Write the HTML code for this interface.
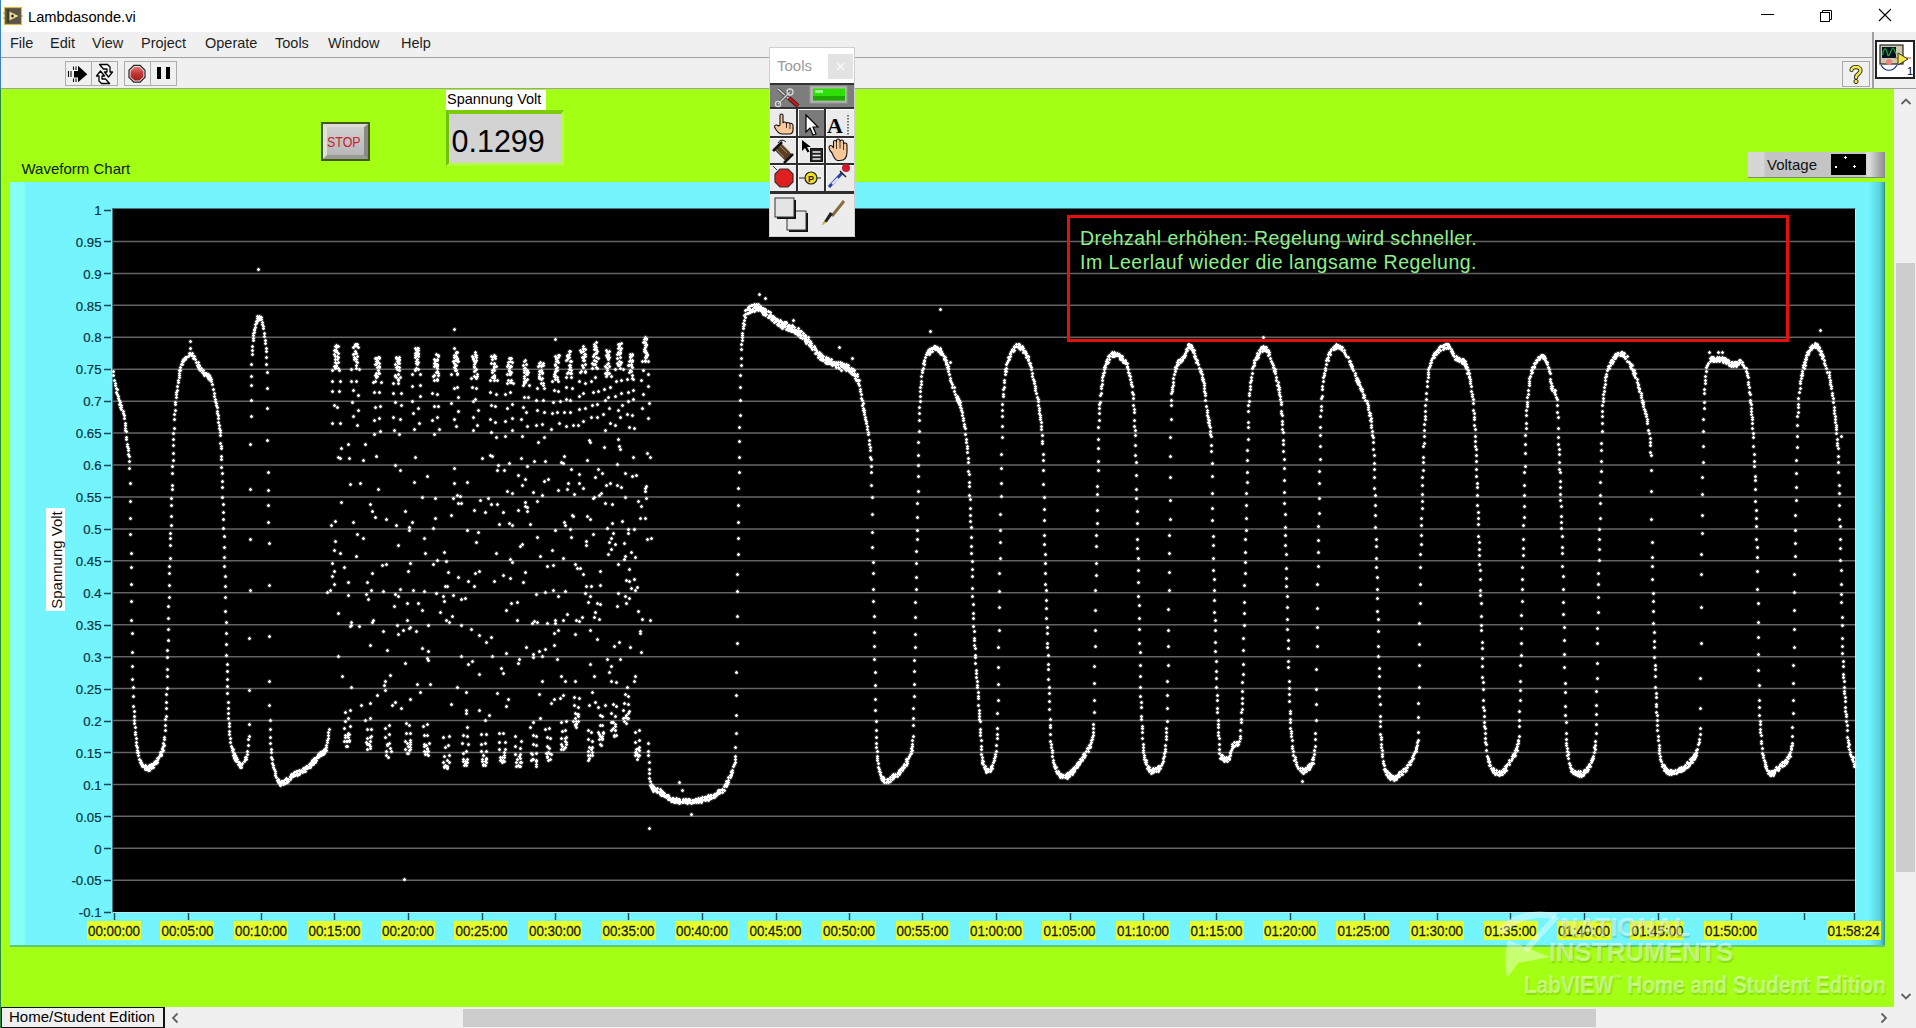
<!DOCTYPE html>
<html><head><meta charset="utf-8"><title>Lambdasonde.vi</title>
<style>
html,body{margin:0;padding:0;width:1916px;height:1028px;overflow:hidden;background:#fff;font-family:"Liberation Sans", sans-serif}
.b{position:absolute;display:block}
.t{position:absolute;line-height:1;white-space:nowrap;font-family:"Liberation Sans", sans-serif}
</style></head><body>
<div class="b" style="left:0px;top:0px;width:1916px;height:32px;background:#fff"></div><div class="b" style="left:0px;top:32px;width:1916px;height:57px;background:#f0f0f0"></div><div class="b" style="left:0px;top:57px;width:1873px;height:1px;background:#a0a0a0"></div><div class="b" style="left:0px;top:88px;width:1916px;height:1px;background:#a0a0a0"></div><div class="b" style="left:1872px;top:32px;width:2px;height:56px;background:#a0a0a0"></div><svg class="b" style="left:0px;top:0px" width="28" height="30" viewBox="0 0 28 30"><rect x="4.5" y="7.5" width="17" height="17" fill="#5a5444" stroke="#d8b850" stroke-width="1.2"/><path d="M8 9V23" stroke="#2a2618" stroke-width="1"/><path d="M9.5 11.5 L18.5 16 L9.5 20.5 Z" fill="#f0dc90"/><path d="M12.5 14.3 L14 16 L12.5 17.7 L11 16Z" fill="#1a1408"/><path d="M3 13h2M3 18h2M21 16h2" stroke="#8a9a90" stroke-width="1"/></svg><div class="t" style="left:28px;top:9.56px;font-size:14.7px;color:#000;">Lambdasonde.vi</div><div class="b" style="left:1761px;top:14px;width:13px;height:1px;background:#000"></div><svg class="b" style="left:1818px;top:8px" width="16" height="16" viewBox="0 0 16 16"><rect x="2.5" y="4.5" width="9" height="9" fill="none" stroke="#000" stroke-width="1"/><path d="M4.5 4.5 V2.5 H13.5 V11.5 H11.5" fill="none" stroke="#000" stroke-width="1"/></svg><svg class="b" style="left:1877px;top:7px" width="16" height="16" viewBox="0 0 16 16"><path d="M2 2 L14 14 M14 2 L2 14" stroke="#000" stroke-width="1.1"/></svg><div class="t" style="left:10px;top:36.23px;font-size:14.5px;color:#1e1e1e;">File</div><div class="t" style="left:50px;top:36.23px;font-size:14.5px;color:#1e1e1e;">Edit</div><div class="t" style="left:92px;top:36.23px;font-size:14.5px;color:#1e1e1e;">View</div><div class="t" style="left:141px;top:36.23px;font-size:14.5px;color:#1e1e1e;">Project</div><div class="t" style="left:205px;top:36.23px;font-size:14.5px;color:#1e1e1e;">Operate</div><div class="t" style="left:275px;top:36.23px;font-size:14.5px;color:#1e1e1e;">Tools</div><div class="t" style="left:328px;top:36.23px;font-size:14.5px;color:#1e1e1e;">Window</div><div class="t" style="left:401px;top:36.23px;font-size:14.5px;color:#1e1e1e;">Help</div><div class="b" style="left:65px;top:61px;width:27px;height:25px;background:#f0f0f0;border:1px solid #adadad;box-sizing:border-box"></div><div class="b" style="left:91px;top:61px;width:27px;height:25px;background:#f0f0f0;border:1px solid #adadad;box-sizing:border-box"></div><div class="b" style="left:124px;top:61px;width:27px;height:25px;background:#f0f0f0;border:1px solid #adadad;box-sizing:border-box"></div><div class="b" style="left:150px;top:61px;width:27px;height:25px;background:#f0f0f0;border:1px solid #adadad;box-sizing:border-box"></div><svg class="b" style="left:66px;top:62px" width="25" height="24" viewBox="0 0 25 24"><path d="M12 3.8 L21.3 12.2 L12 20.3 Z" fill="#000"/><rect x="8" y="9" width="4.5" height="6.5" fill="#000"/><path d="M7.5 4.5v3.5M10 4.5v3.5M7.5 16.5v3.5M10 16.5v3.5M2.5 9v6M5 9v6" stroke="#111" stroke-width="1.1"/></svg><svg class="b" style="left:92px;top:62px" width="25" height="24" viewBox="0 0 25 24"><path d="M7.5 2.5 H15.5 L18 5 V10 L20.5 10 L16.5 15 L12.5 10 H15 V7 H11.5 Z" fill="#fff" stroke="#000" stroke-width="1.3" stroke-linejoin="round"/><path d="M17.5 21.5 H9.5 L7 19 V14 L4.5 14 L8.5 9 L12.5 14 H10 V17 H13.5 Z" fill="#fff" stroke="#000" stroke-width="1.3" stroke-linejoin="round"/></svg><svg class="b" style="left:125px;top:62px" width="25" height="24" viewBox="0 0 25 24"><defs><linearGradient id="ab" x1="0" y1="0" x2="0" y2="1"><stop offset="0" stop-color="#e27070"/><stop offset="0.5" stop-color="#c23434"/><stop offset="1" stop-color="#9a2020"/></linearGradient></defs><path d="M8.6 2.8 H15.4 L20.6 8 V15.6 L15.4 20.8 H8.6 L3.4 15.6 V8 Z" fill="#222"/><path d="M9.1 4 H14.9 L19.4 8.5 V15.1 L14.9 19.6 H9.1 L4.6 15.1 V8.5 Z" fill="#f4e0e0"/><path d="M9.5 5 H14.5 L18.4 8.9 V14.7 L14.5 18.6 H9.5 L5.6 14.7 V8.9 Z" fill="url(#ab)"/></svg><div class="b" style="left:157px;top:67px;width:4px;height:12px;background:#000"></div><div class="b" style="left:166px;top:67px;width:4px;height:12px;background:#000"></div><div class="b" style="left:1842px;top:61px;width:28px;height:26px;background:#f0f0f0;border:1px solid #a8a8a8;box-sizing:border-box"></div><svg class="b" style="left:1846px;top:63px" width="20" height="22" viewBox="0 0 20 22"><path d="M5.5 7 C5.5 3 14.5 3 14.5 7.5 C14.5 11 10 11 10 14.5" fill="none" stroke="#222" stroke-width="4.2" stroke-linecap="round"/><path d="M5.5 7 C5.5 3 14.5 3 14.5 7.5 C14.5 11 10 11 10 14.5" fill="none" stroke="#f4ee40" stroke-width="2.4" stroke-linecap="round"/><circle cx="10" cy="18.5" r="2.1" fill="#f4ee40" stroke="#222" stroke-width="1"/></svg><div class="b" style="left:1875px;top:40px;width:40px;height:39px;background:#fff;border:2px solid #222;box-sizing:border-box"></div><svg class="b" style="left:1877px;top:42px" width="36" height="35" viewBox="0 0 36 35"><rect x="3" y="3" width="23" height="19" fill="#cfc8a8" stroke="#222" stroke-width="1.2"/><rect x="5" y="5" width="14" height="11" fill="#012"/><path d="M5.5 13 C7 5 9 5 10.5 12 C12 18 14 6 16 6 C17 6 18 10 19 12" fill="none" stroke="#1fa83a" stroke-width="1.2"/><path d="M4 23 C8 30 16 30 20 23" fill="none" stroke="#1a2a9a" stroke-width="1.2"/><circle cx="12" cy="20" r="3" fill="#f08080"/><path d="M18 16 H34" stroke="#e04020" stroke-width="1"/><path d="M21 11 L31 17 L21 23 Z" fill="#f2e640" stroke="#333" stroke-width="1"/><text x="30" y="33" font-size="11" font-family="Liberation Sans" fill="#000">1</text></svg><div class="b" style="left:1px;top:89px;width:1893px;height:918px;background:#a3ff14"></div><div class="b" style="left:0px;top:0px;width:1px;height:89px;background:#3a7fbf"></div><div class="b" style="left:0px;top:89px;width:1px;height:939px;background:#2b8a3e"></div><div class="b" style="left:1894px;top:89px;width:22px;height:918px;background:#f0f0f0"></div><div class="b" style="left:1896px;top:263px;width:19px;height:609px;background:#cdcdcd"></div><svg class="b" style="left:1899px;top:95px" width="14" height="12" viewBox="0 0 14 12"><path d="M2.5 9 L7 4.5 L11.5 9" fill="none" stroke="#606060" stroke-width="1.8"/></svg><svg class="b" style="left:1899px;top:991px" width="14" height="12" viewBox="0 0 14 12"><path d="M2.5 3 L7 7.5 L11.5 3" fill="none" stroke="#606060" stroke-width="1.8"/></svg><div class="b" style="left:1px;top:1007px;width:1915px;height:21px;background:#f0f0f0"></div><div class="b" style="left:463px;top:1009px;width:1133px;height:18px;background:#cdcdcd"></div><div class="b" style="left:1px;top:1007px;width:164px;height:21px;background:#f0f0f0;border-style:solid;border-color:#111;border-width:1px 2px 1px 1px;box-sizing:border-box"></div><div class="t" style="left:9px;top:1009.00px;font-size:15px;color:#000;">Home/Student Edition</div><svg class="b" style="left:169px;top:1011px" width="12" height="14" viewBox="0 0 12 14"><path d="M8.5 2.5 L4 7 L8.5 11.5" fill="none" stroke="#606060" stroke-width="1.8"/></svg><svg class="b" style="left:1878px;top:1011px" width="12" height="14" viewBox="0 0 12 14"><path d="M3.5 2.5 L8 7 L3.5 11.5" fill="none" stroke="#606060" stroke-width="1.8"/></svg><div class="t" style="left:21.5px;top:161.30px;font-size:15px;color:#082008;">Waveform Chart</div><div class="b" style="left:321px;top:122px;width:49px;height:39px;background:#44581e"></div><div class="b" style="left:323px;top:124px;width:45px;height:35px;background:linear-gradient(#cfcfcf,#b8b8b8);border-style:solid;border-width:3px 4px 4px 4px;border-color:#dcdcd4 #8a8a84 #9a9a94 #e2e2dc;box-sizing:border-box"></div><div class="t" style="left:326.5px;top:134.30px;font-size:15px;color:#c8202c;transform:scaleX(0.83);transform-origin:0 0">STOP</div><div class="b" style="left:446px;top:90px;width:100px;height:20px;background:#fff"></div><div class="t" style="left:447px;top:92.23px;font-size:14.5px;color:#000;">Spannung Volt</div><div class="b" style="left:446px;top:110px;width:118px;height:56px;background:#9cf012;border-top:4px solid #7ccc0c;border-left:3px solid #70c00a;border-right:3px solid #b4ff40;border-bottom:3px solid #b0ff38;box-sizing:border-box"></div><div class="b" style="left:449px;top:114px;width:112px;height:49px;background:#d3d3d3"></div><div class="t" style="left:451.5px;top:125.68px;font-size:30.5px;color:#000;">0.1299</div><div class="b" style="left:1748px;top:152px;width:137px;height:26px;background:linear-gradient(90deg,#d6d6d6 0,#d6d6d6 11%,#c4c4c4 13%,#c4c4c4 84%,#e0e0e0 88%,#8a8a8a 100%);border-bottom:1px solid #7a8a6a;box-sizing:border-box"></div><div class="t" style="left:1767px;top:156.60px;font-size:15px;color:#111;">Voltage</div><div class="b" style="left:1831px;top:154px;width:35px;height:21px;background:#000"></div><svg class="b" style="left:1831px;top:154px" width="35" height="21"><path d="M13 3h3v1h-3zM14 2h1v3h-1zM4 12h2v2h-2zM22 12h3v1h-3zM23 11h1v3h-1z" fill="#fff"/></svg><div class="b" style="left:10px;top:182px;width:1875px;height:765px;background:linear-gradient(90deg,#86fff4 0,#86fff4 14px,#74f5fe 16px,#74f5fe 1858px,#5ad2dc 1870px,#3aa8b0 1874px,#2d8a48 1875px);border-bottom:2px solid #5cc878;box-sizing:border-box"></div><div class="b" style="left:112px;top:208px;width:1744px;height:705px;background:#000;border-left:1px solid #3a7a80;border-top:1px solid #3a7a80;border-right:1px solid #bff2f6;border-bottom:1px solid #b4eef2;box-sizing:border-box"></div><svg class="b" style="left:0;top:0" width="1916" height="1028" viewBox="0 0 1916 1028"><path d="M113 241.44H1855M113 273.38H1855M113 305.32H1855M113 337.26H1855M113 369.20H1855M113 401.14H1855M113 433.08H1855M113 465.02H1855M113 496.96H1855M113 528.90H1855M113 560.84H1855M113 592.78H1855M113 624.72H1855M113 656.66H1855M113 688.60H1855M113 720.54H1855M113 752.48H1855M113 784.42H1855M113 816.36H1855M113 848.30H1855M113 880.24H1855" stroke="#636363" stroke-width="1.5"/><path d="M104 210.5H111M104 241.5H111M104 273.5H111M104 305.5H111M104 337.5H111M104 369.5H111M104 401.5H111M104 433.5H111M104 465.5H111M104 497.5H111M104 529.5H111M104 561.5H111M104 593.5H111M104 625.5H111M104 657.5H111M104 689.5H111M104 721.5H111M104 752.5H111M104 784.5H111M104 816.5H111M104 848.5H111M104 880.5H111M104 912.5H111" stroke="#0c4a58" stroke-width="1.6"/><path d="M114.5 913V920M188.5 913V920M261.5 913V920M334.5 913V920M408.5 913V920M482.5 913V920M555.5 913V920M628.5 913V920M702.5 913V920M776.5 913V920M849.5 913V920M922.5 913V920M996.5 913V920M1070.5 913V920M1143.5 913V920M1216.5 913V920M1290.5 913V920M1364.5 913V920M1437.5 913V920M1510.5 913V920M1584.5 913V920M1658.5 913V920M1731.5 913V920M1804.5 913V920M1854.5 913V920" stroke="#0c4a58" stroke-width="1.4"/><path d="M113.5 371.5h0M113.5 375.5h0M114.5 380.5h0M115.5 383.5h0M115.5 385.5h0M116.5 388.5h0M116.5 392.5h0M117.5 389.5h0M117.5 394.5h0M118.5 398.5h0M118.5 396.5h0M118.5 398.5h0M119.5 400.5h0M119.5 404.5h0M120.5 402.5h0M120.5 407.5h0M121.5 405.5h0M121.5 407.5h0M121.5 409.5h0M123.5 411.5h0M123.5 413.5h0M123.5 411.5h0M124.5 415.5h0M124.5 418.5h0M125.5 423.5h0M125.5 425.5h0M125.5 430.5h0M125.5 428.5h0M126.5 431.5h0M126.5 437.5h0M126.5 439.5h0M127.5 444.5h0M127.5 446.5h0M128.5 450.5h0M128.5 448.5h0M128.5 454.5h0M129.5 456.5h0M129.5 461.5h0M129.5 468.5h0M130.5 483.5h0M130.5 501.5h0M130.5 518.5h0M130.5 534.5h0M131.5 553.5h0M131.5 567.5h0M131.5 584.5h0M131.5 601.5h0M131.5 620.5h0M132.5 633.5h0M132.5 652.5h0M132.5 666.5h0M132.5 679.5h0M133.5 687.5h0M133.5 696.5h0M133.5 706.5h0M134.5 711.5h0M134.5 716.5h0M134.5 720.5h0M134.5 723.5h0M135.5 727.5h0M135.5 732.5h0M135.5 734.5h0M136.5 738.5h0M136.5 742.5h0M136.5 745.5h0M137.5 747.5h0M137.5 750.5h0M137.5 752.5h0M138.5 755.5h0M138.5 752.5h0M138.5 755.5h0M139.5 759.5h0M140.5 762.5h0M140.5 760.5h0M141.5 762.5h0M141.5 764.5h0M141.5 762.5h0M142.5 766.5h0M142.5 764.5h0M143.5 766.5h0M145.5 768.5h0M145.5 765.5h0M145.5 767.5h0M145.5 769.5h0M146.5 766.5h0M146.5 769.5h0M146.5 767.5h0M147.5 769.5h0M148.5 767.5h0M148.5 770.5h0M149.5 768.5h0M149.5 770.5h0M149.5 765.5h0M149.5 768.5h0M150.5 766.5h0M151.5 768.5h0M151.5 764.5h0M152.5 767.5h0M152.5 764.5h0M153.5 767.5h0M153.5 764.5h0M154.5 762.5h0M154.5 764.5h0M155.5 761.5h0M156.5 763.5h0M157.5 760.5h0M157.5 762.5h0M157.5 758.5h0M157.5 760.5h0M158.5 758.5h0M159.5 756.5h0M160.5 754.5h0M160.5 752.5h0M161.5 755.5h0M161.5 752.5h0M161.5 754.5h0M162.5 749.5h0M162.5 751.5h0M162.5 748.5h0M163.5 750.5h0M163.5 746.5h0M163.5 743.5h0M164.5 745.5h0M164.5 739.5h0M164.5 737.5h0M165.5 730.5h0M165.5 725.5h0M165.5 719.5h0M166.5 716.5h0M166.5 708.5h0M166.5 702.5h0M166.5 694.5h0M167.5 688.5h0M167.5 676.5h0M167.5 669.5h0M167.5 657.5h0M167.5 650.5h0M168.5 640.5h0M168.5 629.5h0M168.5 618.5h0M168.5 606.5h0M169.5 597.5h0M169.5 585.5h0M169.5 573.5h0M169.5 566.5h0M170.5 558.5h0M170.5 545.5h0M170.5 538.5h0M170.5 533.5h0M171.5 525.5h0M171.5 516.5h0M171.5 505.5h0M171.5 498.5h0M172.5 489.5h0M172.5 485.5h0M172.5 473.5h0M172.5 466.5h0M173.5 460.5h0M173.5 453.5h0M173.5 445.5h0M173.5 439.5h0M173.5 433.5h0M174.5 428.5h0M174.5 419.5h0M174.5 414.5h0M175.5 410.5h0M175.5 404.5h0M175.5 402.5h0M176.5 397.5h0M176.5 394.5h0M176.5 392.5h0M177.5 390.5h0M177.5 386.5h0M178.5 382.5h0M178.5 380.5h0M179.5 377.5h0M179.5 375.5h0M179.5 370.5h0M179.5 373.5h0M180.5 370.5h0M180.5 367.5h0M181.5 364.5h0M182.5 361.5h0M182.5 364.5h0M182.5 361.5h0M183.5 359.5h0M183.5 361.5h0M184.5 359.5h0M185.5 357.5h0M185.5 359.5h0M186.5 357.5h0M188.5 356.5h0M189.5 353.5h0M189.5 355.5h0M190.5 353.5h0M191.5 355.5h0M192.5 353.5h0M192.5 355.5h0M192.5 353.5h0M193.5 356.5h0M193.5 358.5h0M194.5 356.5h0M195.5 359.5h0M196.5 362.5h0M197.5 365.5h0M198.5 362.5h0M198.5 364.5h0M198.5 367.5h0M199.5 365.5h0M199.5 369.5h0M199.5 366.5h0M199.5 368.5h0M200.5 370.5h0M201.5 368.5h0M202.5 372.5h0M203.5 370.5h0M203.5 373.5h0M203.5 370.5h0M203.5 372.5h0M204.5 375.5h0M205.5 373.5h0M206.5 375.5h0M206.5 373.5h0M207.5 376.5h0M208.5 374.5h0M208.5 378.5h0M209.5 375.5h0M209.5 379.5h0M210.5 377.5h0M210.5 380.5h0M210.5 377.5h0M211.5 379.5h0M211.5 381.5h0M211.5 379.5h0M212.5 384.5h0M213.5 389.5h0M214.5 393.5h0M214.5 396.5h0M215.5 399.5h0M215.5 401.5h0M216.5 403.5h0M216.5 405.5h0M217.5 407.5h0M217.5 413.5h0M217.5 411.5h0M218.5 415.5h0M218.5 418.5h0M218.5 422.5h0M219.5 425.5h0M219.5 428.5h0M220.5 430.5h0M220.5 432.5h0M220.5 435.5h0M220.5 443.5h0M221.5 446.5h0M221.5 448.5h0M221.5 456.5h0M221.5 459.5h0M221.5 467.5h0M222.5 473.5h0M222.5 481.5h0M222.5 487.5h0M222.5 497.5h0M223.5 504.5h0M223.5 512.5h0M223.5 519.5h0M223.5 528.5h0M224.5 536.5h0M224.5 547.5h0M224.5 557.5h0M224.5 566.5h0M225.5 576.5h0M225.5 586.5h0M225.5 597.5h0M225.5 611.5h0M226.5 622.5h0M226.5 633.5h0M226.5 644.5h0M226.5 655.5h0M227.5 664.5h0M227.5 671.5h0M227.5 679.5h0M227.5 686.5h0M227.5 693.5h0M228.5 702.5h0M228.5 708.5h0M228.5 713.5h0M228.5 718.5h0M229.5 723.5h0M229.5 726.5h0M229.5 731.5h0M229.5 734.5h0M230.5 738.5h0M230.5 742.5h0M231.5 746.5h0M232.5 748.5h0M232.5 750.5h0M233.5 752.5h0M233.5 749.5h0M233.5 755.5h0M234.5 753.5h0M234.5 757.5h0M234.5 755.5h0M234.5 758.5h0M235.5 755.5h0M235.5 758.5h0M235.5 760.5h0M236.5 757.5h0M236.5 761.5h0M236.5 759.5h0M236.5 761.5h0M237.5 759.5h0M237.5 761.5h0M238.5 764.5h0M239.5 762.5h0M239.5 765.5h0M240.5 767.5h0M240.5 764.5h0M241.5 767.5h0M241.5 765.5h0M242.5 763.5h0M244.5 761.5h0M245.5 759.5h0M245.5 757.5h0M246.5 759.5h0M246.5 757.5h0M247.5 754.5h0M247.5 751.5h0M248.5 745.5h0M248.5 739.5h0M249.5 736.5h0M249.5 724.5h0M249.5 690.5h0M249.5 638.5h0M250.5 590.5h0M250.5 539.5h0M250.5 489.5h0M250.5 444.5h0M251.5 416.5h0M251.5 400.5h0M251.5 385.5h0M251.5 376.5h0M251.5 364.5h0M252.5 354.5h0M252.5 350.5h0M252.5 346.5h0M253.5 340.5h0M253.5 338.5h0M253.5 335.5h0M253.5 333.5h0M254.5 330.5h0M254.5 332.5h0M254.5 329.5h0M255.5 327.5h0M255.5 324.5h0M256.5 321.5h0M256.5 323.5h0M257.5 321.5h0M257.5 318.5h0M257.5 316.5h0M258.5 320.5h0M258.5 317.5h0M258.5 320.5h0M258.5 318.5h0M259.5 316.5h0M260.5 319.5h0M261.5 317.5h0M261.5 319.5h0M262.5 322.5h0M262.5 324.5h0M263.5 326.5h0M263.5 328.5h0M264.5 333.5h0M264.5 336.5h0M265.5 340.5h0M265.5 343.5h0M266.5 348.5h0M266.5 351.5h0M266.5 357.5h0M266.5 364.5h0M267.5 372.5h0M267.5 388.5h0M267.5 408.5h0M267.5 440.5h0M268.5 472.5h0M268.5 490.5h0M268.5 505.5h0M268.5 522.5h0M269.5 543.5h0M269.5 585.5h0M269.5 636.5h0M269.5 681.5h0M269.5 705.5h0M270.5 720.5h0M270.5 729.5h0M270.5 737.5h0M270.5 743.5h0M271.5 749.5h0M271.5 752.5h0M271.5 757.5h0M272.5 759.5h0M272.5 763.5h0M273.5 765.5h0M273.5 767.5h0M274.5 769.5h0M275.5 773.5h0M275.5 771.5h0M275.5 775.5h0M276.5 777.5h0M277.5 780.5h0M278.5 782.5h0M278.5 779.5h0M279.5 781.5h0M279.5 783.5h0M279.5 781.5h0M280.5 783.5h0M280.5 785.5h0M281.5 783.5h0M281.5 781.5h0M281.5 784.5h0M282.5 781.5h0M282.5 783.5h0M283.5 781.5h0M283.5 784.5h0M283.5 782.5h0M284.5 780.5h0M284.5 782.5h0M284.5 780.5h0M285.5 783.5h0M286.5 779.5h0M286.5 782.5h0M286.5 780.5h0M286.5 778.5h0M287.5 782.5h0M287.5 779.5h0M288.5 781.5h0M288.5 779.5h0M290.5 777.5h0M290.5 779.5h0M290.5 776.5h0M290.5 779.5h0M291.5 777.5h0M291.5 774.5h0M293.5 773.5h0M293.5 776.5h0M293.5 773.5h0M293.5 775.5h0M294.5 772.5h0M294.5 775.5h0M294.5 772.5h0M295.5 775.5h0M296.5 771.5h0M296.5 774.5h0M296.5 771.5h0M297.5 775.5h0M297.5 771.5h0M297.5 773.5h0M299.5 774.5h0M299.5 770.5h0M300.5 772.5h0M301.5 770.5h0M302.5 772.5h0M303.5 768.5h0M303.5 770.5h0M304.5 768.5h0M304.5 771.5h0M305.5 768.5h0M305.5 771.5h0M305.5 767.5h0M305.5 769.5h0M306.5 766.5h0M307.5 768.5h0M307.5 766.5h0M309.5 766.5h0M309.5 764.5h0M309.5 767.5h0M310.5 763.5h0M310.5 765.5h0M310.5 763.5h0M310.5 767.5h0M311.5 763.5h0M311.5 765.5h0M311.5 762.5h0M311.5 764.5h0M312.5 760.5h0M313.5 764.5h0M313.5 760.5h0M313.5 763.5h0M314.5 761.5h0M314.5 758.5h0M315.5 762.5h0M315.5 758.5h0M316.5 760.5h0M316.5 758.5h0M317.5 756.5h0M318.5 754.5h0M318.5 757.5h0M318.5 754.5h0M319.5 756.5h0M319.5 753.5h0M319.5 756.5h0M319.5 753.5h0M320.5 755.5h0M320.5 752.5h0M321.5 755.5h0M321.5 753.5h0M322.5 751.5h0M323.5 754.5h0M323.5 752.5h0M324.5 750.5h0M324.5 753.5h0M324.5 749.5h0M325.5 751.5h0M325.5 749.5h0M325.5 751.5h0M326.5 747.5h0M326.5 750.5h0M326.5 745.5h0M327.5 742.5h0M327.5 740.5h0M328.5 738.5h0M328.5 735.5h0M328.5 732.5h0M329.5 729.5h0M337.5 356.5h0M335.5 351.5h0M336.5 347.5h0M337.5 352.5h0M335.5 368.5h0M337.5 359.5h0M335.5 356.5h0M334.5 366.5h0M336.5 350.5h0M335.5 362.5h0M335.5 346.5h0M336.5 363.5h0M338.5 368.5h0M338.5 346.5h0M338.5 362.5h0M336.5 366.5h0M336.5 345.5h0M334.5 350.5h0M334.5 354.5h0M338.5 346.5h0M338.5 357.5h0M338.5 353.5h0M335.5 359.5h0M338.5 353.5h0M336.5 345.5h0M337.5 359.5h0M336.5 365.5h0M335.5 350.5h0M332.5 370.5h0M332.5 381.5h0M332.5 391.5h0M334.5 405.5h0M332.5 423.5h0M339.5 370.5h0M340.5 381.5h0M339.5 391.5h0M337.5 407.5h0M340.5 423.5h0M347.5 735.5h0M346.5 746.5h0M348.5 737.5h0M349.5 740.5h0M345.5 737.5h0M346.5 741.5h0M348.5 733.5h0M347.5 746.5h0M347.5 741.5h0M344.5 741.5h0M345.5 735.5h0M344.5 728.5h0M345.5 721.5h0M345.5 712.5h0M349.5 741.5h0M349.5 734.5h0M350.5 726.5h0M348.5 718.5h0M350.5 710.5h0M356.5 353.5h0M356.5 361.5h0M354.5 357.5h0M355.5 353.5h0M353.5 354.5h0M353.5 347.5h0M356.5 359.5h0M354.5 359.5h0M356.5 344.5h0M357.5 362.5h0M356.5 368.5h0M357.5 344.5h0M355.5 358.5h0M358.5 347.5h0M356.5 365.5h0M355.5 344.5h0M356.5 365.5h0M357.5 356.5h0M354.5 346.5h0M355.5 358.5h0M355.5 351.5h0M359.5 369.5h0M354.5 346.5h0M357.5 346.5h0M357.5 356.5h0M355.5 351.5h0M351.5 369.5h0M351.5 381.5h0M353.5 390.5h0M352.5 402.5h0M353.5 416.5h0M359.5 369.5h0M356.5 381.5h0M358.5 395.5h0M358.5 410.5h0M357.5 425.5h0M370.5 737.5h0M367.5 749.5h0M366.5 742.5h0M370.5 748.5h0M368.5 744.5h0M370.5 741.5h0M370.5 746.5h0M367.5 744.5h0M367.5 738.5h0M367.5 729.5h0M365.5 720.5h0M369.5 744.5h0M371.5 736.5h0M371.5 729.5h0M370.5 718.5h0M375.5 375.5h0M376.5 364.5h0M379.5 363.5h0M376.5 375.5h0M379.5 358.5h0M376.5 377.5h0M379.5 357.5h0M375.5 364.5h0M375.5 358.5h0M379.5 367.5h0M376.5 361.5h0M379.5 373.5h0M378.5 357.5h0M377.5 376.5h0M376.5 358.5h0M378.5 366.5h0M377.5 362.5h0M375.5 364.5h0M379.5 366.5h0M377.5 360.5h0M375.5 381.5h0M378.5 362.5h0M378.5 370.5h0M377.5 367.5h0M376.5 373.5h0M378.5 373.5h0M373.5 382.5h0M374.5 392.5h0M375.5 407.5h0M374.5 420.5h0M374.5 434.5h0M381.5 382.5h0M379.5 392.5h0M380.5 406.5h0M379.5 418.5h0M380.5 431.5h0M386.5 755.5h0M390.5 748.5h0M387.5 745.5h0M388.5 757.5h0M387.5 744.5h0M386.5 751.5h0M387.5 744.5h0M385.5 737.5h0M385.5 728.5h0M391.5 751.5h0M389.5 743.5h0M389.5 734.5h0M389.5 725.5h0M395.5 375.5h0M398.5 380.5h0M398.5 363.5h0M397.5 366.5h0M397.5 369.5h0M395.5 376.5h0M399.5 359.5h0M396.5 367.5h0M399.5 359.5h0M398.5 374.5h0M400.5 377.5h0M397.5 361.5h0M399.5 370.5h0M396.5 377.5h0M396.5 358.5h0M398.5 379.5h0M397.5 358.5h0M399.5 363.5h0M399.5 357.5h0M398.5 374.5h0M395.5 364.5h0M397.5 359.5h0M397.5 369.5h0M396.5 357.5h0M399.5 360.5h0M397.5 367.5h0M399.5 367.5h0M393.5 383.5h0M393.5 393.5h0M395.5 402.5h0M393.5 417.5h0M394.5 430.5h0M398.5 383.5h0M401.5 393.5h0M401.5 405.5h0M400.5 419.5h0M399.5 434.5h0M407.5 753.5h0M407.5 743.5h0M410.5 742.5h0M408.5 753.5h0M410.5 744.5h0M409.5 750.5h0M408.5 746.5h0M410.5 747.5h0M405.5 749.5h0M405.5 741.5h0M406.5 733.5h0M406.5 723.5h0M410.5 749.5h0M410.5 740.5h0M410.5 733.5h0M409.5 725.5h0M416.5 352.5h0M417.5 348.5h0M416.5 363.5h0M415.5 348.5h0M418.5 356.5h0M418.5 354.5h0M415.5 357.5h0M418.5 369.5h0M418.5 353.5h0M417.5 359.5h0M417.5 350.5h0M416.5 368.5h0M415.5 370.5h0M418.5 362.5h0M416.5 361.5h0M418.5 350.5h0M417.5 364.5h0M416.5 349.5h0M415.5 369.5h0M415.5 355.5h0M417.5 348.5h0M416.5 355.5h0M415.5 353.5h0M418.5 348.5h0M418.5 356.5h0M416.5 350.5h0M412.5 374.5h0M412.5 386.5h0M412.5 401.5h0M413.5 413.5h0M414.5 429.5h0M420.5 374.5h0M420.5 385.5h0M420.5 396.5h0M418.5 408.5h0M419.5 423.5h0M427.5 748.5h0M426.5 745.5h0M425.5 754.5h0M428.5 755.5h0M424.5 746.5h0M427.5 754.5h0M427.5 749.5h0M425.5 752.5h0M428.5 751.5h0M424.5 751.5h0M424.5 744.5h0M424.5 735.5h0M423.5 726.5h0M427.5 751.5h0M429.5 743.5h0M427.5 735.5h0M427.5 724.5h0M434.5 363.5h0M437.5 365.5h0M434.5 375.5h0M436.5 366.5h0M435.5 361.5h0M433.5 376.5h0M436.5 354.5h0M437.5 359.5h0M437.5 364.5h0M437.5 368.5h0M437.5 366.5h0M436.5 372.5h0M436.5 366.5h0M435.5 364.5h0M434.5 359.5h0M438.5 355.5h0M436.5 364.5h0M437.5 360.5h0M438.5 375.5h0M438.5 373.5h0M437.5 371.5h0M434.5 366.5h0M437.5 359.5h0M438.5 356.5h0M437.5 379.5h0M434.5 380.5h0M432.5 393.5h0M434.5 406.5h0M432.5 420.5h0M434.5 434.5h0M437.5 380.5h0M437.5 394.5h0M438.5 406.5h0M437.5 417.5h0M439.5 429.5h0M444.5 766.5h0M447.5 768.5h0M444.5 767.5h0M447.5 766.5h0M447.5 760.5h0M447.5 767.5h0M445.5 765.5h0M443.5 762.5h0M444.5 756.5h0M445.5 747.5h0M443.5 737.5h0M449.5 762.5h0M449.5 755.5h0M448.5 745.5h0M449.5 736.5h0M455.5 365.5h0M457.5 358.5h0M455.5 368.5h0M456.5 365.5h0M457.5 361.5h0M454.5 363.5h0M456.5 353.5h0M453.5 361.5h0M455.5 356.5h0M455.5 360.5h0M454.5 357.5h0M456.5 352.5h0M454.5 355.5h0M456.5 359.5h0M455.5 365.5h0M457.5 359.5h0M457.5 373.5h0M454.5 367.5h0M456.5 370.5h0M454.5 348.5h0M457.5 352.5h0M456.5 359.5h0M458.5 361.5h0M457.5 358.5h0M455.5 364.5h0M456.5 356.5h0M455.5 370.5h0M451.5 374.5h0M454.5 388.5h0M451.5 403.5h0M454.5 419.5h0M457.5 374.5h0M457.5 387.5h0M458.5 397.5h0M458.5 411.5h0M456.5 426.5h0M463.5 759.5h0M463.5 761.5h0M465.5 763.5h0M467.5 762.5h0M464.5 765.5h0M466.5 765.5h0M465.5 761.5h0M463.5 759.5h0M463.5 753.5h0M462.5 743.5h0M463.5 735.5h0M467.5 759.5h0M466.5 751.5h0M468.5 744.5h0M467.5 736.5h0M467.5 727.5h0M472.5 356.5h0M475.5 352.5h0M474.5 366.5h0M475.5 356.5h0M475.5 354.5h0M474.5 367.5h0M476.5 377.5h0M474.5 360.5h0M475.5 370.5h0M473.5 359.5h0M474.5 376.5h0M474.5 361.5h0M474.5 364.5h0M474.5 367.5h0M476.5 355.5h0M477.5 374.5h0M476.5 357.5h0M475.5 352.5h0M475.5 362.5h0M476.5 369.5h0M474.5 371.5h0M473.5 358.5h0M476.5 360.5h0M477.5 376.5h0M474.5 361.5h0M471.5 378.5h0M472.5 387.5h0M473.5 401.5h0M473.5 417.5h0M473.5 430.5h0M476.5 378.5h0M476.5 388.5h0M475.5 399.5h0M478.5 410.5h0M477.5 425.5h0M485.5 765.5h0M485.5 761.5h0M485.5 765.5h0M483.5 765.5h0M486.5 758.5h0M483.5 764.5h0M486.5 762.5h0M482.5 761.5h0M483.5 755.5h0M482.5 759.5h0M481.5 751.5h0M481.5 744.5h0M481.5 734.5h0M486.5 759.5h0M486.5 751.5h0M485.5 743.5h0M486.5 734.5h0M494.5 366.5h0M492.5 372.5h0M492.5 370.5h0M494.5 355.5h0M494.5 370.5h0M494.5 364.5h0M494.5 356.5h0M492.5 359.5h0M494.5 378.5h0M494.5 363.5h0M494.5 377.5h0M492.5 377.5h0M491.5 363.5h0M494.5 376.5h0M492.5 377.5h0M492.5 357.5h0M494.5 375.5h0M493.5 369.5h0M494.5 367.5h0M494.5 380.5h0M495.5 356.5h0M495.5 358.5h0M491.5 356.5h0M493.5 377.5h0M496.5 366.5h0M490.5 380.5h0M490.5 392.5h0M491.5 405.5h0M490.5 419.5h0M491.5 432.5h0M497.5 380.5h0M496.5 394.5h0M495.5 406.5h0M495.5 422.5h0M496.5 437.5h0M504.5 761.5h0M504.5 755.5h0M502.5 757.5h0M504.5 752.5h0M500.5 760.5h0M503.5 760.5h0M502.5 762.5h0M501.5 760.5h0M500.5 757.5h0M499.5 749.5h0M499.5 742.5h0M499.5 733.5h0M504.5 757.5h0M505.5 749.5h0M505.5 742.5h0M503.5 733.5h0M511.5 358.5h0M507.5 374.5h0M511.5 372.5h0M510.5 366.5h0M510.5 373.5h0M511.5 380.5h0M510.5 358.5h0M509.5 371.5h0M508.5 364.5h0M509.5 374.5h0M508.5 380.5h0M509.5 358.5h0M510.5 374.5h0M509.5 370.5h0M511.5 366.5h0M510.5 372.5h0M509.5 368.5h0M507.5 366.5h0M509.5 358.5h0M509.5 370.5h0M510.5 382.5h0M509.5 358.5h0M511.5 382.5h0M508.5 362.5h0M510.5 361.5h0M508.5 362.5h0M512.5 362.5h0M511.5 358.5h0M507.5 383.5h0M505.5 394.5h0M507.5 408.5h0M505.5 421.5h0M505.5 436.5h0M513.5 383.5h0M510.5 392.5h0M512.5 404.5h0M512.5 418.5h0M512.5 430.5h0M516.5 766.5h0M517.5 759.5h0M520.5 754.5h0M518.5 765.5h0M520.5 758.5h0M520.5 766.5h0M520.5 762.5h0M519.5 766.5h0M516.5 762.5h0M515.5 754.5h0M515.5 746.5h0M515.5 736.5h0M521.5 762.5h0M519.5 756.5h0M520.5 748.5h0M521.5 741.5h0M524.5 361.5h0M523.5 365.5h0M526.5 372.5h0M526.5 374.5h0M524.5 370.5h0M524.5 361.5h0M524.5 381.5h0M527.5 370.5h0M524.5 361.5h0M524.5 370.5h0M524.5 382.5h0M526.5 364.5h0M526.5 380.5h0M524.5 378.5h0M524.5 376.5h0M525.5 382.5h0M528.5 372.5h0M525.5 368.5h0M527.5 379.5h0M527.5 371.5h0M524.5 383.5h0M527.5 374.5h0M524.5 372.5h0M525.5 360.5h0M524.5 368.5h0M523.5 385.5h0M524.5 397.5h0M523.5 407.5h0M521.5 419.5h0M522.5 436.5h0M529.5 385.5h0M528.5 397.5h0M526.5 412.5h0M527.5 426.5h0M532.5 754.5h0M536.5 766.5h0M536.5 761.5h0M536.5 764.5h0M532.5 759.5h0M536.5 764.5h0M533.5 759.5h0M531.5 760.5h0M531.5 753.5h0M533.5 744.5h0M533.5 735.5h0M536.5 760.5h0M536.5 753.5h0M536.5 745.5h0M536.5 736.5h0M540.5 362.5h0M538.5 366.5h0M539.5 371.5h0M539.5 365.5h0M539.5 378.5h0M539.5 363.5h0M541.5 366.5h0M542.5 364.5h0M542.5 372.5h0M539.5 374.5h0M541.5 372.5h0M540.5 378.5h0M539.5 376.5h0M540.5 362.5h0M541.5 379.5h0M543.5 385.5h0M539.5 365.5h0M542.5 373.5h0M543.5 383.5h0M539.5 377.5h0M543.5 365.5h0M541.5 370.5h0M543.5 363.5h0M542.5 378.5h0M541.5 383.5h0M537.5 388.5h0M536.5 400.5h0M537.5 410.5h0M536.5 425.5h0M538.5 442.5h0M544.5 388.5h0M543.5 400.5h0M544.5 412.5h0M542.5 424.5h0M544.5 437.5h0M547.5 756.5h0M549.5 753.5h0M548.5 747.5h0M548.5 760.5h0M547.5 757.5h0M546.5 753.5h0M548.5 752.5h0M550.5 759.5h0M547.5 753.5h0M547.5 746.5h0M547.5 737.5h0M545.5 729.5h0M551.5 754.5h0M549.5 748.5h0M550.5 738.5h0M549.5 728.5h0M555.5 364.5h0M557.5 379.5h0M558.5 357.5h0M554.5 376.5h0M558.5 355.5h0M558.5 357.5h0M557.5 360.5h0M556.5 369.5h0M555.5 379.5h0M556.5 368.5h0M557.5 377.5h0M556.5 359.5h0M555.5 375.5h0M556.5 359.5h0M554.5 374.5h0M555.5 356.5h0M557.5 370.5h0M558.5 362.5h0M556.5 369.5h0M556.5 361.5h0M556.5 358.5h0M555.5 371.5h0M555.5 365.5h0M555.5 372.5h0M557.5 367.5h0M559.5 355.5h0M555.5 377.5h0M558.5 355.5h0M552.5 381.5h0M554.5 390.5h0M553.5 402.5h0M552.5 413.5h0M551.5 429.5h0M558.5 381.5h0M558.5 391.5h0M560.5 401.5h0M557.5 412.5h0M559.5 423.5h0M563.5 749.5h0M562.5 746.5h0M564.5 748.5h0M565.5 741.5h0M566.5 737.5h0M565.5 747.5h0M561.5 749.5h0M566.5 742.5h0M561.5 744.5h0M561.5 738.5h0M562.5 731.5h0M561.5 722.5h0M566.5 744.5h0M565.5 738.5h0M565.5 730.5h0M566.5 721.5h0M567.5 359.5h0M568.5 372.5h0M570.5 367.5h0M569.5 365.5h0M570.5 361.5h0M567.5 373.5h0M568.5 355.5h0M570.5 373.5h0M567.5 356.5h0M569.5 369.5h0M569.5 351.5h0M571.5 361.5h0M568.5 372.5h0M569.5 357.5h0M570.5 365.5h0M567.5 355.5h0M568.5 357.5h0M566.5 360.5h0M569.5 357.5h0M571.5 373.5h0M571.5 361.5h0M570.5 373.5h0M570.5 351.5h0M569.5 354.5h0M569.5 369.5h0M571.5 370.5h0M566.5 377.5h0M566.5 387.5h0M566.5 399.5h0M564.5 412.5h0M566.5 426.5h0M571.5 377.5h0M572.5 388.5h0M570.5 400.5h0M570.5 412.5h0M573.5 425.5h0M578.5 714.5h0M575.5 725.5h0M576.5 723.5h0M576.5 727.5h0M578.5 716.5h0M576.5 724.5h0M576.5 721.5h0M575.5 718.5h0M575.5 724.5h0M573.5 721.5h0M575.5 713.5h0M574.5 705.5h0M574.5 697.5h0M578.5 721.5h0M577.5 714.5h0M578.5 707.5h0M579.5 698.5h0M583.5 351.5h0M582.5 365.5h0M583.5 367.5h0M581.5 371.5h0M583.5 367.5h0M584.5 356.5h0M583.5 346.5h0M585.5 356.5h0M585.5 354.5h0M581.5 371.5h0M583.5 348.5h0M585.5 372.5h0M581.5 352.5h0M584.5 354.5h0M582.5 357.5h0M584.5 360.5h0M585.5 364.5h0M583.5 360.5h0M585.5 371.5h0M583.5 349.5h0M580.5 350.5h0M583.5 358.5h0M585.5 349.5h0M580.5 372.5h0M579.5 381.5h0M579.5 396.5h0M579.5 409.5h0M578.5 425.5h0M585.5 372.5h0M585.5 383.5h0M583.5 393.5h0M585.5 408.5h0M583.5 421.5h0M590.5 755.5h0M592.5 752.5h0M590.5 755.5h0M588.5 760.5h0M590.5 755.5h0M591.5 749.5h0M589.5 758.5h0M588.5 751.5h0M588.5 755.5h0M589.5 747.5h0M588.5 739.5h0M588.5 730.5h0M592.5 755.5h0M592.5 747.5h0M592.5 741.5h0M591.5 732.5h0M594.5 354.5h0M596.5 353.5h0M595.5 345.5h0M594.5 364.5h0M595.5 349.5h0M594.5 360.5h0M593.5 364.5h0M595.5 364.5h0M594.5 349.5h0M595.5 347.5h0M592.5 363.5h0M594.5 344.5h0M596.5 347.5h0M593.5 356.5h0M596.5 352.5h0M596.5 361.5h0M596.5 357.5h0M596.5 367.5h0M596.5 342.5h0M598.5 358.5h0M596.5 349.5h0M594.5 346.5h0M597.5 351.5h0M592.5 368.5h0M591.5 381.5h0M593.5 392.5h0M592.5 405.5h0M591.5 417.5h0M597.5 368.5h0M595.5 377.5h0M598.5 391.5h0M597.5 404.5h0M597.5 417.5h0M601.5 737.5h0M599.5 734.5h0M601.5 745.5h0M600.5 736.5h0M602.5 738.5h0M603.5 733.5h0M600.5 744.5h0M602.5 736.5h0M599.5 739.5h0M598.5 732.5h0M600.5 725.5h0M600.5 715.5h0M602.5 739.5h0M603.5 732.5h0M602.5 725.5h0M602.5 716.5h0M607.5 370.5h0M606.5 350.5h0M609.5 366.5h0M605.5 366.5h0M608.5 358.5h0M607.5 368.5h0M607.5 372.5h0M608.5 357.5h0M608.5 359.5h0M608.5 354.5h0M606.5 367.5h0M608.5 357.5h0M607.5 352.5h0M608.5 355.5h0M609.5 351.5h0M608.5 373.5h0M606.5 355.5h0M607.5 357.5h0M606.5 374.5h0M608.5 363.5h0M606.5 367.5h0M605.5 373.5h0M607.5 364.5h0M607.5 374.5h0M607.5 357.5h0M609.5 357.5h0M609.5 373.5h0M606.5 376.5h0M604.5 389.5h0M605.5 400.5h0M603.5 414.5h0M605.5 430.5h0M611.5 376.5h0M610.5 387.5h0M608.5 397.5h0M609.5 408.5h0M610.5 423.5h0M614.5 735.5h0M612.5 729.5h0M616.5 735.5h0M614.5 735.5h0M611.5 722.5h0M615.5 726.5h0M614.5 736.5h0M613.5 722.5h0M613.5 728.5h0M611.5 730.5h0M612.5 722.5h0M611.5 713.5h0M613.5 704.5h0M615.5 730.5h0M615.5 724.5h0M615.5 716.5h0M616.5 706.5h0M619.5 344.5h0M618.5 365.5h0M620.5 362.5h0M619.5 346.5h0M617.5 358.5h0M618.5 344.5h0M619.5 365.5h0M617.5 354.5h0M620.5 357.5h0M618.5 348.5h0M621.5 343.5h0M619.5 345.5h0M621.5 362.5h0M620.5 352.5h0M621.5 362.5h0M620.5 364.5h0M618.5 364.5h0M619.5 361.5h0M617.5 363.5h0M620.5 352.5h0M618.5 352.5h0M619.5 354.5h0M620.5 350.5h0M620.5 353.5h0M621.5 348.5h0M619.5 365.5h0M620.5 368.5h0M615.5 369.5h0M616.5 381.5h0M615.5 396.5h0M618.5 410.5h0M615.5 425.5h0M623.5 369.5h0M621.5 380.5h0M621.5 393.5h0M622.5 405.5h0M620.5 417.5h0M626.5 723.5h0M628.5 713.5h0M624.5 721.5h0M625.5 717.5h0M628.5 718.5h0M626.5 715.5h0M623.5 718.5h0M623.5 710.5h0M624.5 703.5h0M625.5 694.5h0M627.5 718.5h0M629.5 711.5h0M628.5 704.5h0M628.5 696.5h0M627.5 687.5h0M630.5 370.5h0M631.5 364.5h0M628.5 365.5h0M631.5 371.5h0M629.5 372.5h0M632.5 361.5h0M629.5 365.5h0M631.5 356.5h0M630.5 371.5h0M630.5 356.5h0M632.5 378.5h0M630.5 354.5h0M630.5 360.5h0M632.5 354.5h0M632.5 367.5h0M631.5 356.5h0M631.5 361.5h0M630.5 357.5h0M629.5 361.5h0M632.5 375.5h0M631.5 365.5h0M632.5 355.5h0M632.5 360.5h0M631.5 355.5h0M627.5 379.5h0M628.5 392.5h0M628.5 401.5h0M627.5 414.5h0M629.5 427.5h0M633.5 379.5h0M633.5 390.5h0M633.5 399.5h0M632.5 415.5h0M634.5 428.5h0M638.5 756.5h0M637.5 754.5h0M636.5 752.5h0M637.5 759.5h0M635.5 752.5h0M639.5 750.5h0M638.5 748.5h0M639.5 755.5h0M635.5 755.5h0M636.5 749.5h0M635.5 742.5h0M635.5 732.5h0M638.5 755.5h0M639.5 747.5h0M639.5 740.5h0M639.5 730.5h0M644.5 349.5h0M645.5 357.5h0M645.5 350.5h0M646.5 355.5h0M644.5 351.5h0M646.5 357.5h0M645.5 361.5h0M643.5 342.5h0M645.5 357.5h0M645.5 343.5h0M646.5 338.5h0M647.5 355.5h0M646.5 353.5h0M645.5 347.5h0M647.5 354.5h0M645.5 337.5h0M646.5 345.5h0M646.5 339.5h0M645.5 345.5h0M646.5 352.5h0M646.5 344.5h0M644.5 339.5h0M645.5 342.5h0M646.5 339.5h0M645.5 352.5h0M644.5 342.5h0M645.5 360.5h0M642.5 361.5h0M643.5 370.5h0M641.5 380.5h0M643.5 394.5h0M642.5 408.5h0M648.5 361.5h0M648.5 374.5h0M648.5 386.5h0M649.5 403.5h0M648.5 418.5h0M332.5 563.5h0M334.5 584.5h0M335.5 541.5h0M332.5 576.5h0M334.5 550.5h0M331.5 525.5h0M327.5 592.5h0M334.5 571.5h0M330.5 590.5h0M335.5 521.5h0M338.5 656.5h0M340.5 553.5h0M338.5 457.5h0M341.5 502.5h0M338.5 613.5h0M348.5 595.5h0M342.5 676.5h0M341.5 448.5h0M340.5 458.5h0M344.5 567.5h0M348.5 582.5h0M356.5 556.5h0M350.5 484.5h0M350.5 626.5h0M351.5 622.5h0M351.5 687.5h0M351.5 625.5h0M353.5 522.5h0M349.5 458.5h0M348.5 444.5h0M359.5 626.5h0M363.5 538.5h0M361.5 705.5h0M363.5 460.5h0M357.5 534.5h0M360.5 483.5h0M368.5 599.5h0M365.5 444.5h0M366.5 594.5h0M367.5 582.5h0M375.5 517.5h0M373.5 620.5h0M372.5 511.5h0M370.5 504.5h0M372.5 573.5h0M376.5 456.5h0M370.5 645.5h0M372.5 622.5h0M371.5 590.5h0M370.5 703.5h0M378.5 489.5h0M383.5 631.5h0M383.5 591.5h0M382.5 565.5h0M385.5 681.5h0M385.5 690.5h0M377.5 695.5h0M387.5 650.5h0M384.5 685.5h0M386.5 564.5h0M386.5 519.5h0M390.5 675.5h0M392.5 705.5h0M398.5 545.5h0M395.5 594.5h0M396.5 525.5h0M395.5 702.5h0M395.5 465.5h0M398.5 634.5h0M394.5 606.5h0M397.5 625.5h0M405.5 663.5h0M400.5 470.5h0M400.5 589.5h0M398.5 596.5h0M407.5 620.5h0M405.5 511.5h0M403.5 630.5h0M409.5 527.5h0M401.5 708.5h0M410.5 627.5h0M412.5 522.5h0M410.5 699.5h0M418.5 603.5h0M410.5 563.5h0M407.5 603.5h0M408.5 571.5h0M413.5 590.5h0M409.5 628.5h0M409.5 530.5h0M424.5 591.5h0M422.5 610.5h0M415.5 457.5h0M417.5 684.5h0M414.5 482.5h0M416.5 631.5h0M422.5 648.5h0M420.5 692.5h0M422.5 497.5h0M424.5 538.5h0M425.5 553.5h0M433.5 564.5h0M427.5 476.5h0M430.5 684.5h0M428.5 651.5h0M427.5 658.5h0M436.5 593.5h0M428.5 625.5h0M433.5 528.5h0M428.5 660.5h0M447.5 586.5h0M440.5 612.5h0M437.5 560.5h0M435.5 518.5h0M446.5 561.5h0M444.5 601.5h0M443.5 596.5h0M435.5 498.5h0M445.5 586.5h0M444.5 552.5h0M454.5 468.5h0M449.5 622.5h0M451.5 704.5h0M446.5 620.5h0M452.5 616.5h0M451.5 515.5h0M448.5 572.5h0M453.5 498.5h0M453.5 595.5h0M454.5 483.5h0M458.5 577.5h0M461.5 625.5h0M461.5 503.5h0M458.5 503.5h0M461.5 656.5h0M461.5 599.5h0M465.5 598.5h0M457.5 687.5h0M460.5 496.5h0M457.5 495.5h0M471.5 629.5h0M466.5 713.5h0M467.5 482.5h0M472.5 661.5h0M468.5 664.5h0M475.5 573.5h0M468.5 581.5h0M467.5 530.5h0M466.5 710.5h0M466.5 692.5h0M474.5 510.5h0M480.5 500.5h0M479.5 710.5h0M476.5 542.5h0M479.5 674.5h0M474.5 586.5h0M479.5 571.5h0M478.5 532.5h0M482.5 458.5h0M479.5 635.5h0M491.5 637.5h0M485.5 720.5h0M485.5 512.5h0M491.5 504.5h0M486.5 642.5h0M489.5 715.5h0M492.5 456.5h0M494.5 581.5h0M488.5 498.5h0M490.5 455.5h0M499.5 524.5h0M501.5 668.5h0M492.5 656.5h0M497.5 693.5h0M496.5 553.5h0M497.5 470.5h0M498.5 465.5h0M504.5 470.5h0M503.5 512.5h0M497.5 504.5h0M503.5 673.5h0M506.5 706.5h0M510.5 559.5h0M508.5 699.5h0M510.5 578.5h0M507.5 491.5h0M509.5 523.5h0M506.5 653.5h0M506.5 610.5h0M503.5 575.5h0M511.5 603.5h0M509.5 463.5h0M517.5 620.5h0M512.5 562.5h0M512.5 525.5h0M518.5 663.5h0M519.5 659.5h0M512.5 493.5h0M517.5 602.5h0M525.5 572.5h0M518.5 475.5h0M525.5 502.5h0M518.5 510.5h0M525.5 506.5h0M523.5 582.5h0M522.5 485.5h0M522.5 544.5h0M521.5 458.5h0M520.5 546.5h0M525.5 479.5h0M530.5 727.5h0M533.5 654.5h0M527.5 511.5h0M530.5 524.5h0M527.5 466.5h0M533.5 657.5h0M527.5 507.5h0M526.5 647.5h0M533.5 722.5h0M537.5 622.5h0M536.5 594.5h0M533.5 492.5h0M540.5 718.5h0M539.5 651.5h0M532.5 623.5h0M534.5 461.5h0M537.5 501.5h0M537.5 537.5h0M534.5 621.5h0M539.5 694.5h0M547.5 566.5h0M544.5 481.5h0M545.5 649.5h0M542.5 656.5h0M542.5 495.5h0M545.5 461.5h0M542.5 681.5h0M540.5 556.5h0M545.5 592.5h0M547.5 623.5h0M553.5 590.5h0M555.5 620.5h0M552.5 550.5h0M554.5 633.5h0M555.5 623.5h0M548.5 479.5h0M554.5 699.5h0M553.5 565.5h0M551.5 703.5h0M560.5 698.5h0M558.5 596.5h0M563.5 620.5h0M561.5 676.5h0M554.5 645.5h0M558.5 630.5h0M558.5 490.5h0M563.5 558.5h0M555.5 530.5h0M557.5 659.5h0M563.5 463.5h0M564.5 522.5h0M561.5 462.5h0M565.5 525.5h0M565.5 591.5h0M567.5 614.5h0M567.5 489.5h0M565.5 681.5h0M564.5 456.5h0M563.5 695.5h0M575.5 564.5h0M572.5 515.5h0M571.5 537.5h0M574.5 494.5h0M571.5 469.5h0M573.5 516.5h0M568.5 483.5h0M576.5 620.5h0M570.5 529.5h0M575.5 681.5h0M583.5 488.5h0M579.5 474.5h0M583.5 574.5h0M575.5 634.5h0M582.5 617.5h0M579.5 621.5h0M585.5 593.5h0M580.5 568.5h0M577.5 568.5h0M579.5 483.5h0M586.5 586.5h0M587.5 516.5h0M586.5 541.5h0M586.5 545.5h0M589.5 705.5h0M588.5 602.5h0M590.5 664.5h0M587.5 460.5h0M591.5 586.5h0M590.5 630.5h0M590.5 442.5h0M590.5 596.5h0M594.5 676.5h0M594.5 617.5h0M595.5 612.5h0M589.5 440.5h0M592.5 692.5h0M590.5 519.5h0M593.5 498.5h0M595.5 477.5h0M594.5 497.5h0M598.5 469.5h0M601.5 493.5h0M598.5 707.5h0M599.5 619.5h0M597.5 603.5h0M597.5 639.5h0M593.5 534.5h0M600.5 585.5h0M595.5 702.5h0M600.5 604.5h0M605.5 705.5h0M599.5 495.5h0M605.5 503.5h0M609.5 672.5h0M607.5 528.5h0M606.5 485.5h0M602.5 473.5h0M600.5 571.5h0M604.5 447.5h0M612.5 523.5h0M611.5 549.5h0M612.5 504.5h0M610.5 483.5h0M611.5 666.5h0M609.5 542.5h0M607.5 659.5h0M611.5 681.5h0M608.5 554.5h0M614.5 646.5h0M617.5 485.5h0M617.5 464.5h0M618.5 439.5h0M613.5 533.5h0M611.5 538.5h0M617.5 606.5h0M616.5 682.5h0M618.5 564.5h0M615.5 544.5h0M618.5 593.5h0M619.5 446.5h0M628.5 529.5h0M622.5 521.5h0M620.5 449.5h0M626.5 580.5h0M621.5 487.5h0M625.5 497.5h0M619.5 642.5h0M620.5 659.5h0M624.5 543.5h0M626.5 603.5h0M628.5 533.5h0M631.5 552.5h0M632.5 476.5h0M625.5 556.5h0M625.5 473.5h0M629.5 581.5h0M624.5 559.5h0M631.5 588.5h0M625.5 596.5h0M635.5 557.5h0M635.5 676.5h0M634.5 579.5h0M630.5 647.5h0M629.5 569.5h0M635.5 590.5h0M634.5 529.5h0M629.5 598.5h0M636.5 475.5h0M633.5 457.5h0M642.5 619.5h0M638.5 501.5h0M634.5 681.5h0M637.5 587.5h0M641.5 652.5h0M641.5 506.5h0M638.5 611.5h0M640.5 518.5h0M640.5 633.5h0M640.5 631.5h0M647.5 453.5h0M651.5 538.5h0M645.5 491.5h0M645.5 518.5h0M645.5 488.5h0M646.5 498.5h0M650.5 620.5h0M646.5 486.5h0M647.5 539.5h0M650.5 457.5h0M648.5 743.5h0M648.5 751.5h0M648.5 755.5h0M649.5 762.5h0M649.5 769.5h0M649.5 773.5h0M649.5 778.5h0M650.5 781.5h0M650.5 785.5h0M651.5 787.5h0M651.5 784.5h0M651.5 787.5h0M652.5 785.5h0M652.5 789.5h0M653.5 786.5h0M653.5 791.5h0M654.5 788.5h0M654.5 790.5h0M655.5 788.5h0M656.5 791.5h0M656.5 789.5h0M657.5 791.5h0M657.5 788.5h0M657.5 792.5h0M659.5 792.5h0M660.5 789.5h0M660.5 792.5h0M660.5 794.5h0M660.5 791.5h0M661.5 793.5h0M661.5 791.5h0M661.5 795.5h0M662.5 791.5h0M662.5 795.5h0M662.5 792.5h0M663.5 795.5h0M664.5 793.5h0M664.5 796.5h0M666.5 797.5h0M666.5 795.5h0M666.5 797.5h0M667.5 795.5h0M668.5 799.5h0M668.5 795.5h0M668.5 799.5h0M668.5 797.5h0M669.5 799.5h0M669.5 797.5h0M670.5 799.5h0M671.5 801.5h0M672.5 799.5h0M672.5 801.5h0M672.5 798.5h0M673.5 800.5h0M673.5 798.5h0M674.5 802.5h0M675.5 799.5h0M675.5 802.5h0M675.5 800.5h0M676.5 798.5h0M677.5 802.5h0M677.5 799.5h0M677.5 801.5h0M678.5 799.5h0M679.5 803.5h0M679.5 801.5h0M679.5 799.5h0M680.5 801.5h0M682.5 802.5h0M683.5 800.5h0M683.5 802.5h0M683.5 799.5h0M684.5 801.5h0M685.5 799.5h0M685.5 802.5h0M685.5 800.5h0M686.5 802.5h0M686.5 799.5h0M686.5 802.5h0M687.5 800.5h0M687.5 803.5h0M687.5 800.5h0M688.5 802.5h0M688.5 799.5h0M688.5 801.5h0M689.5 799.5h0M689.5 802.5h0M690.5 800.5h0M691.5 803.5h0M692.5 800.5h0M692.5 802.5h0M693.5 800.5h0M693.5 802.5h0M694.5 800.5h0M694.5 802.5h0M695.5 799.5h0M695.5 801.5h0M696.5 799.5h0M696.5 802.5h0M696.5 799.5h0M697.5 801.5h0M697.5 799.5h0M698.5 802.5h0M698.5 798.5h0M699.5 800.5h0M700.5 798.5h0M700.5 800.5h0M701.5 802.5h0M701.5 798.5h0M702.5 800.5h0M702.5 797.5h0M702.5 799.5h0M704.5 799.5h0M704.5 797.5h0M704.5 799.5h0M705.5 797.5h0M705.5 800.5h0M705.5 797.5h0M706.5 799.5h0M706.5 797.5h0M706.5 799.5h0M707.5 796.5h0M707.5 799.5h0M707.5 796.5h0M708.5 800.5h0M708.5 795.5h0M709.5 799.5h0M709.5 797.5h0M710.5 795.5h0M711.5 798.5h0M711.5 795.5h0M713.5 797.5h0M713.5 795.5h0M713.5 797.5h0M714.5 795.5h0M714.5 797.5h0M714.5 794.5h0M715.5 796.5h0M716.5 793.5h0M716.5 795.5h0M717.5 792.5h0M717.5 794.5h0M718.5 790.5h0M719.5 793.5h0M719.5 790.5h0M720.5 792.5h0M720.5 790.5h0M720.5 792.5h0M722.5 789.5h0M722.5 792.5h0M722.5 789.5h0M724.5 790.5h0M724.5 786.5h0M725.5 784.5h0M726.5 786.5h0M726.5 783.5h0M726.5 785.5h0M726.5 781.5h0M727.5 784.5h0M728.5 782.5h0M728.5 780.5h0M728.5 777.5h0M730.5 775.5h0M730.5 777.5h0M730.5 775.5h0M731.5 772.5h0M731.5 775.5h0M731.5 771.5h0M731.5 774.5h0M732.5 772.5h0M732.5 770.5h0M732.5 772.5h0M733.5 766.5h0M734.5 764.5h0M735.5 762.5h0M735.5 759.5h0M735.5 756.5h0M735.5 747.5h0M736.5 733.5h0M736.5 715.5h0M736.5 695.5h0M736.5 672.5h0M737.5 643.5h0M737.5 616.5h0M737.5 591.5h0M737.5 574.5h0M738.5 554.5h0M738.5 538.5h0M738.5 522.5h0M738.5 505.5h0M738.5 488.5h0M739.5 472.5h0M739.5 457.5h0M739.5 441.5h0M739.5 427.5h0M740.5 415.5h0M740.5 400.5h0M740.5 387.5h0M740.5 375.5h0M741.5 365.5h0M741.5 358.5h0M741.5 349.5h0M741.5 344.5h0M742.5 340.5h0M742.5 337.5h0M742.5 335.5h0M742.5 333.5h0M743.5 328.5h0M743.5 323.5h0M743.5 326.5h0M744.5 324.5h0M744.5 320.5h0M744.5 315.5h0M745.5 317.5h0M745.5 314.5h0M745.5 310.5h0M747.5 313.5h0M747.5 309.5h0M748.5 307.5h0M748.5 313.5h0M748.5 307.5h0M748.5 309.5h0M749.5 312.5h0M749.5 308.5h0M749.5 306.5h0M750.5 312.5h0M750.5 310.5h0M750.5 312.5h0M750.5 310.5h0M751.5 305.5h0M752.5 309.5h0M752.5 311.5h0M752.5 305.5h0M753.5 308.5h0M753.5 310.5h0M754.5 305.5h0M754.5 311.5h0M754.5 307.5h0M754.5 304.5h0M755.5 307.5h0M755.5 310.5h0M756.5 304.5h0M756.5 306.5h0M756.5 308.5h0M756.5 306.5h0M757.5 309.5h0M757.5 307.5h0M757.5 305.5h0M757.5 308.5h0M758.5 304.5h0M758.5 307.5h0M758.5 310.5h0M758.5 306.5h0M759.5 309.5h0M760.5 306.5h0M760.5 310.5h0M760.5 306.5h0M761.5 310.5h0M761.5 308.5h0M762.5 312.5h0M762.5 310.5h0M762.5 308.5h0M763.5 311.5h0M763.5 308.5h0M763.5 311.5h0M763.5 314.5h0M764.5 310.5h0M764.5 312.5h0M764.5 309.5h0M765.5 312.5h0M765.5 309.5h0M765.5 315.5h0M766.5 311.5h0M766.5 314.5h0M768.5 311.5h0M768.5 317.5h0M769.5 315.5h0M769.5 317.5h0M770.5 312.5h0M770.5 314.5h0M771.5 316.5h0M771.5 319.5h0M772.5 316.5h0M772.5 319.5h0M772.5 316.5h0M772.5 320.5h0M773.5 316.5h0M773.5 319.5h0M774.5 317.5h0M774.5 322.5h0M774.5 317.5h0M774.5 322.5h0M774.5 318.5h0M775.5 321.5h0M775.5 318.5h0M776.5 321.5h0M777.5 319.5h0M777.5 324.5h0M778.5 320.5h0M778.5 325.5h0M778.5 321.5h0M778.5 324.5h0M779.5 322.5h0M780.5 326.5h0M780.5 320.5h0M780.5 326.5h0M781.5 322.5h0M781.5 327.5h0M781.5 324.5h0M782.5 322.5h0M782.5 325.5h0M782.5 328.5h0M783.5 325.5h0M783.5 327.5h0M783.5 324.5h0M784.5 322.5h0M784.5 325.5h0M784.5 323.5h0M785.5 326.5h0M785.5 322.5h0M785.5 324.5h0M786.5 322.5h0M786.5 329.5h0M786.5 323.5h0M787.5 328.5h0M787.5 326.5h0M787.5 328.5h0M788.5 326.5h0M788.5 330.5h0M788.5 325.5h0M788.5 327.5h0M789.5 325.5h0M789.5 330.5h0M790.5 328.5h0M791.5 326.5h0M791.5 331.5h0M792.5 326.5h0M792.5 331.5h0M792.5 329.5h0M792.5 325.5h0M792.5 327.5h0M793.5 331.5h0M794.5 329.5h0M794.5 332.5h0M794.5 329.5h0M794.5 327.5h0M795.5 331.5h0M795.5 333.5h0M796.5 330.5h0M796.5 332.5h0M797.5 334.5h0M797.5 332.5h0M797.5 334.5h0M797.5 332.5h0M798.5 328.5h0M798.5 330.5h0M798.5 333.5h0M798.5 335.5h0M799.5 333.5h0M799.5 331.5h0M799.5 334.5h0M800.5 331.5h0M800.5 334.5h0M800.5 337.5h0M801.5 331.5h0M801.5 337.5h0M801.5 335.5h0M802.5 338.5h0M803.5 333.5h0M803.5 335.5h0M804.5 338.5h0M804.5 336.5h0M805.5 340.5h0M805.5 335.5h0M805.5 341.5h0M805.5 339.5h0M806.5 337.5h0M806.5 343.5h0M807.5 341.5h0M808.5 337.5h0M808.5 339.5h0M809.5 344.5h0M809.5 342.5h0M809.5 345.5h0M810.5 343.5h0M810.5 341.5h0M810.5 346.5h0M811.5 343.5h0M811.5 347.5h0M811.5 345.5h0M812.5 349.5h0M814.5 347.5h0M814.5 349.5h0M814.5 346.5h0M815.5 353.5h0M815.5 348.5h0M816.5 350.5h0M816.5 353.5h0M816.5 350.5h0M817.5 352.5h0M818.5 357.5h0M818.5 355.5h0M819.5 352.5h0M819.5 356.5h0M819.5 353.5h0M819.5 356.5h0M820.5 353.5h0M820.5 357.5h0M820.5 354.5h0M820.5 359.5h0M821.5 357.5h0M821.5 354.5h0M822.5 356.5h0M822.5 359.5h0M822.5 357.5h0M822.5 360.5h0M822.5 358.5h0M823.5 356.5h0M823.5 360.5h0M825.5 359.5h0M825.5 362.5h0M826.5 357.5h0M826.5 363.5h0M826.5 361.5h0M826.5 357.5h0M827.5 363.5h0M827.5 359.5h0M828.5 363.5h0M828.5 358.5h0M829.5 360.5h0M829.5 363.5h0M829.5 361.5h0M830.5 363.5h0M831.5 359.5h0M831.5 361.5h0M831.5 364.5h0M832.5 362.5h0M832.5 365.5h0M833.5 362.5h0M834.5 364.5h0M834.5 362.5h0M835.5 365.5h0M835.5 363.5h0M836.5 367.5h0M836.5 362.5h0M837.5 364.5h0M838.5 362.5h0M838.5 367.5h0M838.5 362.5h0M838.5 364.5h0M839.5 368.5h0M840.5 362.5h0M840.5 364.5h0M841.5 366.5h0M841.5 363.5h0M841.5 370.5h0M842.5 363.5h0M842.5 365.5h0M843.5 367.5h0M843.5 365.5h0M844.5 367.5h0M844.5 364.5h0M845.5 366.5h0M845.5 369.5h0M845.5 367.5h0M846.5 364.5h0M846.5 370.5h0M846.5 364.5h0M846.5 366.5h0M846.5 368.5h0M847.5 366.5h0M847.5 369.5h0M847.5 366.5h0M848.5 370.5h0M848.5 365.5h0M848.5 367.5h0M849.5 371.5h0M849.5 369.5h0M850.5 372.5h0M850.5 369.5h0M851.5 371.5h0M851.5 368.5h0M851.5 373.5h0M851.5 369.5h0M852.5 374.5h0M852.5 371.5h0M853.5 369.5h0M854.5 375.5h0M854.5 370.5h0M854.5 373.5h0M855.5 375.5h0M855.5 378.5h0M856.5 375.5h0M856.5 380.5h0M856.5 375.5h0M856.5 379.5h0M857.5 374.5h0M857.5 376.5h0M857.5 380.5h0M857.5 376.5h0M858.5 380.5h0M858.5 383.5h0M859.5 380.5h0M859.5 385.5h0M860.5 389.5h0M860.5 391.5h0M861.5 394.5h0M861.5 398.5h0M862.5 400.5h0M862.5 405.5h0M863.5 403.5h0M863.5 408.5h0M863.5 410.5h0M863.5 408.5h0M864.5 412.5h0M864.5 410.5h0M864.5 414.5h0M864.5 412.5h0M864.5 414.5h0M865.5 417.5h0M865.5 419.5h0M866.5 423.5h0M866.5 421.5h0M866.5 423.5h0M867.5 426.5h0M867.5 429.5h0M868.5 432.5h0M868.5 434.5h0M869.5 440.5h0M869.5 444.5h0M870.5 447.5h0M870.5 450.5h0M870.5 457.5h0M871.5 459.5h0M871.5 466.5h0M871.5 472.5h0M871.5 485.5h0M872.5 497.5h0M872.5 514.5h0M872.5 532.5h0M872.5 547.5h0M873.5 562.5h0M873.5 573.5h0M873.5 589.5h0M873.5 601.5h0M874.5 616.5h0M874.5 632.5h0M874.5 646.5h0M874.5 659.5h0M875.5 672.5h0M875.5 685.5h0M875.5 699.5h0M875.5 710.5h0M876.5 721.5h0M876.5 730.5h0M876.5 737.5h0M876.5 743.5h0M876.5 747.5h0M877.5 751.5h0M877.5 756.5h0M877.5 758.5h0M877.5 760.5h0M878.5 763.5h0M878.5 767.5h0M879.5 771.5h0M879.5 769.5h0M880.5 772.5h0M880.5 774.5h0M881.5 778.5h0M881.5 776.5h0M881.5 778.5h0M882.5 780.5h0M882.5 777.5h0M883.5 780.5h0M883.5 777.5h0M883.5 780.5h0M884.5 782.5h0M884.5 779.5h0M886.5 782.5h0M887.5 779.5h0M887.5 781.5h0M888.5 779.5h0M888.5 782.5h0M888.5 779.5h0M890.5 781.5h0M890.5 779.5h0M890.5 777.5h0M892.5 775.5h0M892.5 779.5h0M892.5 777.5h0M893.5 774.5h0M893.5 778.5h0M894.5 776.5h0M895.5 774.5h0M895.5 776.5h0M897.5 776.5h0M897.5 774.5h0M898.5 772.5h0M899.5 770.5h0M899.5 774.5h0M900.5 769.5h0M900.5 772.5h0M900.5 769.5h0M902.5 767.5h0M902.5 770.5h0M902.5 768.5h0M903.5 766.5h0M903.5 768.5h0M903.5 766.5h0M904.5 764.5h0M904.5 767.5h0M904.5 764.5h0M906.5 765.5h0M906.5 761.5h0M906.5 759.5h0M907.5 763.5h0M907.5 759.5h0M907.5 761.5h0M908.5 758.5h0M909.5 756.5h0M910.5 754.5h0M911.5 751.5h0M911.5 753.5h0M911.5 748.5h0M912.5 750.5h0M912.5 746.5h0M912.5 744.5h0M912.5 740.5h0M913.5 736.5h0M913.5 725.5h0M913.5 718.5h0M913.5 708.5h0M914.5 696.5h0M914.5 684.5h0M914.5 671.5h0M914.5 660.5h0M915.5 647.5h0M915.5 634.5h0M915.5 617.5h0M915.5 602.5h0M916.5 589.5h0M916.5 577.5h0M916.5 563.5h0M916.5 551.5h0M917.5 539.5h0M917.5 530.5h0M917.5 517.5h0M917.5 503.5h0M918.5 491.5h0M918.5 476.5h0M918.5 465.5h0M918.5 455.5h0M918.5 442.5h0M919.5 431.5h0M919.5 420.5h0M919.5 413.5h0M919.5 407.5h0M920.5 401.5h0M920.5 396.5h0M920.5 391.5h0M920.5 387.5h0M921.5 384.5h0M921.5 381.5h0M921.5 376.5h0M922.5 372.5h0M922.5 370.5h0M923.5 368.5h0M923.5 363.5h0M924.5 361.5h0M924.5 364.5h0M924.5 360.5h0M925.5 357.5h0M926.5 354.5h0M927.5 352.5h0M927.5 354.5h0M927.5 352.5h0M928.5 350.5h0M928.5 353.5h0M928.5 350.5h0M929.5 354.5h0M929.5 349.5h0M929.5 353.5h0M929.5 351.5h0M930.5 349.5h0M930.5 352.5h0M930.5 349.5h0M930.5 351.5h0M931.5 348.5h0M932.5 351.5h0M932.5 348.5h0M932.5 351.5h0M933.5 348.5h0M934.5 346.5h0M934.5 348.5h0M935.5 346.5h0M935.5 349.5h0M936.5 347.5h0M936.5 349.5h0M937.5 347.5h0M937.5 349.5h0M938.5 351.5h0M938.5 349.5h0M939.5 351.5h0M940.5 348.5h0M940.5 352.5h0M940.5 349.5h0M940.5 353.5h0M941.5 351.5h0M941.5 354.5h0M941.5 351.5h0M942.5 353.5h0M943.5 355.5h0M944.5 358.5h0M944.5 356.5h0M944.5 359.5h0M945.5 357.5h0M945.5 360.5h0M946.5 363.5h0M946.5 360.5h0M946.5 364.5h0M946.5 362.5h0M947.5 367.5h0M947.5 364.5h0M948.5 368.5h0M948.5 366.5h0M948.5 369.5h0M948.5 371.5h0M949.5 374.5h0M950.5 378.5h0M950.5 380.5h0M951.5 382.5h0M952.5 384.5h0M952.5 387.5h0M954.5 387.5h0M954.5 391.5h0M955.5 394.5h0M956.5 397.5h0M957.5 399.5h0M957.5 396.5h0M957.5 400.5h0M958.5 398.5h0M958.5 402.5h0M959.5 400.5h0M959.5 404.5h0M960.5 402.5h0M960.5 407.5h0M960.5 405.5h0M961.5 408.5h0M961.5 410.5h0M962.5 412.5h0M962.5 415.5h0M963.5 418.5h0M963.5 420.5h0M964.5 424.5h0M964.5 426.5h0M964.5 424.5h0M965.5 428.5h0M965.5 434.5h0M966.5 439.5h0M966.5 442.5h0M967.5 446.5h0M967.5 448.5h0M967.5 452.5h0M968.5 458.5h0M968.5 462.5h0M968.5 471.5h0M969.5 474.5h0M969.5 482.5h0M969.5 486.5h0M969.5 495.5h0M970.5 499.5h0M970.5 508.5h0M970.5 515.5h0M970.5 521.5h0M971.5 527.5h0M971.5 537.5h0M971.5 546.5h0M971.5 553.5h0M972.5 561.5h0M972.5 569.5h0M972.5 576.5h0M972.5 588.5h0M972.5 596.5h0M973.5 604.5h0M973.5 613.5h0M973.5 618.5h0M973.5 626.5h0M974.5 631.5h0M974.5 638.5h0M974.5 640.5h0M974.5 645.5h0M975.5 648.5h0M975.5 655.5h0M975.5 657.5h0M975.5 663.5h0M976.5 670.5h0M976.5 673.5h0M976.5 677.5h0M977.5 681.5h0M977.5 685.5h0M977.5 687.5h0M978.5 692.5h0M978.5 696.5h0M978.5 698.5h0M978.5 705.5h0M979.5 710.5h0M979.5 713.5h0M979.5 716.5h0M979.5 719.5h0M980.5 721.5h0M980.5 729.5h0M980.5 732.5h0M980.5 735.5h0M981.5 740.5h0M981.5 746.5h0M981.5 749.5h0M981.5 754.5h0M982.5 757.5h0M982.5 762.5h0M982.5 760.5h0M982.5 763.5h0M983.5 761.5h0M983.5 764.5h0M984.5 767.5h0M985.5 769.5h0M985.5 766.5h0M985.5 768.5h0M986.5 771.5h0M986.5 769.5h0M986.5 772.5h0M987.5 769.5h0M988.5 771.5h0M988.5 769.5h0M990.5 771.5h0M990.5 769.5h0M991.5 767.5h0M991.5 769.5h0M991.5 766.5h0M992.5 768.5h0M992.5 765.5h0M993.5 762.5h0M994.5 760.5h0M994.5 758.5h0M995.5 756.5h0M995.5 754.5h0M996.5 751.5h0M996.5 745.5h0M997.5 738.5h0M997.5 734.5h0M997.5 728.5h0M997.5 713.5h0M998.5 700.5h0M998.5 684.5h0M998.5 667.5h0M998.5 647.5h0M999.5 630.5h0M999.5 607.5h0M999.5 591.5h0M999.5 573.5h0M1000.5 558.5h0M1000.5 542.5h0M1000.5 530.5h0M1000.5 514.5h0M1001.5 496.5h0M1001.5 483.5h0M1001.5 468.5h0M1001.5 454.5h0M1002.5 437.5h0M1002.5 426.5h0M1002.5 416.5h0M1002.5 410.5h0M1002.5 404.5h0M1003.5 396.5h0M1003.5 394.5h0M1003.5 389.5h0M1004.5 387.5h0M1004.5 382.5h0M1004.5 380.5h0M1005.5 374.5h0M1005.5 371.5h0M1005.5 369.5h0M1006.5 371.5h0M1006.5 368.5h0M1006.5 364.5h0M1007.5 362.5h0M1008.5 360.5h0M1008.5 357.5h0M1009.5 359.5h0M1009.5 357.5h0M1010.5 353.5h0M1010.5 356.5h0M1010.5 354.5h0M1011.5 351.5h0M1012.5 349.5h0M1013.5 351.5h0M1014.5 346.5h0M1014.5 350.5h0M1014.5 347.5h0M1016.5 344.5h0M1016.5 346.5h0M1018.5 347.5h0M1018.5 344.5h0M1019.5 347.5h0M1019.5 344.5h0M1019.5 348.5h0M1020.5 346.5h0M1020.5 349.5h0M1020.5 347.5h0M1022.5 346.5h0M1022.5 348.5h0M1023.5 350.5h0M1023.5 348.5h0M1023.5 352.5h0M1025.5 353.5h0M1025.5 351.5h0M1026.5 355.5h0M1026.5 353.5h0M1026.5 357.5h0M1028.5 356.5h0M1028.5 360.5h0M1028.5 357.5h0M1028.5 359.5h0M1029.5 363.5h0M1030.5 365.5h0M1030.5 363.5h0M1030.5 365.5h0M1031.5 367.5h0M1031.5 369.5h0M1032.5 373.5h0M1032.5 376.5h0M1033.5 379.5h0M1034.5 383.5h0M1034.5 381.5h0M1034.5 383.5h0M1035.5 388.5h0M1035.5 386.5h0M1035.5 388.5h0M1035.5 390.5h0M1036.5 393.5h0M1037.5 397.5h0M1038.5 399.5h0M1038.5 401.5h0M1038.5 405.5h0M1039.5 410.5h0M1039.5 408.5h0M1039.5 413.5h0M1040.5 415.5h0M1040.5 417.5h0M1040.5 419.5h0M1041.5 422.5h0M1041.5 426.5h0M1041.5 429.5h0M1042.5 435.5h0M1042.5 441.5h0M1042.5 443.5h0M1043.5 454.5h0M1043.5 460.5h0M1043.5 470.5h0M1043.5 484.5h0M1044.5 497.5h0M1044.5 509.5h0M1044.5 520.5h0M1044.5 535.5h0M1044.5 544.5h0M1045.5 554.5h0M1045.5 563.5h0M1045.5 573.5h0M1045.5 584.5h0M1046.5 590.5h0M1046.5 600.5h0M1046.5 608.5h0M1046.5 618.5h0M1047.5 627.5h0M1047.5 633.5h0M1047.5 643.5h0M1047.5 647.5h0M1048.5 655.5h0M1048.5 664.5h0M1048.5 669.5h0M1048.5 679.5h0M1049.5 687.5h0M1049.5 693.5h0M1049.5 701.5h0M1049.5 709.5h0M1050.5 719.5h0M1050.5 725.5h0M1050.5 727.5h0M1050.5 734.5h0M1050.5 741.5h0M1051.5 744.5h0M1051.5 747.5h0M1052.5 750.5h0M1052.5 752.5h0M1052.5 756.5h0M1053.5 760.5h0M1053.5 762.5h0M1054.5 764.5h0M1054.5 766.5h0M1054.5 764.5h0M1055.5 766.5h0M1055.5 768.5h0M1056.5 771.5h0M1056.5 767.5h0M1056.5 771.5h0M1057.5 773.5h0M1058.5 771.5h0M1058.5 773.5h0M1058.5 771.5h0M1059.5 775.5h0M1059.5 773.5h0M1060.5 777.5h0M1060.5 774.5h0M1061.5 776.5h0M1061.5 774.5h0M1062.5 777.5h0M1062.5 775.5h0M1062.5 777.5h0M1063.5 775.5h0M1065.5 777.5h0M1065.5 775.5h0M1066.5 777.5h0M1066.5 774.5h0M1066.5 776.5h0M1067.5 778.5h0M1067.5 773.5h0M1067.5 776.5h0M1068.5 774.5h0M1068.5 776.5h0M1068.5 773.5h0M1069.5 776.5h0M1069.5 772.5h0M1069.5 774.5h0M1070.5 772.5h0M1070.5 774.5h0M1070.5 771.5h0M1071.5 773.5h0M1071.5 770.5h0M1072.5 774.5h0M1072.5 772.5h0M1073.5 768.5h0M1073.5 772.5h0M1073.5 769.5h0M1074.5 771.5h0M1074.5 767.5h0M1074.5 770.5h0M1075.5 768.5h0M1076.5 765.5h0M1076.5 767.5h0M1077.5 765.5h0M1077.5 767.5h0M1077.5 763.5h0M1078.5 765.5h0M1078.5 762.5h0M1079.5 764.5h0M1079.5 762.5h0M1079.5 764.5h0M1080.5 762.5h0M1080.5 759.5h0M1080.5 761.5h0M1082.5 760.5h0M1082.5 757.5h0M1082.5 759.5h0M1083.5 756.5h0M1083.5 754.5h0M1083.5 756.5h0M1084.5 754.5h0M1084.5 757.5h0M1084.5 753.5h0M1085.5 755.5h0M1086.5 751.5h0M1087.5 748.5h0M1088.5 751.5h0M1088.5 748.5h0M1089.5 745.5h0M1090.5 747.5h0M1090.5 744.5h0M1090.5 746.5h0M1090.5 744.5h0M1091.5 742.5h0M1091.5 740.5h0M1092.5 737.5h0M1092.5 739.5h0M1093.5 735.5h0M1093.5 732.5h0M1093.5 728.5h0M1093.5 724.5h0M1094.5 712.5h0M1094.5 700.5h0M1094.5 683.5h0M1094.5 666.5h0M1095.5 646.5h0M1095.5 630.5h0M1095.5 610.5h0M1095.5 590.5h0M1096.5 575.5h0M1096.5 563.5h0M1096.5 546.5h0M1096.5 535.5h0M1097.5 523.5h0M1097.5 510.5h0M1097.5 494.5h0M1097.5 486.5h0M1098.5 470.5h0M1098.5 461.5h0M1098.5 448.5h0M1098.5 439.5h0M1098.5 427.5h0M1099.5 420.5h0M1099.5 413.5h0M1099.5 408.5h0M1099.5 404.5h0M1100.5 402.5h0M1100.5 395.5h0M1101.5 393.5h0M1101.5 388.5h0M1101.5 386.5h0M1102.5 384.5h0M1102.5 380.5h0M1102.5 377.5h0M1103.5 375.5h0M1103.5 373.5h0M1104.5 369.5h0M1104.5 372.5h0M1104.5 367.5h0M1105.5 365.5h0M1105.5 367.5h0M1105.5 365.5h0M1106.5 363.5h0M1106.5 361.5h0M1107.5 363.5h0M1107.5 359.5h0M1108.5 362.5h0M1108.5 356.5h0M1109.5 359.5h0M1109.5 356.5h0M1109.5 359.5h0M1109.5 355.5h0M1111.5 353.5h0M1112.5 356.5h0M1112.5 352.5h0M1112.5 354.5h0M1113.5 356.5h0M1113.5 353.5h0M1114.5 356.5h0M1114.5 352.5h0M1114.5 355.5h0M1115.5 353.5h0M1116.5 355.5h0M1117.5 353.5h0M1117.5 355.5h0M1119.5 356.5h0M1119.5 354.5h0M1120.5 358.5h0M1120.5 355.5h0M1120.5 359.5h0M1121.5 356.5h0M1122.5 359.5h0M1122.5 356.5h0M1122.5 360.5h0M1122.5 358.5h0M1123.5 360.5h0M1123.5 362.5h0M1123.5 360.5h0M1125.5 360.5h0M1125.5 363.5h0M1125.5 361.5h0M1126.5 363.5h0M1127.5 367.5h0M1127.5 363.5h0M1127.5 366.5h0M1128.5 369.5h0M1128.5 372.5h0M1129.5 375.5h0M1129.5 373.5h0M1130.5 376.5h0M1130.5 379.5h0M1131.5 382.5h0M1131.5 384.5h0M1132.5 386.5h0M1132.5 392.5h0M1133.5 394.5h0M1133.5 398.5h0M1133.5 405.5h0M1134.5 409.5h0M1134.5 412.5h0M1134.5 420.5h0M1134.5 426.5h0M1135.5 430.5h0M1135.5 435.5h0M1135.5 445.5h0M1135.5 455.5h0M1136.5 462.5h0M1136.5 475.5h0M1136.5 489.5h0M1136.5 498.5h0M1137.5 511.5h0M1137.5 523.5h0M1137.5 539.5h0M1137.5 548.5h0M1138.5 558.5h0M1138.5 570.5h0M1138.5 582.5h0M1138.5 596.5h0M1139.5 605.5h0M1139.5 618.5h0M1139.5 629.5h0M1139.5 643.5h0M1140.5 652.5h0M1140.5 665.5h0M1140.5 676.5h0M1140.5 687.5h0M1140.5 696.5h0M1141.5 702.5h0M1141.5 707.5h0M1141.5 716.5h0M1141.5 719.5h0M1142.5 726.5h0M1142.5 728.5h0M1142.5 732.5h0M1142.5 738.5h0M1143.5 744.5h0M1143.5 747.5h0M1143.5 750.5h0M1143.5 752.5h0M1144.5 755.5h0M1144.5 759.5h0M1144.5 757.5h0M1145.5 760.5h0M1145.5 762.5h0M1146.5 760.5h0M1146.5 764.5h0M1146.5 762.5h0M1146.5 764.5h0M1147.5 768.5h0M1148.5 766.5h0M1148.5 769.5h0M1148.5 767.5h0M1149.5 771.5h0M1149.5 767.5h0M1150.5 770.5h0M1151.5 773.5h0M1151.5 771.5h0M1152.5 769.5h0M1152.5 772.5h0M1152.5 770.5h0M1153.5 772.5h0M1153.5 768.5h0M1153.5 772.5h0M1154.5 769.5h0M1154.5 771.5h0M1155.5 768.5h0M1156.5 771.5h0M1156.5 769.5h0M1156.5 771.5h0M1156.5 768.5h0M1158.5 769.5h0M1158.5 767.5h0M1158.5 771.5h0M1158.5 766.5h0M1159.5 769.5h0M1159.5 766.5h0M1160.5 768.5h0M1161.5 765.5h0M1162.5 763.5h0M1163.5 758.5h0M1163.5 761.5h0M1163.5 758.5h0M1164.5 756.5h0M1164.5 753.5h0M1165.5 751.5h0M1165.5 749.5h0M1165.5 745.5h0M1166.5 739.5h0M1166.5 736.5h0M1166.5 732.5h0M1166.5 728.5h0M1167.5 721.5h0M1167.5 708.5h0M1167.5 695.5h0M1167.5 681.5h0M1168.5 665.5h0M1168.5 646.5h0M1168.5 630.5h0M1168.5 609.5h0M1169.5 590.5h0M1169.5 572.5h0M1169.5 553.5h0M1169.5 535.5h0M1170.5 519.5h0M1170.5 500.5h0M1170.5 477.5h0M1170.5 456.5h0M1170.5 437.5h0M1171.5 419.5h0M1171.5 405.5h0M1171.5 400.5h0M1171.5 393.5h0M1172.5 391.5h0M1172.5 389.5h0M1172.5 387.5h0M1173.5 385.5h0M1173.5 382.5h0M1173.5 378.5h0M1174.5 374.5h0M1175.5 371.5h0M1175.5 367.5h0M1175.5 369.5h0M1176.5 366.5h0M1176.5 368.5h0M1176.5 366.5h0M1177.5 364.5h0M1177.5 362.5h0M1177.5 365.5h0M1178.5 360.5h0M1178.5 364.5h0M1178.5 360.5h0M1180.5 362.5h0M1180.5 359.5h0M1181.5 361.5h0M1182.5 359.5h0M1182.5 357.5h0M1182.5 360.5h0M1183.5 357.5h0M1184.5 355.5h0M1184.5 357.5h0M1185.5 355.5h0M1185.5 353.5h0M1185.5 355.5h0M1186.5 351.5h0M1186.5 349.5h0M1186.5 351.5h0M1187.5 348.5h0M1187.5 350.5h0M1187.5 348.5h0M1188.5 345.5h0M1188.5 347.5h0M1188.5 344.5h0M1189.5 346.5h0M1189.5 344.5h0M1190.5 348.5h0M1191.5 345.5h0M1191.5 348.5h0M1192.5 350.5h0M1192.5 347.5h0M1193.5 350.5h0M1193.5 352.5h0M1194.5 350.5h0M1194.5 353.5h0M1194.5 356.5h0M1195.5 358.5h0M1195.5 356.5h0M1196.5 359.5h0M1196.5 362.5h0M1197.5 360.5h0M1197.5 362.5h0M1198.5 364.5h0M1199.5 368.5h0M1200.5 371.5h0M1200.5 369.5h0M1201.5 373.5h0M1201.5 371.5h0M1202.5 374.5h0M1202.5 377.5h0M1202.5 374.5h0M1202.5 379.5h0M1203.5 381.5h0M1203.5 379.5h0M1204.5 383.5h0M1204.5 385.5h0M1204.5 388.5h0M1204.5 391.5h0M1205.5 393.5h0M1205.5 395.5h0M1205.5 400.5h0M1206.5 406.5h0M1207.5 412.5h0M1207.5 410.5h0M1207.5 415.5h0M1208.5 417.5h0M1208.5 419.5h0M1208.5 422.5h0M1209.5 420.5h0M1209.5 423.5h0M1209.5 425.5h0M1210.5 427.5h0M1210.5 431.5h0M1210.5 434.5h0M1211.5 436.5h0M1211.5 445.5h0M1211.5 451.5h0M1212.5 463.5h0M1212.5 476.5h0M1212.5 493.5h0M1212.5 508.5h0M1212.5 520.5h0M1213.5 536.5h0M1213.5 545.5h0M1213.5 558.5h0M1213.5 570.5h0M1214.5 579.5h0M1214.5 590.5h0M1214.5 600.5h0M1214.5 612.5h0M1215.5 620.5h0M1215.5 630.5h0M1215.5 642.5h0M1215.5 651.5h0M1216.5 661.5h0M1216.5 671.5h0M1216.5 678.5h0M1216.5 687.5h0M1217.5 695.5h0M1217.5 700.5h0M1217.5 708.5h0M1217.5 712.5h0M1218.5 720.5h0M1218.5 724.5h0M1218.5 727.5h0M1218.5 732.5h0M1218.5 735.5h0M1219.5 738.5h0M1219.5 744.5h0M1219.5 749.5h0M1219.5 753.5h0M1220.5 758.5h0M1221.5 755.5h0M1221.5 758.5h0M1222.5 755.5h0M1222.5 759.5h0M1222.5 757.5h0M1223.5 759.5h0M1224.5 757.5h0M1224.5 759.5h0M1224.5 761.5h0M1225.5 758.5h0M1225.5 760.5h0M1226.5 757.5h0M1226.5 759.5h0M1227.5 761.5h0M1227.5 759.5h0M1228.5 757.5h0M1229.5 759.5h0M1229.5 756.5h0M1229.5 758.5h0M1230.5 755.5h0M1230.5 752.5h0M1230.5 755.5h0M1230.5 753.5h0M1231.5 750.5h0M1232.5 748.5h0M1232.5 746.5h0M1232.5 744.5h0M1233.5 746.5h0M1234.5 742.5h0M1234.5 746.5h0M1234.5 742.5h0M1235.5 745.5h0M1236.5 742.5h0M1237.5 745.5h0M1237.5 742.5h0M1237.5 744.5h0M1238.5 742.5h0M1238.5 744.5h0M1239.5 741.5h0M1240.5 738.5h0M1240.5 736.5h0M1240.5 730.5h0M1241.5 722.5h0M1241.5 719.5h0M1241.5 712.5h0M1242.5 709.5h0M1242.5 703.5h0M1242.5 698.5h0M1242.5 691.5h0M1242.5 682.5h0M1243.5 674.5h0M1243.5 664.5h0M1243.5 650.5h0M1243.5 638.5h0M1244.5 625.5h0M1244.5 613.5h0M1244.5 602.5h0M1244.5 585.5h0M1245.5 573.5h0M1245.5 562.5h0M1245.5 552.5h0M1245.5 539.5h0M1246.5 530.5h0M1246.5 518.5h0M1246.5 505.5h0M1246.5 493.5h0M1247.5 482.5h0M1247.5 472.5h0M1247.5 460.5h0M1247.5 450.5h0M1248.5 439.5h0M1248.5 427.5h0M1248.5 422.5h0M1248.5 411.5h0M1248.5 405.5h0M1249.5 401.5h0M1249.5 395.5h0M1249.5 393.5h0M1250.5 389.5h0M1250.5 386.5h0M1250.5 382.5h0M1251.5 380.5h0M1251.5 377.5h0M1252.5 373.5h0M1252.5 368.5h0M1253.5 366.5h0M1254.5 363.5h0M1254.5 365.5h0M1254.5 360.5h0M1254.5 362.5h0M1255.5 359.5h0M1256.5 357.5h0M1256.5 359.5h0M1257.5 355.5h0M1257.5 358.5h0M1257.5 353.5h0M1258.5 357.5h0M1258.5 355.5h0M1259.5 350.5h0M1259.5 353.5h0M1260.5 351.5h0M1260.5 349.5h0M1260.5 351.5h0M1261.5 347.5h0M1262.5 351.5h0M1262.5 348.5h0M1263.5 346.5h0M1263.5 348.5h0M1264.5 350.5h0M1265.5 347.5h0M1265.5 350.5h0M1266.5 347.5h0M1266.5 349.5h0M1266.5 351.5h0M1268.5 350.5h0M1268.5 352.5h0M1268.5 355.5h0M1269.5 352.5h0M1269.5 354.5h0M1270.5 358.5h0M1271.5 361.5h0M1272.5 363.5h0M1273.5 367.5h0M1273.5 365.5h0M1274.5 368.5h0M1274.5 370.5h0M1274.5 368.5h0M1274.5 371.5h0M1275.5 369.5h0M1275.5 371.5h0M1275.5 373.5h0M1276.5 377.5h0M1276.5 380.5h0M1277.5 385.5h0M1278.5 382.5h0M1278.5 385.5h0M1278.5 389.5h0M1279.5 387.5h0M1279.5 389.5h0M1279.5 392.5h0M1279.5 394.5h0M1280.5 396.5h0M1280.5 399.5h0M1281.5 402.5h0M1281.5 404.5h0M1281.5 411.5h0M1281.5 413.5h0M1282.5 415.5h0M1282.5 421.5h0M1282.5 424.5h0M1282.5 429.5h0M1283.5 432.5h0M1283.5 440.5h0M1283.5 444.5h0M1283.5 451.5h0M1284.5 459.5h0M1284.5 468.5h0M1284.5 480.5h0M1284.5 492.5h0M1284.5 503.5h0M1285.5 514.5h0M1285.5 527.5h0M1285.5 535.5h0M1285.5 545.5h0M1286.5 554.5h0M1286.5 568.5h0M1286.5 578.5h0M1286.5 586.5h0M1287.5 596.5h0M1287.5 607.5h0M1287.5 619.5h0M1287.5 629.5h0M1288.5 640.5h0M1288.5 648.5h0M1288.5 661.5h0M1288.5 667.5h0M1289.5 681.5h0M1289.5 688.5h0M1289.5 694.5h0M1289.5 701.5h0M1290.5 711.5h0M1290.5 713.5h0M1290.5 719.5h0M1290.5 722.5h0M1290.5 728.5h0M1291.5 731.5h0M1291.5 733.5h0M1291.5 736.5h0M1292.5 740.5h0M1292.5 746.5h0M1292.5 748.5h0M1293.5 751.5h0M1293.5 755.5h0M1294.5 760.5h0M1295.5 757.5h0M1295.5 759.5h0M1296.5 762.5h0M1296.5 764.5h0M1297.5 766.5h0M1298.5 768.5h0M1300.5 770.5h0M1300.5 768.5h0M1301.5 771.5h0M1302.5 768.5h0M1302.5 770.5h0M1302.5 772.5h0M1302.5 770.5h0M1303.5 773.5h0M1303.5 769.5h0M1304.5 772.5h0M1305.5 770.5h0M1305.5 768.5h0M1306.5 771.5h0M1306.5 769.5h0M1307.5 767.5h0M1308.5 769.5h0M1308.5 765.5h0M1309.5 769.5h0M1309.5 766.5h0M1309.5 764.5h0M1310.5 767.5h0M1310.5 765.5h0M1310.5 767.5h0M1310.5 765.5h0M1311.5 763.5h0M1311.5 765.5h0M1312.5 763.5h0M1312.5 759.5h0M1313.5 763.5h0M1313.5 759.5h0M1313.5 757.5h0M1314.5 754.5h0M1314.5 750.5h0M1315.5 746.5h0M1315.5 739.5h0M1315.5 733.5h0M1316.5 720.5h0M1316.5 704.5h0M1316.5 689.5h0M1316.5 669.5h0M1317.5 646.5h0M1317.5 627.5h0M1317.5 608.5h0M1317.5 584.5h0M1318.5 566.5h0M1318.5 552.5h0M1318.5 540.5h0M1318.5 526.5h0M1319.5 513.5h0M1319.5 498.5h0M1319.5 483.5h0M1319.5 471.5h0M1320.5 459.5h0M1320.5 446.5h0M1320.5 435.5h0M1320.5 427.5h0M1320.5 416.5h0M1321.5 410.5h0M1321.5 406.5h0M1321.5 398.5h0M1322.5 396.5h0M1322.5 389.5h0M1322.5 386.5h0M1323.5 381.5h0M1323.5 377.5h0M1324.5 375.5h0M1324.5 373.5h0M1325.5 370.5h0M1325.5 368.5h0M1325.5 370.5h0M1325.5 368.5h0M1326.5 364.5h0M1326.5 360.5h0M1327.5 358.5h0M1328.5 360.5h0M1328.5 357.5h0M1328.5 354.5h0M1329.5 352.5h0M1330.5 354.5h0M1330.5 351.5h0M1331.5 349.5h0M1333.5 347.5h0M1333.5 349.5h0M1334.5 346.5h0M1334.5 349.5h0M1335.5 346.5h0M1336.5 348.5h0M1336.5 344.5h0M1336.5 346.5h0M1338.5 345.5h0M1338.5 347.5h0M1338.5 345.5h0M1339.5 348.5h0M1340.5 346.5h0M1341.5 349.5h0M1342.5 347.5h0M1342.5 350.5h0M1344.5 350.5h0M1344.5 352.5h0M1345.5 354.5h0M1346.5 356.5h0M1348.5 357.5h0M1349.5 361.5h0M1350.5 364.5h0M1350.5 361.5h0M1351.5 364.5h0M1351.5 366.5h0M1351.5 364.5h0M1352.5 366.5h0M1352.5 368.5h0M1353.5 370.5h0M1355.5 373.5h0M1355.5 375.5h0M1356.5 378.5h0M1356.5 380.5h0M1357.5 378.5h0M1357.5 380.5h0M1357.5 382.5h0M1358.5 380.5h0M1358.5 384.5h0M1359.5 382.5h0M1359.5 384.5h0M1360.5 388.5h0M1360.5 386.5h0M1361.5 390.5h0M1361.5 388.5h0M1362.5 391.5h0M1362.5 389.5h0M1362.5 391.5h0M1363.5 394.5h0M1363.5 397.5h0M1364.5 395.5h0M1364.5 397.5h0M1365.5 400.5h0M1367.5 401.5h0M1367.5 403.5h0M1368.5 405.5h0M1368.5 407.5h0M1368.5 405.5h0M1368.5 409.5h0M1369.5 412.5h0M1369.5 415.5h0M1370.5 413.5h0M1370.5 415.5h0M1370.5 420.5h0M1371.5 418.5h0M1371.5 421.5h0M1371.5 425.5h0M1371.5 427.5h0M1372.5 431.5h0M1372.5 435.5h0M1373.5 437.5h0M1373.5 442.5h0M1373.5 449.5h0M1374.5 455.5h0M1374.5 463.5h0M1374.5 469.5h0M1374.5 477.5h0M1374.5 488.5h0M1375.5 495.5h0M1375.5 505.5h0M1375.5 515.5h0M1375.5 527.5h0M1376.5 539.5h0M1376.5 546.5h0M1376.5 558.5h0M1376.5 567.5h0M1377.5 577.5h0M1377.5 589.5h0M1377.5 598.5h0M1377.5 611.5h0M1378.5 619.5h0M1378.5 631.5h0M1378.5 646.5h0M1378.5 656.5h0M1379.5 668.5h0M1379.5 676.5h0M1379.5 688.5h0M1379.5 696.5h0M1380.5 704.5h0M1380.5 716.5h0M1380.5 721.5h0M1380.5 726.5h0M1380.5 734.5h0M1381.5 737.5h0M1381.5 739.5h0M1381.5 744.5h0M1381.5 747.5h0M1382.5 750.5h0M1382.5 754.5h0M1382.5 756.5h0M1383.5 761.5h0M1383.5 763.5h0M1384.5 765.5h0M1384.5 769.5h0M1385.5 771.5h0M1385.5 769.5h0M1386.5 771.5h0M1386.5 774.5h0M1387.5 771.5h0M1387.5 775.5h0M1387.5 772.5h0M1388.5 777.5h0M1389.5 773.5h0M1389.5 777.5h0M1390.5 775.5h0M1390.5 779.5h0M1390.5 775.5h0M1390.5 779.5h0M1391.5 775.5h0M1391.5 778.5h0M1392.5 776.5h0M1393.5 779.5h0M1393.5 776.5h0M1393.5 779.5h0M1393.5 777.5h0M1394.5 779.5h0M1394.5 777.5h0M1394.5 780.5h0M1395.5 778.5h0M1395.5 776.5h0M1396.5 779.5h0M1397.5 775.5h0M1397.5 777.5h0M1398.5 774.5h0M1399.5 776.5h0M1399.5 772.5h0M1399.5 774.5h0M1401.5 774.5h0M1401.5 771.5h0M1402.5 774.5h0M1403.5 771.5h0M1403.5 769.5h0M1405.5 768.5h0M1405.5 771.5h0M1405.5 768.5h0M1406.5 770.5h0M1407.5 767.5h0M1407.5 765.5h0M1409.5 764.5h0M1409.5 762.5h0M1410.5 764.5h0M1410.5 761.5h0M1410.5 764.5h0M1411.5 761.5h0M1412.5 759.5h0M1412.5 757.5h0M1412.5 759.5h0M1413.5 755.5h0M1413.5 758.5h0M1413.5 755.5h0M1414.5 753.5h0M1415.5 751.5h0M1416.5 748.5h0M1416.5 751.5h0M1416.5 747.5h0M1416.5 749.5h0M1417.5 745.5h0M1417.5 742.5h0M1418.5 740.5h0M1418.5 732.5h0M1418.5 717.5h0M1418.5 703.5h0M1419.5 687.5h0M1419.5 665.5h0M1419.5 644.5h0M1419.5 623.5h0M1420.5 603.5h0M1420.5 584.5h0M1420.5 567.5h0M1420.5 554.5h0M1421.5 544.5h0M1421.5 535.5h0M1421.5 525.5h0M1421.5 518.5h0M1422.5 508.5h0M1422.5 501.5h0M1422.5 494.5h0M1422.5 485.5h0M1422.5 477.5h0M1423.5 470.5h0M1423.5 462.5h0M1423.5 457.5h0M1423.5 446.5h0M1424.5 443.5h0M1424.5 436.5h0M1424.5 430.5h0M1424.5 424.5h0M1425.5 419.5h0M1425.5 416.5h0M1425.5 411.5h0M1425.5 405.5h0M1426.5 399.5h0M1426.5 393.5h0M1427.5 386.5h0M1427.5 381.5h0M1428.5 377.5h0M1428.5 374.5h0M1428.5 372.5h0M1428.5 369.5h0M1429.5 367.5h0M1430.5 365.5h0M1430.5 363.5h0M1431.5 360.5h0M1431.5 362.5h0M1432.5 358.5h0M1433.5 355.5h0M1434.5 353.5h0M1434.5 357.5h0M1435.5 352.5h0M1435.5 354.5h0M1436.5 352.5h0M1436.5 354.5h0M1436.5 352.5h0M1437.5 350.5h0M1438.5 352.5h0M1438.5 349.5h0M1439.5 347.5h0M1440.5 350.5h0M1440.5 346.5h0M1440.5 350.5h0M1441.5 346.5h0M1443.5 349.5h0M1443.5 347.5h0M1443.5 345.5h0M1443.5 347.5h0M1444.5 345.5h0M1444.5 347.5h0M1445.5 344.5h0M1446.5 348.5h0M1446.5 344.5h0M1446.5 348.5h0M1446.5 344.5h0M1447.5 347.5h0M1447.5 344.5h0M1447.5 347.5h0M1448.5 344.5h0M1448.5 348.5h0M1449.5 346.5h0M1450.5 348.5h0M1451.5 351.5h0M1451.5 349.5h0M1452.5 351.5h0M1452.5 353.5h0M1453.5 355.5h0M1453.5 353.5h0M1454.5 356.5h0M1455.5 359.5h0M1456.5 356.5h0M1456.5 359.5h0M1457.5 357.5h0M1457.5 360.5h0M1458.5 358.5h0M1458.5 360.5h0M1459.5 358.5h0M1459.5 361.5h0M1460.5 359.5h0M1461.5 361.5h0M1462.5 363.5h0M1462.5 359.5h0M1462.5 363.5h0M1463.5 361.5h0M1463.5 359.5h0M1464.5 363.5h0M1464.5 361.5h0M1464.5 364.5h0M1465.5 361.5h0M1465.5 366.5h0M1466.5 368.5h0M1466.5 364.5h0M1467.5 369.5h0M1467.5 367.5h0M1467.5 373.5h0M1468.5 370.5h0M1468.5 373.5h0M1469.5 377.5h0M1469.5 373.5h0M1469.5 376.5h0M1470.5 379.5h0M1470.5 381.5h0M1470.5 383.5h0M1471.5 386.5h0M1471.5 391.5h0M1472.5 396.5h0M1472.5 394.5h0M1473.5 399.5h0M1473.5 403.5h0M1473.5 410.5h0M1474.5 413.5h0M1474.5 417.5h0M1474.5 419.5h0M1474.5 425.5h0M1475.5 429.5h0M1475.5 436.5h0M1475.5 441.5h0M1475.5 446.5h0M1476.5 449.5h0M1476.5 455.5h0M1476.5 461.5h0M1476.5 469.5h0M1476.5 476.5h0M1477.5 483.5h0M1477.5 487.5h0M1477.5 495.5h0M1477.5 505.5h0M1478.5 512.5h0M1478.5 518.5h0M1478.5 524.5h0M1478.5 536.5h0M1479.5 542.5h0M1479.5 549.5h0M1479.5 555.5h0M1479.5 564.5h0M1480.5 570.5h0M1480.5 579.5h0M1480.5 590.5h0M1480.5 595.5h0M1481.5 603.5h0M1481.5 616.5h0M1481.5 625.5h0M1481.5 630.5h0M1482.5 642.5h0M1482.5 648.5h0M1482.5 658.5h0M1482.5 666.5h0M1482.5 677.5h0M1483.5 682.5h0M1483.5 689.5h0M1483.5 700.5h0M1483.5 707.5h0M1484.5 710.5h0M1484.5 716.5h0M1484.5 722.5h0M1484.5 726.5h0M1485.5 728.5h0M1485.5 733.5h0M1485.5 738.5h0M1485.5 742.5h0M1486.5 744.5h0M1486.5 750.5h0M1487.5 756.5h0M1488.5 758.5h0M1488.5 761.5h0M1488.5 759.5h0M1489.5 761.5h0M1489.5 765.5h0M1489.5 762.5h0M1490.5 765.5h0M1491.5 768.5h0M1492.5 770.5h0M1493.5 768.5h0M1493.5 772.5h0M1494.5 770.5h0M1494.5 772.5h0M1495.5 774.5h0M1496.5 770.5h0M1496.5 772.5h0M1497.5 774.5h0M1499.5 775.5h0M1499.5 771.5h0M1499.5 774.5h0M1499.5 772.5h0M1500.5 774.5h0M1500.5 772.5h0M1501.5 774.5h0M1501.5 771.5h0M1502.5 774.5h0M1502.5 772.5h0M1503.5 769.5h0M1503.5 771.5h0M1504.5 769.5h0M1504.5 772.5h0M1505.5 770.5h0M1505.5 768.5h0M1505.5 766.5h0M1506.5 770.5h0M1506.5 766.5h0M1507.5 764.5h0M1509.5 764.5h0M1509.5 762.5h0M1509.5 760.5h0M1511.5 760.5h0M1512.5 758.5h0M1512.5 756.5h0M1512.5 758.5h0M1513.5 754.5h0M1514.5 756.5h0M1514.5 753.5h0M1515.5 755.5h0M1515.5 750.5h0M1515.5 752.5h0M1516.5 748.5h0M1517.5 750.5h0M1517.5 746.5h0M1517.5 744.5h0M1518.5 741.5h0M1518.5 743.5h0M1518.5 740.5h0M1519.5 736.5h0M1519.5 726.5h0M1519.5 720.5h0M1519.5 711.5h0M1520.5 700.5h0M1520.5 690.5h0M1520.5 681.5h0M1520.5 665.5h0M1521.5 655.5h0M1521.5 643.5h0M1521.5 628.5h0M1521.5 615.5h0M1522.5 601.5h0M1522.5 589.5h0M1522.5 579.5h0M1522.5 567.5h0M1523.5 555.5h0M1523.5 548.5h0M1523.5 539.5h0M1523.5 525.5h0M1524.5 517.5h0M1524.5 506.5h0M1524.5 495.5h0M1524.5 485.5h0M1524.5 472.5h0M1525.5 466.5h0M1525.5 453.5h0M1525.5 444.5h0M1525.5 435.5h0M1526.5 428.5h0M1526.5 423.5h0M1526.5 415.5h0M1526.5 410.5h0M1527.5 406.5h0M1527.5 404.5h0M1527.5 402.5h0M1527.5 397.5h0M1528.5 394.5h0M1528.5 390.5h0M1529.5 383.5h0M1529.5 385.5h0M1529.5 381.5h0M1529.5 378.5h0M1530.5 376.5h0M1531.5 373.5h0M1531.5 370.5h0M1532.5 372.5h0M1532.5 369.5h0M1532.5 367.5h0M1534.5 367.5h0M1534.5 363.5h0M1534.5 366.5h0M1535.5 363.5h0M1536.5 360.5h0M1536.5 362.5h0M1537.5 360.5h0M1538.5 357.5h0M1538.5 359.5h0M1539.5 357.5h0M1539.5 359.5h0M1540.5 357.5h0M1541.5 355.5h0M1542.5 357.5h0M1542.5 355.5h0M1542.5 357.5h0M1543.5 355.5h0M1543.5 358.5h0M1544.5 356.5h0M1544.5 358.5h0M1545.5 360.5h0M1545.5 358.5h0M1545.5 360.5h0M1546.5 362.5h0M1547.5 364.5h0M1547.5 362.5h0M1547.5 364.5h0M1548.5 367.5h0M1549.5 369.5h0M1549.5 371.5h0M1550.5 373.5h0M1550.5 379.5h0M1550.5 381.5h0M1551.5 383.5h0M1551.5 386.5h0M1551.5 388.5h0M1552.5 386.5h0M1552.5 388.5h0M1552.5 390.5h0M1554.5 390.5h0M1554.5 392.5h0M1555.5 390.5h0M1555.5 394.5h0M1556.5 397.5h0M1557.5 399.5h0M1557.5 405.5h0M1557.5 412.5h0M1558.5 417.5h0M1558.5 428.5h0M1558.5 437.5h0M1558.5 444.5h0M1559.5 449.5h0M1559.5 454.5h0M1559.5 462.5h0M1559.5 469.5h0M1560.5 472.5h0M1560.5 481.5h0M1560.5 487.5h0M1560.5 494.5h0M1560.5 500.5h0M1561.5 506.5h0M1561.5 516.5h0M1561.5 522.5h0M1561.5 528.5h0M1562.5 536.5h0M1562.5 547.5h0M1562.5 553.5h0M1562.5 566.5h0M1563.5 576.5h0M1563.5 589.5h0M1563.5 602.5h0M1563.5 614.5h0M1564.5 627.5h0M1564.5 640.5h0M1564.5 654.5h0M1564.5 667.5h0M1565.5 683.5h0M1565.5 692.5h0M1565.5 706.5h0M1565.5 715.5h0M1566.5 722.5h0M1566.5 733.5h0M1566.5 739.5h0M1566.5 745.5h0M1566.5 743.5h0M1567.5 748.5h0M1567.5 751.5h0M1567.5 755.5h0M1568.5 752.5h0M1568.5 754.5h0M1568.5 758.5h0M1569.5 763.5h0M1570.5 765.5h0M1570.5 767.5h0M1571.5 771.5h0M1571.5 769.5h0M1572.5 771.5h0M1572.5 769.5h0M1572.5 771.5h0M1573.5 773.5h0M1574.5 771.5h0M1575.5 774.5h0M1575.5 771.5h0M1575.5 774.5h0M1576.5 772.5h0M1577.5 775.5h0M1577.5 773.5h0M1578.5 771.5h0M1578.5 774.5h0M1579.5 772.5h0M1579.5 776.5h0M1580.5 771.5h0M1580.5 774.5h0M1581.5 776.5h0M1581.5 774.5h0M1583.5 772.5h0M1583.5 775.5h0M1584.5 771.5h0M1584.5 773.5h0M1584.5 770.5h0M1585.5 772.5h0M1586.5 769.5h0M1587.5 771.5h0M1587.5 767.5h0M1587.5 769.5h0M1588.5 766.5h0M1588.5 769.5h0M1589.5 766.5h0M1589.5 764.5h0M1590.5 766.5h0M1591.5 762.5h0M1591.5 760.5h0M1592.5 758.5h0M1592.5 760.5h0M1593.5 756.5h0M1593.5 758.5h0M1593.5 756.5h0M1594.5 752.5h0M1594.5 747.5h0M1595.5 749.5h0M1595.5 745.5h0M1595.5 741.5h0M1596.5 733.5h0M1596.5 724.5h0M1596.5 714.5h0M1596.5 705.5h0M1596.5 691.5h0M1597.5 678.5h0M1597.5 663.5h0M1597.5 643.5h0M1597.5 628.5h0M1598.5 612.5h0M1598.5 597.5h0M1598.5 584.5h0M1598.5 573.5h0M1599.5 560.5h0M1599.5 549.5h0M1599.5 539.5h0M1599.5 529.5h0M1600.5 518.5h0M1600.5 503.5h0M1600.5 495.5h0M1600.5 482.5h0M1601.5 471.5h0M1601.5 461.5h0M1601.5 450.5h0M1601.5 443.5h0M1602.5 431.5h0M1602.5 423.5h0M1602.5 416.5h0M1602.5 411.5h0M1602.5 405.5h0M1603.5 401.5h0M1603.5 398.5h0M1603.5 394.5h0M1604.5 391.5h0M1604.5 387.5h0M1605.5 384.5h0M1605.5 380.5h0M1605.5 377.5h0M1606.5 374.5h0M1606.5 376.5h0M1607.5 370.5h0M1608.5 368.5h0M1608.5 366.5h0M1609.5 368.5h0M1610.5 365.5h0M1610.5 362.5h0M1611.5 360.5h0M1612.5 363.5h0M1612.5 360.5h0M1612.5 362.5h0M1613.5 357.5h0M1613.5 361.5h0M1614.5 358.5h0M1614.5 356.5h0M1615.5 358.5h0M1615.5 354.5h0M1615.5 357.5h0M1616.5 354.5h0M1616.5 356.5h0M1617.5 353.5h0M1617.5 355.5h0M1618.5 353.5h0M1620.5 353.5h0M1620.5 355.5h0M1621.5 352.5h0M1621.5 355.5h0M1622.5 352.5h0M1623.5 354.5h0M1623.5 356.5h0M1624.5 353.5h0M1624.5 356.5h0M1625.5 358.5h0M1627.5 356.5h0M1627.5 361.5h0M1629.5 362.5h0M1630.5 364.5h0M1630.5 366.5h0M1631.5 364.5h0M1631.5 368.5h0M1632.5 365.5h0M1632.5 369.5h0M1633.5 371.5h0M1633.5 373.5h0M1634.5 370.5h0M1634.5 373.5h0M1634.5 375.5h0M1635.5 373.5h0M1635.5 377.5h0M1637.5 379.5h0M1637.5 382.5h0M1638.5 384.5h0M1638.5 387.5h0M1638.5 385.5h0M1639.5 389.5h0M1639.5 391.5h0M1639.5 388.5h0M1639.5 391.5h0M1641.5 393.5h0M1641.5 397.5h0M1641.5 395.5h0M1641.5 397.5h0M1642.5 400.5h0M1642.5 402.5h0M1643.5 404.5h0M1643.5 402.5h0M1643.5 406.5h0M1644.5 409.5h0M1645.5 411.5h0M1645.5 413.5h0M1645.5 411.5h0M1646.5 414.5h0M1646.5 416.5h0M1647.5 419.5h0M1647.5 421.5h0M1647.5 423.5h0M1648.5 430.5h0M1649.5 433.5h0M1650.5 438.5h0M1650.5 442.5h0M1650.5 445.5h0M1650.5 452.5h0M1651.5 455.5h0M1651.5 470.5h0M1651.5 491.5h0M1651.5 519.5h0M1652.5 542.5h0M1652.5 557.5h0M1652.5 566.5h0M1652.5 579.5h0M1653.5 593.5h0M1653.5 601.5h0M1653.5 611.5h0M1653.5 623.5h0M1654.5 632.5h0M1654.5 641.5h0M1654.5 647.5h0M1654.5 657.5h0M1655.5 665.5h0M1655.5 669.5h0M1655.5 676.5h0M1655.5 687.5h0M1656.5 693.5h0M1656.5 697.5h0M1656.5 704.5h0M1656.5 706.5h0M1656.5 712.5h0M1657.5 715.5h0M1657.5 720.5h0M1657.5 725.5h0M1657.5 730.5h0M1658.5 736.5h0M1658.5 740.5h0M1659.5 745.5h0M1659.5 750.5h0M1659.5 748.5h0M1659.5 753.5h0M1660.5 756.5h0M1660.5 759.5h0M1661.5 761.5h0M1662.5 764.5h0M1662.5 766.5h0M1664.5 765.5h0M1664.5 768.5h0M1664.5 770.5h0M1665.5 767.5h0M1665.5 770.5h0M1666.5 768.5h0M1666.5 772.5h0M1666.5 770.5h0M1667.5 773.5h0M1667.5 770.5h0M1668.5 773.5h0M1668.5 770.5h0M1669.5 773.5h0M1669.5 771.5h0M1669.5 774.5h0M1670.5 770.5h0M1670.5 772.5h0M1671.5 774.5h0M1671.5 772.5h0M1671.5 770.5h0M1672.5 773.5h0M1672.5 771.5h0M1673.5 773.5h0M1673.5 771.5h0M1673.5 773.5h0M1674.5 771.5h0M1674.5 773.5h0M1675.5 770.5h0M1676.5 773.5h0M1677.5 770.5h0M1677.5 772.5h0M1678.5 769.5h0M1679.5 771.5h0M1679.5 768.5h0M1679.5 771.5h0M1680.5 768.5h0M1680.5 771.5h0M1681.5 768.5h0M1681.5 771.5h0M1681.5 767.5h0M1682.5 770.5h0M1682.5 768.5h0M1683.5 770.5h0M1683.5 767.5h0M1684.5 769.5h0M1684.5 767.5h0M1685.5 765.5h0M1685.5 768.5h0M1685.5 765.5h0M1687.5 763.5h0M1687.5 767.5h0M1687.5 762.5h0M1688.5 766.5h0M1688.5 763.5h0M1689.5 765.5h0M1689.5 763.5h0M1690.5 759.5h0M1690.5 763.5h0M1691.5 759.5h0M1691.5 761.5h0M1691.5 758.5h0M1692.5 762.5h0M1692.5 760.5h0M1692.5 758.5h0M1693.5 756.5h0M1694.5 759.5h0M1694.5 757.5h0M1694.5 754.5h0M1695.5 757.5h0M1695.5 754.5h0M1695.5 756.5h0M1696.5 753.5h0M1696.5 755.5h0M1696.5 750.5h0M1696.5 752.5h0M1697.5 749.5h0M1698.5 744.5h0M1699.5 742.5h0M1699.5 739.5h0M1700.5 734.5h0M1700.5 728.5h0M1700.5 708.5h0M1700.5 678.5h0M1701.5 643.5h0M1701.5 607.5h0M1701.5 574.5h0M1701.5 554.5h0M1702.5 533.5h0M1702.5 515.5h0M1702.5 494.5h0M1702.5 477.5h0M1703.5 462.5h0M1703.5 446.5h0M1703.5 431.5h0M1703.5 419.5h0M1704.5 408.5h0M1704.5 402.5h0M1704.5 393.5h0M1704.5 389.5h0M1705.5 383.5h0M1705.5 380.5h0M1705.5 376.5h0M1706.5 371.5h0M1706.5 367.5h0M1707.5 365.5h0M1708.5 363.5h0M1710.5 358.5h0M1710.5 361.5h0M1711.5 357.5h0M1711.5 360.5h0M1712.5 357.5h0M1712.5 359.5h0M1713.5 357.5h0M1713.5 361.5h0M1713.5 359.5h0M1714.5 361.5h0M1714.5 359.5h0M1716.5 360.5h0M1716.5 358.5h0M1716.5 361.5h0M1717.5 358.5h0M1717.5 360.5h0M1717.5 357.5h0M1718.5 360.5h0M1718.5 358.5h0M1719.5 361.5h0M1719.5 359.5h0M1719.5 357.5h0M1720.5 360.5h0M1720.5 358.5h0M1720.5 360.5h0M1721.5 358.5h0M1722.5 360.5h0M1722.5 357.5h0M1723.5 359.5h0M1723.5 362.5h0M1723.5 358.5h0M1724.5 361.5h0M1724.5 358.5h0M1725.5 361.5h0M1725.5 358.5h0M1726.5 362.5h0M1726.5 360.5h0M1726.5 363.5h0M1726.5 359.5h0M1727.5 362.5h0M1728.5 360.5h0M1728.5 363.5h0M1729.5 365.5h0M1729.5 362.5h0M1730.5 365.5h0M1731.5 362.5h0M1731.5 366.5h0M1731.5 362.5h0M1731.5 364.5h0M1732.5 362.5h0M1732.5 365.5h0M1732.5 362.5h0M1733.5 366.5h0M1733.5 364.5h0M1734.5 362.5h0M1734.5 365.5h0M1735.5 362.5h0M1735.5 364.5h0M1736.5 362.5h0M1736.5 366.5h0M1736.5 362.5h0M1737.5 364.5h0M1737.5 362.5h0M1738.5 364.5h0M1739.5 360.5h0M1739.5 362.5h0M1740.5 360.5h0M1740.5 362.5h0M1740.5 360.5h0M1740.5 362.5h0M1742.5 362.5h0M1742.5 364.5h0M1742.5 362.5h0M1743.5 365.5h0M1744.5 367.5h0M1746.5 368.5h0M1746.5 371.5h0M1747.5 375.5h0M1747.5 373.5h0M1747.5 375.5h0M1748.5 377.5h0M1748.5 382.5h0M1748.5 384.5h0M1749.5 387.5h0M1749.5 392.5h0M1750.5 394.5h0M1750.5 400.5h0M1750.5 402.5h0M1751.5 404.5h0M1751.5 408.5h0M1751.5 411.5h0M1751.5 414.5h0M1752.5 417.5h0M1752.5 419.5h0M1752.5 423.5h0M1752.5 428.5h0M1753.5 433.5h0M1753.5 437.5h0M1753.5 446.5h0M1754.5 454.5h0M1754.5 461.5h0M1754.5 466.5h0M1755.5 476.5h0M1755.5 480.5h0M1755.5 489.5h0M1755.5 501.5h0M1756.5 510.5h0M1756.5 518.5h0M1756.5 526.5h0M1756.5 539.5h0M1757.5 547.5h0M1757.5 557.5h0M1757.5 571.5h0M1757.5 589.5h0M1758.5 603.5h0M1758.5 622.5h0M1758.5 637.5h0M1758.5 654.5h0M1758.5 670.5h0M1759.5 685.5h0M1759.5 700.5h0M1759.5 707.5h0M1759.5 715.5h0M1760.5 721.5h0M1760.5 724.5h0M1760.5 729.5h0M1760.5 732.5h0M1761.5 735.5h0M1761.5 741.5h0M1761.5 743.5h0M1762.5 748.5h0M1762.5 753.5h0M1763.5 755.5h0M1763.5 757.5h0M1764.5 760.5h0M1765.5 762.5h0M1765.5 766.5h0M1765.5 764.5h0M1766.5 768.5h0M1766.5 766.5h0M1766.5 768.5h0M1767.5 770.5h0M1768.5 773.5h0M1769.5 771.5h0M1769.5 773.5h0M1770.5 775.5h0M1770.5 772.5h0M1771.5 775.5h0M1771.5 771.5h0M1771.5 774.5h0M1772.5 771.5h0M1772.5 773.5h0M1773.5 775.5h0M1773.5 773.5h0M1773.5 771.5h0M1774.5 773.5h0M1774.5 770.5h0M1774.5 772.5h0M1775.5 770.5h0M1776.5 767.5h0M1777.5 769.5h0M1778.5 767.5h0M1778.5 770.5h0M1779.5 768.5h0M1779.5 766.5h0M1780.5 764.5h0M1782.5 766.5h0M1782.5 762.5h0M1782.5 765.5h0M1783.5 762.5h0M1784.5 765.5h0M1784.5 762.5h0M1785.5 760.5h0M1786.5 763.5h0M1786.5 760.5h0M1786.5 762.5h0M1787.5 757.5h0M1787.5 761.5h0M1788.5 756.5h0M1788.5 758.5h0M1789.5 754.5h0M1790.5 756.5h0M1790.5 752.5h0M1791.5 749.5h0M1791.5 746.5h0M1791.5 748.5h0M1792.5 745.5h0M1792.5 743.5h0M1792.5 736.5h0M1792.5 727.5h0M1793.5 713.5h0M1793.5 700.5h0M1793.5 683.5h0M1793.5 665.5h0M1794.5 647.5h0M1794.5 629.5h0M1794.5 610.5h0M1794.5 592.5h0M1794.5 574.5h0M1795.5 556.5h0M1795.5 543.5h0M1795.5 530.5h0M1795.5 515.5h0M1796.5 500.5h0M1796.5 487.5h0M1796.5 473.5h0M1796.5 460.5h0M1797.5 447.5h0M1797.5 436.5h0M1797.5 425.5h0M1797.5 416.5h0M1798.5 412.5h0M1798.5 407.5h0M1798.5 404.5h0M1798.5 398.5h0M1799.5 392.5h0M1800.5 388.5h0M1800.5 383.5h0M1800.5 381.5h0M1801.5 378.5h0M1801.5 375.5h0M1802.5 373.5h0M1802.5 375.5h0M1802.5 371.5h0M1803.5 367.5h0M1803.5 365.5h0M1804.5 368.5h0M1804.5 364.5h0M1804.5 362.5h0M1805.5 365.5h0M1805.5 362.5h0M1805.5 359.5h0M1805.5 362.5h0M1806.5 359.5h0M1806.5 357.5h0M1806.5 355.5h0M1807.5 352.5h0M1808.5 354.5h0M1808.5 351.5h0M1808.5 353.5h0M1809.5 351.5h0M1810.5 349.5h0M1810.5 347.5h0M1811.5 349.5h0M1811.5 346.5h0M1811.5 348.5h0M1812.5 345.5h0M1813.5 347.5h0M1814.5 345.5h0M1815.5 347.5h0M1815.5 345.5h0M1815.5 343.5h0M1816.5 345.5h0M1816.5 347.5h0M1817.5 345.5h0M1817.5 347.5h0M1817.5 344.5h0M1818.5 348.5h0M1818.5 346.5h0M1818.5 349.5h0M1819.5 347.5h0M1819.5 350.5h0M1819.5 348.5h0M1820.5 351.5h0M1820.5 354.5h0M1821.5 351.5h0M1821.5 353.5h0M1821.5 351.5h0M1821.5 354.5h0M1822.5 356.5h0M1822.5 354.5h0M1822.5 358.5h0M1823.5 356.5h0M1824.5 360.5h0M1824.5 363.5h0M1825.5 365.5h0M1826.5 368.5h0M1827.5 372.5h0M1829.5 372.5h0M1829.5 377.5h0M1829.5 375.5h0M1830.5 380.5h0M1830.5 382.5h0M1830.5 384.5h0M1831.5 386.5h0M1831.5 388.5h0M1832.5 393.5h0M1832.5 395.5h0M1833.5 398.5h0M1833.5 402.5h0M1834.5 407.5h0M1834.5 410.5h0M1834.5 413.5h0M1835.5 416.5h0M1835.5 419.5h0M1835.5 422.5h0M1836.5 425.5h0M1836.5 427.5h0M1836.5 429.5h0M1836.5 433.5h0M1837.5 439.5h0M1837.5 443.5h0M1837.5 445.5h0M1838.5 448.5h0M1838.5 456.5h0M1838.5 462.5h0M1838.5 472.5h0M1839.5 485.5h0M1839.5 493.5h0M1839.5 505.5h0M1839.5 519.5h0M1840.5 526.5h0M1840.5 539.5h0M1840.5 548.5h0M1840.5 560.5h0M1841.5 570.5h0M1841.5 584.5h0M1841.5 594.5h0M1841.5 602.5h0M1842.5 617.5h0M1842.5 625.5h0M1842.5 638.5h0M1842.5 646.5h0M1842.5 653.5h0M1843.5 661.5h0M1843.5 666.5h0M1843.5 674.5h0M1843.5 677.5h0M1844.5 681.5h0M1844.5 687.5h0M1844.5 691.5h0M1844.5 693.5h0M1845.5 697.5h0M1845.5 701.5h0M1845.5 707.5h0M1845.5 711.5h0M1846.5 714.5h0M1846.5 716.5h0M1846.5 721.5h0M1847.5 725.5h0M1847.5 730.5h0M1847.5 737.5h0M1848.5 742.5h0M1848.5 740.5h0M1848.5 746.5h0M1849.5 744.5h0M1849.5 749.5h0M1850.5 752.5h0M1850.5 754.5h0M1851.5 756.5h0M1852.5 759.5h0M1853.5 761.5h0M1853.5 757.5h0M1853.5 761.5h0M1854.5 764.5h0M1854.5 766.5h0M1854.5 764.5h0M258.5 269.5h0M190.5 341.5h0M190.5 348.5h0M404.5 879.5h0M454.5 329.5h0M555.5 339.5h0M649.5 828.5h0M691.5 814.5h0M679.5 782.5h0M682.5 790.5h0M759.5 294.5h0M765.5 298.5h0M793.5 320.5h0M839.5 347.5h0M852.5 358.5h0M930.5 331.5h0M940.5 309.5h0M950.5 362.5h0M1263.5 337.5h0M1302.5 781.5h0M1709.5 352.5h0M1718.5 352.5h0M1722.5 352.5h0M1820.5 330.5h0M1841.5 436.5h0" fill="none" stroke="#fff" stroke-opacity="0.3" stroke-width="4.4" stroke-linecap="round"/><path d="M112 371.5h3m-1.5-1.5v3M112 375.5h3m-1.5-1.5v3M113 380.5h3m-1.5-1.5v3M114 383.5h3m-1.5-1.5v3M114 385.5h3m-1.5-1.5v3M115 388.5h3m-1.5-1.5v3M115 392.5h3m-1.5-1.5v3M116 389.5h3m-1.5-1.5v3M116 394.5h3m-1.5-1.5v3M117 398.5h3m-1.5-1.5v3M117 396.5h3m-1.5-1.5v3M117 398.5h3m-1.5-1.5v3M118 400.5h3m-1.5-1.5v3M118 404.5h3m-1.5-1.5v3M119 402.5h3m-1.5-1.5v3M119 407.5h3m-1.5-1.5v3M120 405.5h3m-1.5-1.5v3M120 407.5h3m-1.5-1.5v3M120 409.5h3m-1.5-1.5v3M122 411.5h3m-1.5-1.5v3M122 413.5h3m-1.5-1.5v3M122 411.5h3m-1.5-1.5v3M123 415.5h3m-1.5-1.5v3M123 418.5h3m-1.5-1.5v3M124 423.5h3m-1.5-1.5v3M124 425.5h3m-1.5-1.5v3M124 430.5h3m-1.5-1.5v3M124 428.5h3m-1.5-1.5v3M125 431.5h3m-1.5-1.5v3M125 437.5h3m-1.5-1.5v3M125 439.5h3m-1.5-1.5v3M126 444.5h3m-1.5-1.5v3M126 446.5h3m-1.5-1.5v3M127 450.5h3m-1.5-1.5v3M127 448.5h3m-1.5-1.5v3M127 454.5h3m-1.5-1.5v3M128 456.5h3m-1.5-1.5v3M128 461.5h3m-1.5-1.5v3M128 468.5h3m-1.5-1.5v3M129 483.5h3m-1.5-1.5v3M129 501.5h3m-1.5-1.5v3M129 518.5h3m-1.5-1.5v3M129 534.5h3m-1.5-1.5v3M130 553.5h3m-1.5-1.5v3M130 567.5h3m-1.5-1.5v3M130 584.5h3m-1.5-1.5v3M130 601.5h3m-1.5-1.5v3M130 620.5h3m-1.5-1.5v3M131 633.5h3m-1.5-1.5v3M131 652.5h3m-1.5-1.5v3M131 666.5h3m-1.5-1.5v3M131 679.5h3m-1.5-1.5v3M132 687.5h3m-1.5-1.5v3M132 696.5h3m-1.5-1.5v3M132 706.5h3m-1.5-1.5v3M133 711.5h3m-1.5-1.5v3M133 716.5h3m-1.5-1.5v3M133 720.5h3m-1.5-1.5v3M133 723.5h3m-1.5-1.5v3M134 727.5h3m-1.5-1.5v3M134 732.5h3m-1.5-1.5v3M134 734.5h3m-1.5-1.5v3M135 738.5h3m-1.5-1.5v3M135 742.5h3m-1.5-1.5v3M135 745.5h3m-1.5-1.5v3M136 747.5h3m-1.5-1.5v3M136 750.5h3m-1.5-1.5v3M136 752.5h3m-1.5-1.5v3M137 755.5h3m-1.5-1.5v3M137 752.5h3m-1.5-1.5v3M137 755.5h3m-1.5-1.5v3M138 759.5h3m-1.5-1.5v3M139 762.5h3m-1.5-1.5v3M139 760.5h3m-1.5-1.5v3M140 762.5h3m-1.5-1.5v3M140 764.5h3m-1.5-1.5v3M140 762.5h3m-1.5-1.5v3M141 766.5h3m-1.5-1.5v3M141 764.5h3m-1.5-1.5v3M142 766.5h3m-1.5-1.5v3M144 768.5h3m-1.5-1.5v3M144 765.5h3m-1.5-1.5v3M144 767.5h3m-1.5-1.5v3M144 769.5h3m-1.5-1.5v3M145 766.5h3m-1.5-1.5v3M145 769.5h3m-1.5-1.5v3M145 767.5h3m-1.5-1.5v3M146 769.5h3m-1.5-1.5v3M147 767.5h3m-1.5-1.5v3M147 770.5h3m-1.5-1.5v3M148 768.5h3m-1.5-1.5v3M148 770.5h3m-1.5-1.5v3M148 765.5h3m-1.5-1.5v3M148 768.5h3m-1.5-1.5v3M149 766.5h3m-1.5-1.5v3M150 768.5h3m-1.5-1.5v3M150 764.5h3m-1.5-1.5v3M151 767.5h3m-1.5-1.5v3M151 764.5h3m-1.5-1.5v3M152 767.5h3m-1.5-1.5v3M152 764.5h3m-1.5-1.5v3M153 762.5h3m-1.5-1.5v3M153 764.5h3m-1.5-1.5v3M154 761.5h3m-1.5-1.5v3M155 763.5h3m-1.5-1.5v3M156 760.5h3m-1.5-1.5v3M156 762.5h3m-1.5-1.5v3M156 758.5h3m-1.5-1.5v3M156 760.5h3m-1.5-1.5v3M157 758.5h3m-1.5-1.5v3M158 756.5h3m-1.5-1.5v3M159 754.5h3m-1.5-1.5v3M159 752.5h3m-1.5-1.5v3M160 755.5h3m-1.5-1.5v3M160 752.5h3m-1.5-1.5v3M160 754.5h3m-1.5-1.5v3M161 749.5h3m-1.5-1.5v3M161 751.5h3m-1.5-1.5v3M161 748.5h3m-1.5-1.5v3M162 750.5h3m-1.5-1.5v3M162 746.5h3m-1.5-1.5v3M162 743.5h3m-1.5-1.5v3M163 745.5h3m-1.5-1.5v3M163 739.5h3m-1.5-1.5v3M163 737.5h3m-1.5-1.5v3M164 730.5h3m-1.5-1.5v3M164 725.5h3m-1.5-1.5v3M164 719.5h3m-1.5-1.5v3M165 716.5h3m-1.5-1.5v3M165 708.5h3m-1.5-1.5v3M165 702.5h3m-1.5-1.5v3M165 694.5h3m-1.5-1.5v3M166 688.5h3m-1.5-1.5v3M166 676.5h3m-1.5-1.5v3M166 669.5h3m-1.5-1.5v3M166 657.5h3m-1.5-1.5v3M166 650.5h3m-1.5-1.5v3M167 640.5h3m-1.5-1.5v3M167 629.5h3m-1.5-1.5v3M167 618.5h3m-1.5-1.5v3M167 606.5h3m-1.5-1.5v3M168 597.5h3m-1.5-1.5v3M168 585.5h3m-1.5-1.5v3M168 573.5h3m-1.5-1.5v3M168 566.5h3m-1.5-1.5v3M169 558.5h3m-1.5-1.5v3M169 545.5h3m-1.5-1.5v3M169 538.5h3m-1.5-1.5v3M169 533.5h3m-1.5-1.5v3M170 525.5h3m-1.5-1.5v3M170 516.5h3m-1.5-1.5v3M170 505.5h3m-1.5-1.5v3M170 498.5h3m-1.5-1.5v3M171 489.5h3m-1.5-1.5v3M171 485.5h3m-1.5-1.5v3M171 473.5h3m-1.5-1.5v3M171 466.5h3m-1.5-1.5v3M172 460.5h3m-1.5-1.5v3M172 453.5h3m-1.5-1.5v3M172 445.5h3m-1.5-1.5v3M172 439.5h3m-1.5-1.5v3M172 433.5h3m-1.5-1.5v3M173 428.5h3m-1.5-1.5v3M173 419.5h3m-1.5-1.5v3M173 414.5h3m-1.5-1.5v3M174 410.5h3m-1.5-1.5v3M174 404.5h3m-1.5-1.5v3M174 402.5h3m-1.5-1.5v3M175 397.5h3m-1.5-1.5v3M175 394.5h3m-1.5-1.5v3M175 392.5h3m-1.5-1.5v3M176 390.5h3m-1.5-1.5v3M176 386.5h3m-1.5-1.5v3M177 382.5h3m-1.5-1.5v3M177 380.5h3m-1.5-1.5v3M178 377.5h3m-1.5-1.5v3M178 375.5h3m-1.5-1.5v3M178 370.5h3m-1.5-1.5v3M178 373.5h3m-1.5-1.5v3M179 370.5h3m-1.5-1.5v3M179 367.5h3m-1.5-1.5v3M180 364.5h3m-1.5-1.5v3M181 361.5h3m-1.5-1.5v3M181 364.5h3m-1.5-1.5v3M181 361.5h3m-1.5-1.5v3M182 359.5h3m-1.5-1.5v3M182 361.5h3m-1.5-1.5v3M183 359.5h3m-1.5-1.5v3M184 357.5h3m-1.5-1.5v3M184 359.5h3m-1.5-1.5v3M185 357.5h3m-1.5-1.5v3M187 356.5h3m-1.5-1.5v3M188 353.5h3m-1.5-1.5v3M188 355.5h3m-1.5-1.5v3M189 353.5h3m-1.5-1.5v3M190 355.5h3m-1.5-1.5v3M191 353.5h3m-1.5-1.5v3M191 355.5h3m-1.5-1.5v3M191 353.5h3m-1.5-1.5v3M192 356.5h3m-1.5-1.5v3M192 358.5h3m-1.5-1.5v3M193 356.5h3m-1.5-1.5v3M194 359.5h3m-1.5-1.5v3M195 362.5h3m-1.5-1.5v3M196 365.5h3m-1.5-1.5v3M197 362.5h3m-1.5-1.5v3M197 364.5h3m-1.5-1.5v3M197 367.5h3m-1.5-1.5v3M198 365.5h3m-1.5-1.5v3M198 369.5h3m-1.5-1.5v3M198 366.5h3m-1.5-1.5v3M198 368.5h3m-1.5-1.5v3M199 370.5h3m-1.5-1.5v3M200 368.5h3m-1.5-1.5v3M201 372.5h3m-1.5-1.5v3M202 370.5h3m-1.5-1.5v3M202 373.5h3m-1.5-1.5v3M202 370.5h3m-1.5-1.5v3M202 372.5h3m-1.5-1.5v3M203 375.5h3m-1.5-1.5v3M204 373.5h3m-1.5-1.5v3M205 375.5h3m-1.5-1.5v3M205 373.5h3m-1.5-1.5v3M206 376.5h3m-1.5-1.5v3M207 374.5h3m-1.5-1.5v3M207 378.5h3m-1.5-1.5v3M208 375.5h3m-1.5-1.5v3M208 379.5h3m-1.5-1.5v3M209 377.5h3m-1.5-1.5v3M209 380.5h3m-1.5-1.5v3M209 377.5h3m-1.5-1.5v3M210 379.5h3m-1.5-1.5v3M210 381.5h3m-1.5-1.5v3M210 379.5h3m-1.5-1.5v3M211 384.5h3m-1.5-1.5v3M212 389.5h3m-1.5-1.5v3M213 393.5h3m-1.5-1.5v3M213 396.5h3m-1.5-1.5v3M214 399.5h3m-1.5-1.5v3M214 401.5h3m-1.5-1.5v3M215 403.5h3m-1.5-1.5v3M215 405.5h3m-1.5-1.5v3M216 407.5h3m-1.5-1.5v3M216 413.5h3m-1.5-1.5v3M216 411.5h3m-1.5-1.5v3M217 415.5h3m-1.5-1.5v3M217 418.5h3m-1.5-1.5v3M217 422.5h3m-1.5-1.5v3M218 425.5h3m-1.5-1.5v3M218 428.5h3m-1.5-1.5v3M219 430.5h3m-1.5-1.5v3M219 432.5h3m-1.5-1.5v3M219 435.5h3m-1.5-1.5v3M219 443.5h3m-1.5-1.5v3M220 446.5h3m-1.5-1.5v3M220 448.5h3m-1.5-1.5v3M220 456.5h3m-1.5-1.5v3M220 459.5h3m-1.5-1.5v3M220 467.5h3m-1.5-1.5v3M221 473.5h3m-1.5-1.5v3M221 481.5h3m-1.5-1.5v3M221 487.5h3m-1.5-1.5v3M221 497.5h3m-1.5-1.5v3M222 504.5h3m-1.5-1.5v3M222 512.5h3m-1.5-1.5v3M222 519.5h3m-1.5-1.5v3M222 528.5h3m-1.5-1.5v3M223 536.5h3m-1.5-1.5v3M223 547.5h3m-1.5-1.5v3M223 557.5h3m-1.5-1.5v3M223 566.5h3m-1.5-1.5v3M224 576.5h3m-1.5-1.5v3M224 586.5h3m-1.5-1.5v3M224 597.5h3m-1.5-1.5v3M224 611.5h3m-1.5-1.5v3M225 622.5h3m-1.5-1.5v3M225 633.5h3m-1.5-1.5v3M225 644.5h3m-1.5-1.5v3M225 655.5h3m-1.5-1.5v3M226 664.5h3m-1.5-1.5v3M226 671.5h3m-1.5-1.5v3M226 679.5h3m-1.5-1.5v3M226 686.5h3m-1.5-1.5v3M226 693.5h3m-1.5-1.5v3M227 702.5h3m-1.5-1.5v3M227 708.5h3m-1.5-1.5v3M227 713.5h3m-1.5-1.5v3M227 718.5h3m-1.5-1.5v3M228 723.5h3m-1.5-1.5v3M228 726.5h3m-1.5-1.5v3M228 731.5h3m-1.5-1.5v3M228 734.5h3m-1.5-1.5v3M229 738.5h3m-1.5-1.5v3M229 742.5h3m-1.5-1.5v3M230 746.5h3m-1.5-1.5v3M231 748.5h3m-1.5-1.5v3M231 750.5h3m-1.5-1.5v3M232 752.5h3m-1.5-1.5v3M232 749.5h3m-1.5-1.5v3M232 755.5h3m-1.5-1.5v3M233 753.5h3m-1.5-1.5v3M233 757.5h3m-1.5-1.5v3M233 755.5h3m-1.5-1.5v3M233 758.5h3m-1.5-1.5v3M234 755.5h3m-1.5-1.5v3M234 758.5h3m-1.5-1.5v3M234 760.5h3m-1.5-1.5v3M235 757.5h3m-1.5-1.5v3M235 761.5h3m-1.5-1.5v3M235 759.5h3m-1.5-1.5v3M235 761.5h3m-1.5-1.5v3M236 759.5h3m-1.5-1.5v3M236 761.5h3m-1.5-1.5v3M237 764.5h3m-1.5-1.5v3M238 762.5h3m-1.5-1.5v3M238 765.5h3m-1.5-1.5v3M239 767.5h3m-1.5-1.5v3M239 764.5h3m-1.5-1.5v3M240 767.5h3m-1.5-1.5v3M240 765.5h3m-1.5-1.5v3M241 763.5h3m-1.5-1.5v3M243 761.5h3m-1.5-1.5v3M244 759.5h3m-1.5-1.5v3M244 757.5h3m-1.5-1.5v3M245 759.5h3m-1.5-1.5v3M245 757.5h3m-1.5-1.5v3M246 754.5h3m-1.5-1.5v3M246 751.5h3m-1.5-1.5v3M247 745.5h3m-1.5-1.5v3M247 739.5h3m-1.5-1.5v3M248 736.5h3m-1.5-1.5v3M248 724.5h3m-1.5-1.5v3M248 690.5h3m-1.5-1.5v3M248 638.5h3m-1.5-1.5v3M249 590.5h3m-1.5-1.5v3M249 539.5h3m-1.5-1.5v3M249 489.5h3m-1.5-1.5v3M249 444.5h3m-1.5-1.5v3M250 416.5h3m-1.5-1.5v3M250 400.5h3m-1.5-1.5v3M250 385.5h3m-1.5-1.5v3M250 376.5h3m-1.5-1.5v3M250 364.5h3m-1.5-1.5v3M251 354.5h3m-1.5-1.5v3M251 350.5h3m-1.5-1.5v3M251 346.5h3m-1.5-1.5v3M252 340.5h3m-1.5-1.5v3M252 338.5h3m-1.5-1.5v3M252 335.5h3m-1.5-1.5v3M252 333.5h3m-1.5-1.5v3M253 330.5h3m-1.5-1.5v3M253 332.5h3m-1.5-1.5v3M253 329.5h3m-1.5-1.5v3M254 327.5h3m-1.5-1.5v3M254 324.5h3m-1.5-1.5v3M255 321.5h3m-1.5-1.5v3M255 323.5h3m-1.5-1.5v3M256 321.5h3m-1.5-1.5v3M256 318.5h3m-1.5-1.5v3M256 316.5h3m-1.5-1.5v3M257 320.5h3m-1.5-1.5v3M257 317.5h3m-1.5-1.5v3M257 320.5h3m-1.5-1.5v3M257 318.5h3m-1.5-1.5v3M258 316.5h3m-1.5-1.5v3M259 319.5h3m-1.5-1.5v3M260 317.5h3m-1.5-1.5v3M260 319.5h3m-1.5-1.5v3M261 322.5h3m-1.5-1.5v3M261 324.5h3m-1.5-1.5v3M262 326.5h3m-1.5-1.5v3M262 328.5h3m-1.5-1.5v3M263 333.5h3m-1.5-1.5v3M263 336.5h3m-1.5-1.5v3M264 340.5h3m-1.5-1.5v3M264 343.5h3m-1.5-1.5v3M265 348.5h3m-1.5-1.5v3M265 351.5h3m-1.5-1.5v3M265 357.5h3m-1.5-1.5v3M265 364.5h3m-1.5-1.5v3M266 372.5h3m-1.5-1.5v3M266 388.5h3m-1.5-1.5v3M266 408.5h3m-1.5-1.5v3M266 440.5h3m-1.5-1.5v3M267 472.5h3m-1.5-1.5v3M267 490.5h3m-1.5-1.5v3M267 505.5h3m-1.5-1.5v3M267 522.5h3m-1.5-1.5v3M268 543.5h3m-1.5-1.5v3M268 585.5h3m-1.5-1.5v3M268 636.5h3m-1.5-1.5v3M268 681.5h3m-1.5-1.5v3M268 705.5h3m-1.5-1.5v3M269 720.5h3m-1.5-1.5v3M269 729.5h3m-1.5-1.5v3M269 737.5h3m-1.5-1.5v3M269 743.5h3m-1.5-1.5v3M270 749.5h3m-1.5-1.5v3M270 752.5h3m-1.5-1.5v3M270 757.5h3m-1.5-1.5v3M271 759.5h3m-1.5-1.5v3M271 763.5h3m-1.5-1.5v3M272 765.5h3m-1.5-1.5v3M272 767.5h3m-1.5-1.5v3M273 769.5h3m-1.5-1.5v3M274 773.5h3m-1.5-1.5v3M274 771.5h3m-1.5-1.5v3M274 775.5h3m-1.5-1.5v3M275 777.5h3m-1.5-1.5v3M276 780.5h3m-1.5-1.5v3M277 782.5h3m-1.5-1.5v3M277 779.5h3m-1.5-1.5v3M278 781.5h3m-1.5-1.5v3M278 783.5h3m-1.5-1.5v3M278 781.5h3m-1.5-1.5v3M279 783.5h3m-1.5-1.5v3M279 785.5h3m-1.5-1.5v3M280 783.5h3m-1.5-1.5v3M280 781.5h3m-1.5-1.5v3M280 784.5h3m-1.5-1.5v3M281 781.5h3m-1.5-1.5v3M281 783.5h3m-1.5-1.5v3M282 781.5h3m-1.5-1.5v3M282 784.5h3m-1.5-1.5v3M282 782.5h3m-1.5-1.5v3M283 780.5h3m-1.5-1.5v3M283 782.5h3m-1.5-1.5v3M283 780.5h3m-1.5-1.5v3M284 783.5h3m-1.5-1.5v3M285 779.5h3m-1.5-1.5v3M285 782.5h3m-1.5-1.5v3M285 780.5h3m-1.5-1.5v3M285 778.5h3m-1.5-1.5v3M286 782.5h3m-1.5-1.5v3M286 779.5h3m-1.5-1.5v3M287 781.5h3m-1.5-1.5v3M287 779.5h3m-1.5-1.5v3M289 777.5h3m-1.5-1.5v3M289 779.5h3m-1.5-1.5v3M289 776.5h3m-1.5-1.5v3M289 779.5h3m-1.5-1.5v3M290 777.5h3m-1.5-1.5v3M290 774.5h3m-1.5-1.5v3M292 773.5h3m-1.5-1.5v3M292 776.5h3m-1.5-1.5v3M292 773.5h3m-1.5-1.5v3M292 775.5h3m-1.5-1.5v3M293 772.5h3m-1.5-1.5v3M293 775.5h3m-1.5-1.5v3M293 772.5h3m-1.5-1.5v3M294 775.5h3m-1.5-1.5v3M295 771.5h3m-1.5-1.5v3M295 774.5h3m-1.5-1.5v3M295 771.5h3m-1.5-1.5v3M296 775.5h3m-1.5-1.5v3M296 771.5h3m-1.5-1.5v3M296 773.5h3m-1.5-1.5v3M298 774.5h3m-1.5-1.5v3M298 770.5h3m-1.5-1.5v3M299 772.5h3m-1.5-1.5v3M300 770.5h3m-1.5-1.5v3M301 772.5h3m-1.5-1.5v3M302 768.5h3m-1.5-1.5v3M302 770.5h3m-1.5-1.5v3M303 768.5h3m-1.5-1.5v3M303 771.5h3m-1.5-1.5v3M304 768.5h3m-1.5-1.5v3M304 771.5h3m-1.5-1.5v3M304 767.5h3m-1.5-1.5v3M304 769.5h3m-1.5-1.5v3M305 766.5h3m-1.5-1.5v3M306 768.5h3m-1.5-1.5v3M306 766.5h3m-1.5-1.5v3M308 766.5h3m-1.5-1.5v3M308 764.5h3m-1.5-1.5v3M308 767.5h3m-1.5-1.5v3M309 763.5h3m-1.5-1.5v3M309 765.5h3m-1.5-1.5v3M309 763.5h3m-1.5-1.5v3M309 767.5h3m-1.5-1.5v3M310 763.5h3m-1.5-1.5v3M310 765.5h3m-1.5-1.5v3M310 762.5h3m-1.5-1.5v3M310 764.5h3m-1.5-1.5v3M311 760.5h3m-1.5-1.5v3M312 764.5h3m-1.5-1.5v3M312 760.5h3m-1.5-1.5v3M312 763.5h3m-1.5-1.5v3M313 761.5h3m-1.5-1.5v3M313 758.5h3m-1.5-1.5v3M314 762.5h3m-1.5-1.5v3M314 758.5h3m-1.5-1.5v3M315 760.5h3m-1.5-1.5v3M315 758.5h3m-1.5-1.5v3M316 756.5h3m-1.5-1.5v3M317 754.5h3m-1.5-1.5v3M317 757.5h3m-1.5-1.5v3M317 754.5h3m-1.5-1.5v3M318 756.5h3m-1.5-1.5v3M318 753.5h3m-1.5-1.5v3M318 756.5h3m-1.5-1.5v3M318 753.5h3m-1.5-1.5v3M319 755.5h3m-1.5-1.5v3M319 752.5h3m-1.5-1.5v3M320 755.5h3m-1.5-1.5v3M320 753.5h3m-1.5-1.5v3M321 751.5h3m-1.5-1.5v3M322 754.5h3m-1.5-1.5v3M322 752.5h3m-1.5-1.5v3M323 750.5h3m-1.5-1.5v3M323 753.5h3m-1.5-1.5v3M323 749.5h3m-1.5-1.5v3M324 751.5h3m-1.5-1.5v3M324 749.5h3m-1.5-1.5v3M324 751.5h3m-1.5-1.5v3M325 747.5h3m-1.5-1.5v3M325 750.5h3m-1.5-1.5v3M325 745.5h3m-1.5-1.5v3M326 742.5h3m-1.5-1.5v3M326 740.5h3m-1.5-1.5v3M327 738.5h3m-1.5-1.5v3M327 735.5h3m-1.5-1.5v3M327 732.5h3m-1.5-1.5v3M328 729.5h3m-1.5-1.5v3M336 356.5h3m-1.5-1.5v3M334 351.5h3m-1.5-1.5v3M335 347.5h3m-1.5-1.5v3M336 352.5h3m-1.5-1.5v3M334 368.5h3m-1.5-1.5v3M336 359.5h3m-1.5-1.5v3M334 356.5h3m-1.5-1.5v3M333 366.5h3m-1.5-1.5v3M335 350.5h3m-1.5-1.5v3M334 362.5h3m-1.5-1.5v3M334 346.5h3m-1.5-1.5v3M335 363.5h3m-1.5-1.5v3M337 368.5h3m-1.5-1.5v3M337 346.5h3m-1.5-1.5v3M337 362.5h3m-1.5-1.5v3M335 366.5h3m-1.5-1.5v3M335 345.5h3m-1.5-1.5v3M333 350.5h3m-1.5-1.5v3M333 354.5h3m-1.5-1.5v3M337 346.5h3m-1.5-1.5v3M337 357.5h3m-1.5-1.5v3M337 353.5h3m-1.5-1.5v3M334 359.5h3m-1.5-1.5v3M337 353.5h3m-1.5-1.5v3M335 345.5h3m-1.5-1.5v3M336 359.5h3m-1.5-1.5v3M335 365.5h3m-1.5-1.5v3M334 350.5h3m-1.5-1.5v3M331 370.5h3m-1.5-1.5v3M331 381.5h3m-1.5-1.5v3M331 391.5h3m-1.5-1.5v3M333 405.5h3m-1.5-1.5v3M331 423.5h3m-1.5-1.5v3M338 370.5h3m-1.5-1.5v3M339 381.5h3m-1.5-1.5v3M338 391.5h3m-1.5-1.5v3M336 407.5h3m-1.5-1.5v3M339 423.5h3m-1.5-1.5v3M346 735.5h3m-1.5-1.5v3M345 746.5h3m-1.5-1.5v3M347 737.5h3m-1.5-1.5v3M348 740.5h3m-1.5-1.5v3M344 737.5h3m-1.5-1.5v3M345 741.5h3m-1.5-1.5v3M347 733.5h3m-1.5-1.5v3M346 746.5h3m-1.5-1.5v3M346 741.5h3m-1.5-1.5v3M343 741.5h3m-1.5-1.5v3M344 735.5h3m-1.5-1.5v3M343 728.5h3m-1.5-1.5v3M344 721.5h3m-1.5-1.5v3M344 712.5h3m-1.5-1.5v3M348 741.5h3m-1.5-1.5v3M348 734.5h3m-1.5-1.5v3M349 726.5h3m-1.5-1.5v3M347 718.5h3m-1.5-1.5v3M349 710.5h3m-1.5-1.5v3M355 353.5h3m-1.5-1.5v3M355 361.5h3m-1.5-1.5v3M353 357.5h3m-1.5-1.5v3M354 353.5h3m-1.5-1.5v3M352 354.5h3m-1.5-1.5v3M352 347.5h3m-1.5-1.5v3M355 359.5h3m-1.5-1.5v3M353 359.5h3m-1.5-1.5v3M355 344.5h3m-1.5-1.5v3M356 362.5h3m-1.5-1.5v3M355 368.5h3m-1.5-1.5v3M356 344.5h3m-1.5-1.5v3M354 358.5h3m-1.5-1.5v3M357 347.5h3m-1.5-1.5v3M355 365.5h3m-1.5-1.5v3M354 344.5h3m-1.5-1.5v3M355 365.5h3m-1.5-1.5v3M356 356.5h3m-1.5-1.5v3M353 346.5h3m-1.5-1.5v3M354 358.5h3m-1.5-1.5v3M354 351.5h3m-1.5-1.5v3M358 369.5h3m-1.5-1.5v3M353 346.5h3m-1.5-1.5v3M356 346.5h3m-1.5-1.5v3M356 356.5h3m-1.5-1.5v3M354 351.5h3m-1.5-1.5v3M350 369.5h3m-1.5-1.5v3M350 381.5h3m-1.5-1.5v3M352 390.5h3m-1.5-1.5v3M351 402.5h3m-1.5-1.5v3M352 416.5h3m-1.5-1.5v3M358 369.5h3m-1.5-1.5v3M355 381.5h3m-1.5-1.5v3M357 395.5h3m-1.5-1.5v3M357 410.5h3m-1.5-1.5v3M356 425.5h3m-1.5-1.5v3M369 737.5h3m-1.5-1.5v3M366 749.5h3m-1.5-1.5v3M365 742.5h3m-1.5-1.5v3M369 748.5h3m-1.5-1.5v3M367 744.5h3m-1.5-1.5v3M369 741.5h3m-1.5-1.5v3M369 746.5h3m-1.5-1.5v3M366 744.5h3m-1.5-1.5v3M366 738.5h3m-1.5-1.5v3M366 729.5h3m-1.5-1.5v3M364 720.5h3m-1.5-1.5v3M368 744.5h3m-1.5-1.5v3M370 736.5h3m-1.5-1.5v3M370 729.5h3m-1.5-1.5v3M369 718.5h3m-1.5-1.5v3M374 375.5h3m-1.5-1.5v3M375 364.5h3m-1.5-1.5v3M378 363.5h3m-1.5-1.5v3M375 375.5h3m-1.5-1.5v3M378 358.5h3m-1.5-1.5v3M375 377.5h3m-1.5-1.5v3M378 357.5h3m-1.5-1.5v3M374 364.5h3m-1.5-1.5v3M374 358.5h3m-1.5-1.5v3M378 367.5h3m-1.5-1.5v3M375 361.5h3m-1.5-1.5v3M378 373.5h3m-1.5-1.5v3M377 357.5h3m-1.5-1.5v3M376 376.5h3m-1.5-1.5v3M375 358.5h3m-1.5-1.5v3M377 366.5h3m-1.5-1.5v3M376 362.5h3m-1.5-1.5v3M374 364.5h3m-1.5-1.5v3M378 366.5h3m-1.5-1.5v3M376 360.5h3m-1.5-1.5v3M374 381.5h3m-1.5-1.5v3M377 362.5h3m-1.5-1.5v3M377 370.5h3m-1.5-1.5v3M376 367.5h3m-1.5-1.5v3M375 373.5h3m-1.5-1.5v3M377 373.5h3m-1.5-1.5v3M372 382.5h3m-1.5-1.5v3M373 392.5h3m-1.5-1.5v3M374 407.5h3m-1.5-1.5v3M373 420.5h3m-1.5-1.5v3M373 434.5h3m-1.5-1.5v3M380 382.5h3m-1.5-1.5v3M378 392.5h3m-1.5-1.5v3M379 406.5h3m-1.5-1.5v3M378 418.5h3m-1.5-1.5v3M379 431.5h3m-1.5-1.5v3M385 755.5h3m-1.5-1.5v3M389 748.5h3m-1.5-1.5v3M386 745.5h3m-1.5-1.5v3M387 757.5h3m-1.5-1.5v3M386 744.5h3m-1.5-1.5v3M385 751.5h3m-1.5-1.5v3M386 744.5h3m-1.5-1.5v3M384 737.5h3m-1.5-1.5v3M384 728.5h3m-1.5-1.5v3M390 751.5h3m-1.5-1.5v3M388 743.5h3m-1.5-1.5v3M388 734.5h3m-1.5-1.5v3M388 725.5h3m-1.5-1.5v3M394 375.5h3m-1.5-1.5v3M397 380.5h3m-1.5-1.5v3M397 363.5h3m-1.5-1.5v3M396 366.5h3m-1.5-1.5v3M396 369.5h3m-1.5-1.5v3M394 376.5h3m-1.5-1.5v3M398 359.5h3m-1.5-1.5v3M395 367.5h3m-1.5-1.5v3M398 359.5h3m-1.5-1.5v3M397 374.5h3m-1.5-1.5v3M399 377.5h3m-1.5-1.5v3M396 361.5h3m-1.5-1.5v3M398 370.5h3m-1.5-1.5v3M395 377.5h3m-1.5-1.5v3M395 358.5h3m-1.5-1.5v3M397 379.5h3m-1.5-1.5v3M396 358.5h3m-1.5-1.5v3M398 363.5h3m-1.5-1.5v3M398 357.5h3m-1.5-1.5v3M397 374.5h3m-1.5-1.5v3M394 364.5h3m-1.5-1.5v3M396 359.5h3m-1.5-1.5v3M396 369.5h3m-1.5-1.5v3M395 357.5h3m-1.5-1.5v3M398 360.5h3m-1.5-1.5v3M396 367.5h3m-1.5-1.5v3M398 367.5h3m-1.5-1.5v3M392 383.5h3m-1.5-1.5v3M392 393.5h3m-1.5-1.5v3M394 402.5h3m-1.5-1.5v3M392 417.5h3m-1.5-1.5v3M393 430.5h3m-1.5-1.5v3M397 383.5h3m-1.5-1.5v3M400 393.5h3m-1.5-1.5v3M400 405.5h3m-1.5-1.5v3M399 419.5h3m-1.5-1.5v3M398 434.5h3m-1.5-1.5v3M406 753.5h3m-1.5-1.5v3M406 743.5h3m-1.5-1.5v3M409 742.5h3m-1.5-1.5v3M407 753.5h3m-1.5-1.5v3M409 744.5h3m-1.5-1.5v3M408 750.5h3m-1.5-1.5v3M407 746.5h3m-1.5-1.5v3M409 747.5h3m-1.5-1.5v3M404 749.5h3m-1.5-1.5v3M404 741.5h3m-1.5-1.5v3M405 733.5h3m-1.5-1.5v3M405 723.5h3m-1.5-1.5v3M409 749.5h3m-1.5-1.5v3M409 740.5h3m-1.5-1.5v3M409 733.5h3m-1.5-1.5v3M408 725.5h3m-1.5-1.5v3M415 352.5h3m-1.5-1.5v3M416 348.5h3m-1.5-1.5v3M415 363.5h3m-1.5-1.5v3M414 348.5h3m-1.5-1.5v3M417 356.5h3m-1.5-1.5v3M417 354.5h3m-1.5-1.5v3M414 357.5h3m-1.5-1.5v3M417 369.5h3m-1.5-1.5v3M417 353.5h3m-1.5-1.5v3M416 359.5h3m-1.5-1.5v3M416 350.5h3m-1.5-1.5v3M415 368.5h3m-1.5-1.5v3M414 370.5h3m-1.5-1.5v3M417 362.5h3m-1.5-1.5v3M415 361.5h3m-1.5-1.5v3M417 350.5h3m-1.5-1.5v3M416 364.5h3m-1.5-1.5v3M415 349.5h3m-1.5-1.5v3M414 369.5h3m-1.5-1.5v3M414 355.5h3m-1.5-1.5v3M416 348.5h3m-1.5-1.5v3M415 355.5h3m-1.5-1.5v3M414 353.5h3m-1.5-1.5v3M417 348.5h3m-1.5-1.5v3M417 356.5h3m-1.5-1.5v3M415 350.5h3m-1.5-1.5v3M411 374.5h3m-1.5-1.5v3M411 386.5h3m-1.5-1.5v3M411 401.5h3m-1.5-1.5v3M412 413.5h3m-1.5-1.5v3M413 429.5h3m-1.5-1.5v3M419 374.5h3m-1.5-1.5v3M419 385.5h3m-1.5-1.5v3M419 396.5h3m-1.5-1.5v3M417 408.5h3m-1.5-1.5v3M418 423.5h3m-1.5-1.5v3M426 748.5h3m-1.5-1.5v3M425 745.5h3m-1.5-1.5v3M424 754.5h3m-1.5-1.5v3M427 755.5h3m-1.5-1.5v3M423 746.5h3m-1.5-1.5v3M426 754.5h3m-1.5-1.5v3M426 749.5h3m-1.5-1.5v3M424 752.5h3m-1.5-1.5v3M427 751.5h3m-1.5-1.5v3M423 751.5h3m-1.5-1.5v3M423 744.5h3m-1.5-1.5v3M423 735.5h3m-1.5-1.5v3M422 726.5h3m-1.5-1.5v3M426 751.5h3m-1.5-1.5v3M428 743.5h3m-1.5-1.5v3M426 735.5h3m-1.5-1.5v3M426 724.5h3m-1.5-1.5v3M433 363.5h3m-1.5-1.5v3M436 365.5h3m-1.5-1.5v3M433 375.5h3m-1.5-1.5v3M435 366.5h3m-1.5-1.5v3M434 361.5h3m-1.5-1.5v3M432 376.5h3m-1.5-1.5v3M435 354.5h3m-1.5-1.5v3M436 359.5h3m-1.5-1.5v3M436 364.5h3m-1.5-1.5v3M436 368.5h3m-1.5-1.5v3M436 366.5h3m-1.5-1.5v3M435 372.5h3m-1.5-1.5v3M435 366.5h3m-1.5-1.5v3M434 364.5h3m-1.5-1.5v3M433 359.5h3m-1.5-1.5v3M437 355.5h3m-1.5-1.5v3M435 364.5h3m-1.5-1.5v3M436 360.5h3m-1.5-1.5v3M437 375.5h3m-1.5-1.5v3M437 373.5h3m-1.5-1.5v3M436 371.5h3m-1.5-1.5v3M433 366.5h3m-1.5-1.5v3M436 359.5h3m-1.5-1.5v3M437 356.5h3m-1.5-1.5v3M436 379.5h3m-1.5-1.5v3M433 380.5h3m-1.5-1.5v3M431 393.5h3m-1.5-1.5v3M433 406.5h3m-1.5-1.5v3M431 420.5h3m-1.5-1.5v3M433 434.5h3m-1.5-1.5v3M436 380.5h3m-1.5-1.5v3M436 394.5h3m-1.5-1.5v3M437 406.5h3m-1.5-1.5v3M436 417.5h3m-1.5-1.5v3M438 429.5h3m-1.5-1.5v3M443 766.5h3m-1.5-1.5v3M446 768.5h3m-1.5-1.5v3M443 767.5h3m-1.5-1.5v3M446 766.5h3m-1.5-1.5v3M446 760.5h3m-1.5-1.5v3M446 767.5h3m-1.5-1.5v3M444 765.5h3m-1.5-1.5v3M442 762.5h3m-1.5-1.5v3M443 756.5h3m-1.5-1.5v3M444 747.5h3m-1.5-1.5v3M442 737.5h3m-1.5-1.5v3M448 762.5h3m-1.5-1.5v3M448 755.5h3m-1.5-1.5v3M447 745.5h3m-1.5-1.5v3M448 736.5h3m-1.5-1.5v3M454 365.5h3m-1.5-1.5v3M456 358.5h3m-1.5-1.5v3M454 368.5h3m-1.5-1.5v3M455 365.5h3m-1.5-1.5v3M456 361.5h3m-1.5-1.5v3M453 363.5h3m-1.5-1.5v3M455 353.5h3m-1.5-1.5v3M452 361.5h3m-1.5-1.5v3M454 356.5h3m-1.5-1.5v3M454 360.5h3m-1.5-1.5v3M453 357.5h3m-1.5-1.5v3M455 352.5h3m-1.5-1.5v3M453 355.5h3m-1.5-1.5v3M455 359.5h3m-1.5-1.5v3M454 365.5h3m-1.5-1.5v3M456 359.5h3m-1.5-1.5v3M456 373.5h3m-1.5-1.5v3M453 367.5h3m-1.5-1.5v3M455 370.5h3m-1.5-1.5v3M453 348.5h3m-1.5-1.5v3M456 352.5h3m-1.5-1.5v3M455 359.5h3m-1.5-1.5v3M457 361.5h3m-1.5-1.5v3M456 358.5h3m-1.5-1.5v3M454 364.5h3m-1.5-1.5v3M455 356.5h3m-1.5-1.5v3M454 370.5h3m-1.5-1.5v3M450 374.5h3m-1.5-1.5v3M453 388.5h3m-1.5-1.5v3M450 403.5h3m-1.5-1.5v3M453 419.5h3m-1.5-1.5v3M456 374.5h3m-1.5-1.5v3M456 387.5h3m-1.5-1.5v3M457 397.5h3m-1.5-1.5v3M457 411.5h3m-1.5-1.5v3M455 426.5h3m-1.5-1.5v3M462 759.5h3m-1.5-1.5v3M462 761.5h3m-1.5-1.5v3M464 763.5h3m-1.5-1.5v3M466 762.5h3m-1.5-1.5v3M463 765.5h3m-1.5-1.5v3M465 765.5h3m-1.5-1.5v3M464 761.5h3m-1.5-1.5v3M462 759.5h3m-1.5-1.5v3M462 753.5h3m-1.5-1.5v3M461 743.5h3m-1.5-1.5v3M462 735.5h3m-1.5-1.5v3M466 759.5h3m-1.5-1.5v3M465 751.5h3m-1.5-1.5v3M467 744.5h3m-1.5-1.5v3M466 736.5h3m-1.5-1.5v3M466 727.5h3m-1.5-1.5v3M471 356.5h3m-1.5-1.5v3M474 352.5h3m-1.5-1.5v3M473 366.5h3m-1.5-1.5v3M474 356.5h3m-1.5-1.5v3M474 354.5h3m-1.5-1.5v3M473 367.5h3m-1.5-1.5v3M475 377.5h3m-1.5-1.5v3M473 360.5h3m-1.5-1.5v3M474 370.5h3m-1.5-1.5v3M472 359.5h3m-1.5-1.5v3M473 376.5h3m-1.5-1.5v3M473 361.5h3m-1.5-1.5v3M473 364.5h3m-1.5-1.5v3M473 367.5h3m-1.5-1.5v3M475 355.5h3m-1.5-1.5v3M476 374.5h3m-1.5-1.5v3M475 357.5h3m-1.5-1.5v3M474 352.5h3m-1.5-1.5v3M474 362.5h3m-1.5-1.5v3M475 369.5h3m-1.5-1.5v3M473 371.5h3m-1.5-1.5v3M472 358.5h3m-1.5-1.5v3M475 360.5h3m-1.5-1.5v3M476 376.5h3m-1.5-1.5v3M473 361.5h3m-1.5-1.5v3M470 378.5h3m-1.5-1.5v3M471 387.5h3m-1.5-1.5v3M472 401.5h3m-1.5-1.5v3M472 417.5h3m-1.5-1.5v3M472 430.5h3m-1.5-1.5v3M475 378.5h3m-1.5-1.5v3M475 388.5h3m-1.5-1.5v3M474 399.5h3m-1.5-1.5v3M477 410.5h3m-1.5-1.5v3M476 425.5h3m-1.5-1.5v3M484 765.5h3m-1.5-1.5v3M484 761.5h3m-1.5-1.5v3M484 765.5h3m-1.5-1.5v3M482 765.5h3m-1.5-1.5v3M485 758.5h3m-1.5-1.5v3M482 764.5h3m-1.5-1.5v3M485 762.5h3m-1.5-1.5v3M481 761.5h3m-1.5-1.5v3M482 755.5h3m-1.5-1.5v3M481 759.5h3m-1.5-1.5v3M480 751.5h3m-1.5-1.5v3M480 744.5h3m-1.5-1.5v3M480 734.5h3m-1.5-1.5v3M485 759.5h3m-1.5-1.5v3M485 751.5h3m-1.5-1.5v3M484 743.5h3m-1.5-1.5v3M485 734.5h3m-1.5-1.5v3M493 366.5h3m-1.5-1.5v3M491 372.5h3m-1.5-1.5v3M491 370.5h3m-1.5-1.5v3M493 355.5h3m-1.5-1.5v3M493 370.5h3m-1.5-1.5v3M493 364.5h3m-1.5-1.5v3M493 356.5h3m-1.5-1.5v3M491 359.5h3m-1.5-1.5v3M493 378.5h3m-1.5-1.5v3M493 363.5h3m-1.5-1.5v3M493 377.5h3m-1.5-1.5v3M491 377.5h3m-1.5-1.5v3M490 363.5h3m-1.5-1.5v3M493 376.5h3m-1.5-1.5v3M491 377.5h3m-1.5-1.5v3M491 357.5h3m-1.5-1.5v3M493 375.5h3m-1.5-1.5v3M492 369.5h3m-1.5-1.5v3M493 367.5h3m-1.5-1.5v3M493 380.5h3m-1.5-1.5v3M494 356.5h3m-1.5-1.5v3M494 358.5h3m-1.5-1.5v3M490 356.5h3m-1.5-1.5v3M492 377.5h3m-1.5-1.5v3M495 366.5h3m-1.5-1.5v3M489 380.5h3m-1.5-1.5v3M489 392.5h3m-1.5-1.5v3M490 405.5h3m-1.5-1.5v3M489 419.5h3m-1.5-1.5v3M490 432.5h3m-1.5-1.5v3M496 380.5h3m-1.5-1.5v3M495 394.5h3m-1.5-1.5v3M494 406.5h3m-1.5-1.5v3M494 422.5h3m-1.5-1.5v3M495 437.5h3m-1.5-1.5v3M503 761.5h3m-1.5-1.5v3M503 755.5h3m-1.5-1.5v3M501 757.5h3m-1.5-1.5v3M503 752.5h3m-1.5-1.5v3M499 760.5h3m-1.5-1.5v3M502 760.5h3m-1.5-1.5v3M501 762.5h3m-1.5-1.5v3M500 760.5h3m-1.5-1.5v3M499 757.5h3m-1.5-1.5v3M498 749.5h3m-1.5-1.5v3M498 742.5h3m-1.5-1.5v3M498 733.5h3m-1.5-1.5v3M503 757.5h3m-1.5-1.5v3M504 749.5h3m-1.5-1.5v3M504 742.5h3m-1.5-1.5v3M502 733.5h3m-1.5-1.5v3M510 358.5h3m-1.5-1.5v3M506 374.5h3m-1.5-1.5v3M510 372.5h3m-1.5-1.5v3M509 366.5h3m-1.5-1.5v3M509 373.5h3m-1.5-1.5v3M510 380.5h3m-1.5-1.5v3M509 358.5h3m-1.5-1.5v3M508 371.5h3m-1.5-1.5v3M507 364.5h3m-1.5-1.5v3M508 374.5h3m-1.5-1.5v3M507 380.5h3m-1.5-1.5v3M508 358.5h3m-1.5-1.5v3M509 374.5h3m-1.5-1.5v3M508 370.5h3m-1.5-1.5v3M510 366.5h3m-1.5-1.5v3M509 372.5h3m-1.5-1.5v3M508 368.5h3m-1.5-1.5v3M506 366.5h3m-1.5-1.5v3M508 358.5h3m-1.5-1.5v3M508 370.5h3m-1.5-1.5v3M509 382.5h3m-1.5-1.5v3M508 358.5h3m-1.5-1.5v3M510 382.5h3m-1.5-1.5v3M507 362.5h3m-1.5-1.5v3M509 361.5h3m-1.5-1.5v3M507 362.5h3m-1.5-1.5v3M511 362.5h3m-1.5-1.5v3M510 358.5h3m-1.5-1.5v3M506 383.5h3m-1.5-1.5v3M504 394.5h3m-1.5-1.5v3M506 408.5h3m-1.5-1.5v3M504 421.5h3m-1.5-1.5v3M504 436.5h3m-1.5-1.5v3M512 383.5h3m-1.5-1.5v3M509 392.5h3m-1.5-1.5v3M511 404.5h3m-1.5-1.5v3M511 418.5h3m-1.5-1.5v3M511 430.5h3m-1.5-1.5v3M515 766.5h3m-1.5-1.5v3M516 759.5h3m-1.5-1.5v3M519 754.5h3m-1.5-1.5v3M517 765.5h3m-1.5-1.5v3M519 758.5h3m-1.5-1.5v3M519 766.5h3m-1.5-1.5v3M519 762.5h3m-1.5-1.5v3M518 766.5h3m-1.5-1.5v3M515 762.5h3m-1.5-1.5v3M514 754.5h3m-1.5-1.5v3M514 746.5h3m-1.5-1.5v3M514 736.5h3m-1.5-1.5v3M520 762.5h3m-1.5-1.5v3M518 756.5h3m-1.5-1.5v3M519 748.5h3m-1.5-1.5v3M520 741.5h3m-1.5-1.5v3M523 361.5h3m-1.5-1.5v3M522 365.5h3m-1.5-1.5v3M525 372.5h3m-1.5-1.5v3M525 374.5h3m-1.5-1.5v3M523 370.5h3m-1.5-1.5v3M523 361.5h3m-1.5-1.5v3M523 381.5h3m-1.5-1.5v3M526 370.5h3m-1.5-1.5v3M523 361.5h3m-1.5-1.5v3M523 370.5h3m-1.5-1.5v3M523 382.5h3m-1.5-1.5v3M525 364.5h3m-1.5-1.5v3M525 380.5h3m-1.5-1.5v3M523 378.5h3m-1.5-1.5v3M523 376.5h3m-1.5-1.5v3M524 382.5h3m-1.5-1.5v3M527 372.5h3m-1.5-1.5v3M524 368.5h3m-1.5-1.5v3M526 379.5h3m-1.5-1.5v3M526 371.5h3m-1.5-1.5v3M523 383.5h3m-1.5-1.5v3M526 374.5h3m-1.5-1.5v3M523 372.5h3m-1.5-1.5v3M524 360.5h3m-1.5-1.5v3M523 368.5h3m-1.5-1.5v3M522 385.5h3m-1.5-1.5v3M523 397.5h3m-1.5-1.5v3M522 407.5h3m-1.5-1.5v3M520 419.5h3m-1.5-1.5v3M521 436.5h3m-1.5-1.5v3M528 385.5h3m-1.5-1.5v3M527 397.5h3m-1.5-1.5v3M525 412.5h3m-1.5-1.5v3M526 426.5h3m-1.5-1.5v3M531 754.5h3m-1.5-1.5v3M535 766.5h3m-1.5-1.5v3M535 761.5h3m-1.5-1.5v3M535 764.5h3m-1.5-1.5v3M531 759.5h3m-1.5-1.5v3M535 764.5h3m-1.5-1.5v3M532 759.5h3m-1.5-1.5v3M530 760.5h3m-1.5-1.5v3M530 753.5h3m-1.5-1.5v3M532 744.5h3m-1.5-1.5v3M532 735.5h3m-1.5-1.5v3M535 760.5h3m-1.5-1.5v3M535 753.5h3m-1.5-1.5v3M535 745.5h3m-1.5-1.5v3M535 736.5h3m-1.5-1.5v3M539 362.5h3m-1.5-1.5v3M537 366.5h3m-1.5-1.5v3M538 371.5h3m-1.5-1.5v3M538 365.5h3m-1.5-1.5v3M538 378.5h3m-1.5-1.5v3M538 363.5h3m-1.5-1.5v3M540 366.5h3m-1.5-1.5v3M541 364.5h3m-1.5-1.5v3M541 372.5h3m-1.5-1.5v3M538 374.5h3m-1.5-1.5v3M540 372.5h3m-1.5-1.5v3M539 378.5h3m-1.5-1.5v3M538 376.5h3m-1.5-1.5v3M539 362.5h3m-1.5-1.5v3M540 379.5h3m-1.5-1.5v3M542 385.5h3m-1.5-1.5v3M538 365.5h3m-1.5-1.5v3M541 373.5h3m-1.5-1.5v3M542 383.5h3m-1.5-1.5v3M538 377.5h3m-1.5-1.5v3M542 365.5h3m-1.5-1.5v3M540 370.5h3m-1.5-1.5v3M542 363.5h3m-1.5-1.5v3M541 378.5h3m-1.5-1.5v3M540 383.5h3m-1.5-1.5v3M536 388.5h3m-1.5-1.5v3M535 400.5h3m-1.5-1.5v3M536 410.5h3m-1.5-1.5v3M535 425.5h3m-1.5-1.5v3M537 442.5h3m-1.5-1.5v3M543 388.5h3m-1.5-1.5v3M542 400.5h3m-1.5-1.5v3M543 412.5h3m-1.5-1.5v3M541 424.5h3m-1.5-1.5v3M543 437.5h3m-1.5-1.5v3M546 756.5h3m-1.5-1.5v3M548 753.5h3m-1.5-1.5v3M547 747.5h3m-1.5-1.5v3M547 760.5h3m-1.5-1.5v3M546 757.5h3m-1.5-1.5v3M545 753.5h3m-1.5-1.5v3M547 752.5h3m-1.5-1.5v3M549 759.5h3m-1.5-1.5v3M546 753.5h3m-1.5-1.5v3M546 746.5h3m-1.5-1.5v3M546 737.5h3m-1.5-1.5v3M544 729.5h3m-1.5-1.5v3M550 754.5h3m-1.5-1.5v3M548 748.5h3m-1.5-1.5v3M549 738.5h3m-1.5-1.5v3M548 728.5h3m-1.5-1.5v3M554 364.5h3m-1.5-1.5v3M556 379.5h3m-1.5-1.5v3M557 357.5h3m-1.5-1.5v3M553 376.5h3m-1.5-1.5v3M557 355.5h3m-1.5-1.5v3M557 357.5h3m-1.5-1.5v3M556 360.5h3m-1.5-1.5v3M555 369.5h3m-1.5-1.5v3M554 379.5h3m-1.5-1.5v3M555 368.5h3m-1.5-1.5v3M556 377.5h3m-1.5-1.5v3M555 359.5h3m-1.5-1.5v3M554 375.5h3m-1.5-1.5v3M555 359.5h3m-1.5-1.5v3M553 374.5h3m-1.5-1.5v3M554 356.5h3m-1.5-1.5v3M556 370.5h3m-1.5-1.5v3M557 362.5h3m-1.5-1.5v3M555 369.5h3m-1.5-1.5v3M555 361.5h3m-1.5-1.5v3M555 358.5h3m-1.5-1.5v3M554 371.5h3m-1.5-1.5v3M554 365.5h3m-1.5-1.5v3M554 372.5h3m-1.5-1.5v3M556 367.5h3m-1.5-1.5v3M558 355.5h3m-1.5-1.5v3M554 377.5h3m-1.5-1.5v3M557 355.5h3m-1.5-1.5v3M551 381.5h3m-1.5-1.5v3M553 390.5h3m-1.5-1.5v3M552 402.5h3m-1.5-1.5v3M551 413.5h3m-1.5-1.5v3M550 429.5h3m-1.5-1.5v3M557 381.5h3m-1.5-1.5v3M557 391.5h3m-1.5-1.5v3M559 401.5h3m-1.5-1.5v3M556 412.5h3m-1.5-1.5v3M558 423.5h3m-1.5-1.5v3M562 749.5h3m-1.5-1.5v3M561 746.5h3m-1.5-1.5v3M563 748.5h3m-1.5-1.5v3M564 741.5h3m-1.5-1.5v3M565 737.5h3m-1.5-1.5v3M564 747.5h3m-1.5-1.5v3M560 749.5h3m-1.5-1.5v3M565 742.5h3m-1.5-1.5v3M560 744.5h3m-1.5-1.5v3M560 738.5h3m-1.5-1.5v3M561 731.5h3m-1.5-1.5v3M560 722.5h3m-1.5-1.5v3M565 744.5h3m-1.5-1.5v3M564 738.5h3m-1.5-1.5v3M564 730.5h3m-1.5-1.5v3M565 721.5h3m-1.5-1.5v3M566 359.5h3m-1.5-1.5v3M567 372.5h3m-1.5-1.5v3M569 367.5h3m-1.5-1.5v3M568 365.5h3m-1.5-1.5v3M569 361.5h3m-1.5-1.5v3M566 373.5h3m-1.5-1.5v3M567 355.5h3m-1.5-1.5v3M569 373.5h3m-1.5-1.5v3M566 356.5h3m-1.5-1.5v3M568 369.5h3m-1.5-1.5v3M568 351.5h3m-1.5-1.5v3M570 361.5h3m-1.5-1.5v3M567 372.5h3m-1.5-1.5v3M568 357.5h3m-1.5-1.5v3M569 365.5h3m-1.5-1.5v3M566 355.5h3m-1.5-1.5v3M567 357.5h3m-1.5-1.5v3M565 360.5h3m-1.5-1.5v3M568 357.5h3m-1.5-1.5v3M570 373.5h3m-1.5-1.5v3M570 361.5h3m-1.5-1.5v3M569 373.5h3m-1.5-1.5v3M569 351.5h3m-1.5-1.5v3M568 354.5h3m-1.5-1.5v3M568 369.5h3m-1.5-1.5v3M570 370.5h3m-1.5-1.5v3M565 377.5h3m-1.5-1.5v3M565 387.5h3m-1.5-1.5v3M565 399.5h3m-1.5-1.5v3M563 412.5h3m-1.5-1.5v3M565 426.5h3m-1.5-1.5v3M570 377.5h3m-1.5-1.5v3M571 388.5h3m-1.5-1.5v3M569 400.5h3m-1.5-1.5v3M569 412.5h3m-1.5-1.5v3M572 425.5h3m-1.5-1.5v3M577 714.5h3m-1.5-1.5v3M574 725.5h3m-1.5-1.5v3M575 723.5h3m-1.5-1.5v3M575 727.5h3m-1.5-1.5v3M577 716.5h3m-1.5-1.5v3M575 724.5h3m-1.5-1.5v3M575 721.5h3m-1.5-1.5v3M574 718.5h3m-1.5-1.5v3M574 724.5h3m-1.5-1.5v3M572 721.5h3m-1.5-1.5v3M574 713.5h3m-1.5-1.5v3M573 705.5h3m-1.5-1.5v3M573 697.5h3m-1.5-1.5v3M577 721.5h3m-1.5-1.5v3M576 714.5h3m-1.5-1.5v3M577 707.5h3m-1.5-1.5v3M578 698.5h3m-1.5-1.5v3M582 351.5h3m-1.5-1.5v3M581 365.5h3m-1.5-1.5v3M582 367.5h3m-1.5-1.5v3M580 371.5h3m-1.5-1.5v3M582 367.5h3m-1.5-1.5v3M583 356.5h3m-1.5-1.5v3M582 346.5h3m-1.5-1.5v3M584 356.5h3m-1.5-1.5v3M584 354.5h3m-1.5-1.5v3M580 371.5h3m-1.5-1.5v3M582 348.5h3m-1.5-1.5v3M584 372.5h3m-1.5-1.5v3M580 352.5h3m-1.5-1.5v3M583 354.5h3m-1.5-1.5v3M581 357.5h3m-1.5-1.5v3M583 360.5h3m-1.5-1.5v3M584 364.5h3m-1.5-1.5v3M582 360.5h3m-1.5-1.5v3M584 371.5h3m-1.5-1.5v3M582 349.5h3m-1.5-1.5v3M579 350.5h3m-1.5-1.5v3M582 358.5h3m-1.5-1.5v3M584 349.5h3m-1.5-1.5v3M579 372.5h3m-1.5-1.5v3M578 381.5h3m-1.5-1.5v3M578 396.5h3m-1.5-1.5v3M578 409.5h3m-1.5-1.5v3M577 425.5h3m-1.5-1.5v3M584 372.5h3m-1.5-1.5v3M584 383.5h3m-1.5-1.5v3M582 393.5h3m-1.5-1.5v3M584 408.5h3m-1.5-1.5v3M582 421.5h3m-1.5-1.5v3M589 755.5h3m-1.5-1.5v3M591 752.5h3m-1.5-1.5v3M589 755.5h3m-1.5-1.5v3M587 760.5h3m-1.5-1.5v3M589 755.5h3m-1.5-1.5v3M590 749.5h3m-1.5-1.5v3M588 758.5h3m-1.5-1.5v3M587 751.5h3m-1.5-1.5v3M587 755.5h3m-1.5-1.5v3M588 747.5h3m-1.5-1.5v3M587 739.5h3m-1.5-1.5v3M587 730.5h3m-1.5-1.5v3M591 755.5h3m-1.5-1.5v3M591 747.5h3m-1.5-1.5v3M591 741.5h3m-1.5-1.5v3M590 732.5h3m-1.5-1.5v3M593 354.5h3m-1.5-1.5v3M595 353.5h3m-1.5-1.5v3M594 345.5h3m-1.5-1.5v3M593 364.5h3m-1.5-1.5v3M594 349.5h3m-1.5-1.5v3M593 360.5h3m-1.5-1.5v3M592 364.5h3m-1.5-1.5v3M594 364.5h3m-1.5-1.5v3M593 349.5h3m-1.5-1.5v3M594 347.5h3m-1.5-1.5v3M591 363.5h3m-1.5-1.5v3M593 344.5h3m-1.5-1.5v3M595 347.5h3m-1.5-1.5v3M592 356.5h3m-1.5-1.5v3M595 352.5h3m-1.5-1.5v3M595 361.5h3m-1.5-1.5v3M595 357.5h3m-1.5-1.5v3M595 367.5h3m-1.5-1.5v3M595 342.5h3m-1.5-1.5v3M597 358.5h3m-1.5-1.5v3M595 349.5h3m-1.5-1.5v3M593 346.5h3m-1.5-1.5v3M596 351.5h3m-1.5-1.5v3M591 368.5h3m-1.5-1.5v3M590 381.5h3m-1.5-1.5v3M592 392.5h3m-1.5-1.5v3M591 405.5h3m-1.5-1.5v3M590 417.5h3m-1.5-1.5v3M596 368.5h3m-1.5-1.5v3M594 377.5h3m-1.5-1.5v3M597 391.5h3m-1.5-1.5v3M596 404.5h3m-1.5-1.5v3M596 417.5h3m-1.5-1.5v3M600 737.5h3m-1.5-1.5v3M598 734.5h3m-1.5-1.5v3M600 745.5h3m-1.5-1.5v3M599 736.5h3m-1.5-1.5v3M601 738.5h3m-1.5-1.5v3M602 733.5h3m-1.5-1.5v3M599 744.5h3m-1.5-1.5v3M601 736.5h3m-1.5-1.5v3M598 739.5h3m-1.5-1.5v3M597 732.5h3m-1.5-1.5v3M599 725.5h3m-1.5-1.5v3M599 715.5h3m-1.5-1.5v3M601 739.5h3m-1.5-1.5v3M602 732.5h3m-1.5-1.5v3M601 725.5h3m-1.5-1.5v3M601 716.5h3m-1.5-1.5v3M606 370.5h3m-1.5-1.5v3M605 350.5h3m-1.5-1.5v3M608 366.5h3m-1.5-1.5v3M604 366.5h3m-1.5-1.5v3M607 358.5h3m-1.5-1.5v3M606 368.5h3m-1.5-1.5v3M606 372.5h3m-1.5-1.5v3M607 357.5h3m-1.5-1.5v3M607 359.5h3m-1.5-1.5v3M607 354.5h3m-1.5-1.5v3M605 367.5h3m-1.5-1.5v3M607 357.5h3m-1.5-1.5v3M606 352.5h3m-1.5-1.5v3M607 355.5h3m-1.5-1.5v3M608 351.5h3m-1.5-1.5v3M607 373.5h3m-1.5-1.5v3M605 355.5h3m-1.5-1.5v3M606 357.5h3m-1.5-1.5v3M605 374.5h3m-1.5-1.5v3M607 363.5h3m-1.5-1.5v3M605 367.5h3m-1.5-1.5v3M604 373.5h3m-1.5-1.5v3M606 364.5h3m-1.5-1.5v3M606 374.5h3m-1.5-1.5v3M606 357.5h3m-1.5-1.5v3M608 357.5h3m-1.5-1.5v3M608 373.5h3m-1.5-1.5v3M605 376.5h3m-1.5-1.5v3M603 389.5h3m-1.5-1.5v3M604 400.5h3m-1.5-1.5v3M602 414.5h3m-1.5-1.5v3M604 430.5h3m-1.5-1.5v3M610 376.5h3m-1.5-1.5v3M609 387.5h3m-1.5-1.5v3M607 397.5h3m-1.5-1.5v3M608 408.5h3m-1.5-1.5v3M609 423.5h3m-1.5-1.5v3M613 735.5h3m-1.5-1.5v3M611 729.5h3m-1.5-1.5v3M615 735.5h3m-1.5-1.5v3M613 735.5h3m-1.5-1.5v3M610 722.5h3m-1.5-1.5v3M614 726.5h3m-1.5-1.5v3M613 736.5h3m-1.5-1.5v3M612 722.5h3m-1.5-1.5v3M612 728.5h3m-1.5-1.5v3M610 730.5h3m-1.5-1.5v3M611 722.5h3m-1.5-1.5v3M610 713.5h3m-1.5-1.5v3M612 704.5h3m-1.5-1.5v3M614 730.5h3m-1.5-1.5v3M614 724.5h3m-1.5-1.5v3M614 716.5h3m-1.5-1.5v3M615 706.5h3m-1.5-1.5v3M618 344.5h3m-1.5-1.5v3M617 365.5h3m-1.5-1.5v3M619 362.5h3m-1.5-1.5v3M618 346.5h3m-1.5-1.5v3M616 358.5h3m-1.5-1.5v3M617 344.5h3m-1.5-1.5v3M618 365.5h3m-1.5-1.5v3M616 354.5h3m-1.5-1.5v3M619 357.5h3m-1.5-1.5v3M617 348.5h3m-1.5-1.5v3M620 343.5h3m-1.5-1.5v3M618 345.5h3m-1.5-1.5v3M620 362.5h3m-1.5-1.5v3M619 352.5h3m-1.5-1.5v3M620 362.5h3m-1.5-1.5v3M619 364.5h3m-1.5-1.5v3M617 364.5h3m-1.5-1.5v3M618 361.5h3m-1.5-1.5v3M616 363.5h3m-1.5-1.5v3M619 352.5h3m-1.5-1.5v3M617 352.5h3m-1.5-1.5v3M618 354.5h3m-1.5-1.5v3M619 350.5h3m-1.5-1.5v3M619 353.5h3m-1.5-1.5v3M620 348.5h3m-1.5-1.5v3M618 365.5h3m-1.5-1.5v3M619 368.5h3m-1.5-1.5v3M614 369.5h3m-1.5-1.5v3M615 381.5h3m-1.5-1.5v3M614 396.5h3m-1.5-1.5v3M617 410.5h3m-1.5-1.5v3M614 425.5h3m-1.5-1.5v3M622 369.5h3m-1.5-1.5v3M620 380.5h3m-1.5-1.5v3M620 393.5h3m-1.5-1.5v3M621 405.5h3m-1.5-1.5v3M619 417.5h3m-1.5-1.5v3M625 723.5h3m-1.5-1.5v3M627 713.5h3m-1.5-1.5v3M623 721.5h3m-1.5-1.5v3M624 717.5h3m-1.5-1.5v3M627 718.5h3m-1.5-1.5v3M625 715.5h3m-1.5-1.5v3M622 718.5h3m-1.5-1.5v3M622 710.5h3m-1.5-1.5v3M623 703.5h3m-1.5-1.5v3M624 694.5h3m-1.5-1.5v3M626 718.5h3m-1.5-1.5v3M628 711.5h3m-1.5-1.5v3M627 704.5h3m-1.5-1.5v3M627 696.5h3m-1.5-1.5v3M626 687.5h3m-1.5-1.5v3M629 370.5h3m-1.5-1.5v3M630 364.5h3m-1.5-1.5v3M627 365.5h3m-1.5-1.5v3M630 371.5h3m-1.5-1.5v3M628 372.5h3m-1.5-1.5v3M631 361.5h3m-1.5-1.5v3M628 365.5h3m-1.5-1.5v3M630 356.5h3m-1.5-1.5v3M629 371.5h3m-1.5-1.5v3M629 356.5h3m-1.5-1.5v3M631 378.5h3m-1.5-1.5v3M629 354.5h3m-1.5-1.5v3M629 360.5h3m-1.5-1.5v3M631 354.5h3m-1.5-1.5v3M631 367.5h3m-1.5-1.5v3M630 356.5h3m-1.5-1.5v3M630 361.5h3m-1.5-1.5v3M629 357.5h3m-1.5-1.5v3M628 361.5h3m-1.5-1.5v3M631 375.5h3m-1.5-1.5v3M630 365.5h3m-1.5-1.5v3M631 355.5h3m-1.5-1.5v3M631 360.5h3m-1.5-1.5v3M630 355.5h3m-1.5-1.5v3M626 379.5h3m-1.5-1.5v3M627 392.5h3m-1.5-1.5v3M627 401.5h3m-1.5-1.5v3M626 414.5h3m-1.5-1.5v3M628 427.5h3m-1.5-1.5v3M632 379.5h3m-1.5-1.5v3M632 390.5h3m-1.5-1.5v3M632 399.5h3m-1.5-1.5v3M631 415.5h3m-1.5-1.5v3M633 428.5h3m-1.5-1.5v3M637 756.5h3m-1.5-1.5v3M636 754.5h3m-1.5-1.5v3M635 752.5h3m-1.5-1.5v3M636 759.5h3m-1.5-1.5v3M634 752.5h3m-1.5-1.5v3M638 750.5h3m-1.5-1.5v3M637 748.5h3m-1.5-1.5v3M638 755.5h3m-1.5-1.5v3M634 755.5h3m-1.5-1.5v3M635 749.5h3m-1.5-1.5v3M634 742.5h3m-1.5-1.5v3M634 732.5h3m-1.5-1.5v3M637 755.5h3m-1.5-1.5v3M638 747.5h3m-1.5-1.5v3M638 740.5h3m-1.5-1.5v3M638 730.5h3m-1.5-1.5v3M643 349.5h3m-1.5-1.5v3M644 357.5h3m-1.5-1.5v3M644 350.5h3m-1.5-1.5v3M645 355.5h3m-1.5-1.5v3M643 351.5h3m-1.5-1.5v3M645 357.5h3m-1.5-1.5v3M644 361.5h3m-1.5-1.5v3M642 342.5h3m-1.5-1.5v3M644 357.5h3m-1.5-1.5v3M644 343.5h3m-1.5-1.5v3M645 338.5h3m-1.5-1.5v3M646 355.5h3m-1.5-1.5v3M645 353.5h3m-1.5-1.5v3M644 347.5h3m-1.5-1.5v3M646 354.5h3m-1.5-1.5v3M644 337.5h3m-1.5-1.5v3M645 345.5h3m-1.5-1.5v3M645 339.5h3m-1.5-1.5v3M644 345.5h3m-1.5-1.5v3M645 352.5h3m-1.5-1.5v3M645 344.5h3m-1.5-1.5v3M643 339.5h3m-1.5-1.5v3M644 342.5h3m-1.5-1.5v3M645 339.5h3m-1.5-1.5v3M644 352.5h3m-1.5-1.5v3M643 342.5h3m-1.5-1.5v3M644 360.5h3m-1.5-1.5v3M641 361.5h3m-1.5-1.5v3M642 370.5h3m-1.5-1.5v3M640 380.5h3m-1.5-1.5v3M642 394.5h3m-1.5-1.5v3M641 408.5h3m-1.5-1.5v3M647 361.5h3m-1.5-1.5v3M647 374.5h3m-1.5-1.5v3M647 386.5h3m-1.5-1.5v3M648 403.5h3m-1.5-1.5v3M647 418.5h3m-1.5-1.5v3M331 563.5h3m-1.5-1.5v3M333 584.5h3m-1.5-1.5v3M334 541.5h3m-1.5-1.5v3M331 576.5h3m-1.5-1.5v3M333 550.5h3m-1.5-1.5v3M330 525.5h3m-1.5-1.5v3M326 592.5h3m-1.5-1.5v3M333 571.5h3m-1.5-1.5v3M329 590.5h3m-1.5-1.5v3M334 521.5h3m-1.5-1.5v3M337 656.5h3m-1.5-1.5v3M339 553.5h3m-1.5-1.5v3M337 457.5h3m-1.5-1.5v3M340 502.5h3m-1.5-1.5v3M337 613.5h3m-1.5-1.5v3M347 595.5h3m-1.5-1.5v3M341 676.5h3m-1.5-1.5v3M340 448.5h3m-1.5-1.5v3M339 458.5h3m-1.5-1.5v3M343 567.5h3m-1.5-1.5v3M347 582.5h3m-1.5-1.5v3M355 556.5h3m-1.5-1.5v3M349 484.5h3m-1.5-1.5v3M349 626.5h3m-1.5-1.5v3M350 622.5h3m-1.5-1.5v3M350 687.5h3m-1.5-1.5v3M350 625.5h3m-1.5-1.5v3M352 522.5h3m-1.5-1.5v3M348 458.5h3m-1.5-1.5v3M347 444.5h3m-1.5-1.5v3M358 626.5h3m-1.5-1.5v3M362 538.5h3m-1.5-1.5v3M360 705.5h3m-1.5-1.5v3M362 460.5h3m-1.5-1.5v3M356 534.5h3m-1.5-1.5v3M359 483.5h3m-1.5-1.5v3M367 599.5h3m-1.5-1.5v3M364 444.5h3m-1.5-1.5v3M365 594.5h3m-1.5-1.5v3M366 582.5h3m-1.5-1.5v3M374 517.5h3m-1.5-1.5v3M372 620.5h3m-1.5-1.5v3M371 511.5h3m-1.5-1.5v3M369 504.5h3m-1.5-1.5v3M371 573.5h3m-1.5-1.5v3M375 456.5h3m-1.5-1.5v3M369 645.5h3m-1.5-1.5v3M371 622.5h3m-1.5-1.5v3M370 590.5h3m-1.5-1.5v3M369 703.5h3m-1.5-1.5v3M377 489.5h3m-1.5-1.5v3M382 631.5h3m-1.5-1.5v3M382 591.5h3m-1.5-1.5v3M381 565.5h3m-1.5-1.5v3M384 681.5h3m-1.5-1.5v3M384 690.5h3m-1.5-1.5v3M376 695.5h3m-1.5-1.5v3M386 650.5h3m-1.5-1.5v3M383 685.5h3m-1.5-1.5v3M385 564.5h3m-1.5-1.5v3M385 519.5h3m-1.5-1.5v3M389 675.5h3m-1.5-1.5v3M391 705.5h3m-1.5-1.5v3M397 545.5h3m-1.5-1.5v3M394 594.5h3m-1.5-1.5v3M395 525.5h3m-1.5-1.5v3M394 702.5h3m-1.5-1.5v3M394 465.5h3m-1.5-1.5v3M397 634.5h3m-1.5-1.5v3M393 606.5h3m-1.5-1.5v3M396 625.5h3m-1.5-1.5v3M404 663.5h3m-1.5-1.5v3M399 470.5h3m-1.5-1.5v3M399 589.5h3m-1.5-1.5v3M397 596.5h3m-1.5-1.5v3M406 620.5h3m-1.5-1.5v3M404 511.5h3m-1.5-1.5v3M402 630.5h3m-1.5-1.5v3M408 527.5h3m-1.5-1.5v3M400 708.5h3m-1.5-1.5v3M409 627.5h3m-1.5-1.5v3M411 522.5h3m-1.5-1.5v3M409 699.5h3m-1.5-1.5v3M417 603.5h3m-1.5-1.5v3M409 563.5h3m-1.5-1.5v3M406 603.5h3m-1.5-1.5v3M407 571.5h3m-1.5-1.5v3M412 590.5h3m-1.5-1.5v3M408 628.5h3m-1.5-1.5v3M408 530.5h3m-1.5-1.5v3M423 591.5h3m-1.5-1.5v3M421 610.5h3m-1.5-1.5v3M414 457.5h3m-1.5-1.5v3M416 684.5h3m-1.5-1.5v3M413 482.5h3m-1.5-1.5v3M415 631.5h3m-1.5-1.5v3M421 648.5h3m-1.5-1.5v3M419 692.5h3m-1.5-1.5v3M421 497.5h3m-1.5-1.5v3M423 538.5h3m-1.5-1.5v3M424 553.5h3m-1.5-1.5v3M432 564.5h3m-1.5-1.5v3M426 476.5h3m-1.5-1.5v3M429 684.5h3m-1.5-1.5v3M427 651.5h3m-1.5-1.5v3M426 658.5h3m-1.5-1.5v3M435 593.5h3m-1.5-1.5v3M427 625.5h3m-1.5-1.5v3M432 528.5h3m-1.5-1.5v3M427 660.5h3m-1.5-1.5v3M446 586.5h3m-1.5-1.5v3M439 612.5h3m-1.5-1.5v3M436 560.5h3m-1.5-1.5v3M434 518.5h3m-1.5-1.5v3M445 561.5h3m-1.5-1.5v3M443 601.5h3m-1.5-1.5v3M442 596.5h3m-1.5-1.5v3M434 498.5h3m-1.5-1.5v3M444 586.5h3m-1.5-1.5v3M443 552.5h3m-1.5-1.5v3M453 468.5h3m-1.5-1.5v3M448 622.5h3m-1.5-1.5v3M450 704.5h3m-1.5-1.5v3M445 620.5h3m-1.5-1.5v3M451 616.5h3m-1.5-1.5v3M450 515.5h3m-1.5-1.5v3M447 572.5h3m-1.5-1.5v3M452 498.5h3m-1.5-1.5v3M452 595.5h3m-1.5-1.5v3M453 483.5h3m-1.5-1.5v3M457 577.5h3m-1.5-1.5v3M460 625.5h3m-1.5-1.5v3M460 503.5h3m-1.5-1.5v3M457 503.5h3m-1.5-1.5v3M460 656.5h3m-1.5-1.5v3M460 599.5h3m-1.5-1.5v3M464 598.5h3m-1.5-1.5v3M456 687.5h3m-1.5-1.5v3M459 496.5h3m-1.5-1.5v3M456 495.5h3m-1.5-1.5v3M470 629.5h3m-1.5-1.5v3M465 713.5h3m-1.5-1.5v3M466 482.5h3m-1.5-1.5v3M471 661.5h3m-1.5-1.5v3M467 664.5h3m-1.5-1.5v3M474 573.5h3m-1.5-1.5v3M467 581.5h3m-1.5-1.5v3M466 530.5h3m-1.5-1.5v3M465 710.5h3m-1.5-1.5v3M465 692.5h3m-1.5-1.5v3M473 510.5h3m-1.5-1.5v3M479 500.5h3m-1.5-1.5v3M478 710.5h3m-1.5-1.5v3M475 542.5h3m-1.5-1.5v3M478 674.5h3m-1.5-1.5v3M473 586.5h3m-1.5-1.5v3M478 571.5h3m-1.5-1.5v3M477 532.5h3m-1.5-1.5v3M481 458.5h3m-1.5-1.5v3M478 635.5h3m-1.5-1.5v3M490 637.5h3m-1.5-1.5v3M484 720.5h3m-1.5-1.5v3M484 512.5h3m-1.5-1.5v3M490 504.5h3m-1.5-1.5v3M485 642.5h3m-1.5-1.5v3M488 715.5h3m-1.5-1.5v3M491 456.5h3m-1.5-1.5v3M493 581.5h3m-1.5-1.5v3M487 498.5h3m-1.5-1.5v3M489 455.5h3m-1.5-1.5v3M498 524.5h3m-1.5-1.5v3M500 668.5h3m-1.5-1.5v3M491 656.5h3m-1.5-1.5v3M496 693.5h3m-1.5-1.5v3M495 553.5h3m-1.5-1.5v3M496 470.5h3m-1.5-1.5v3M497 465.5h3m-1.5-1.5v3M503 470.5h3m-1.5-1.5v3M502 512.5h3m-1.5-1.5v3M496 504.5h3m-1.5-1.5v3M502 673.5h3m-1.5-1.5v3M505 706.5h3m-1.5-1.5v3M509 559.5h3m-1.5-1.5v3M507 699.5h3m-1.5-1.5v3M509 578.5h3m-1.5-1.5v3M506 491.5h3m-1.5-1.5v3M508 523.5h3m-1.5-1.5v3M505 653.5h3m-1.5-1.5v3M505 610.5h3m-1.5-1.5v3M502 575.5h3m-1.5-1.5v3M510 603.5h3m-1.5-1.5v3M508 463.5h3m-1.5-1.5v3M516 620.5h3m-1.5-1.5v3M511 562.5h3m-1.5-1.5v3M511 525.5h3m-1.5-1.5v3M517 663.5h3m-1.5-1.5v3M518 659.5h3m-1.5-1.5v3M511 493.5h3m-1.5-1.5v3M516 602.5h3m-1.5-1.5v3M524 572.5h3m-1.5-1.5v3M517 475.5h3m-1.5-1.5v3M524 502.5h3m-1.5-1.5v3M517 510.5h3m-1.5-1.5v3M524 506.5h3m-1.5-1.5v3M522 582.5h3m-1.5-1.5v3M521 485.5h3m-1.5-1.5v3M521 544.5h3m-1.5-1.5v3M520 458.5h3m-1.5-1.5v3M519 546.5h3m-1.5-1.5v3M524 479.5h3m-1.5-1.5v3M529 727.5h3m-1.5-1.5v3M532 654.5h3m-1.5-1.5v3M526 511.5h3m-1.5-1.5v3M529 524.5h3m-1.5-1.5v3M526 466.5h3m-1.5-1.5v3M532 657.5h3m-1.5-1.5v3M526 507.5h3m-1.5-1.5v3M525 647.5h3m-1.5-1.5v3M532 722.5h3m-1.5-1.5v3M536 622.5h3m-1.5-1.5v3M535 594.5h3m-1.5-1.5v3M532 492.5h3m-1.5-1.5v3M539 718.5h3m-1.5-1.5v3M538 651.5h3m-1.5-1.5v3M531 623.5h3m-1.5-1.5v3M533 461.5h3m-1.5-1.5v3M536 501.5h3m-1.5-1.5v3M536 537.5h3m-1.5-1.5v3M533 621.5h3m-1.5-1.5v3M538 694.5h3m-1.5-1.5v3M546 566.5h3m-1.5-1.5v3M543 481.5h3m-1.5-1.5v3M544 649.5h3m-1.5-1.5v3M541 656.5h3m-1.5-1.5v3M541 495.5h3m-1.5-1.5v3M544 461.5h3m-1.5-1.5v3M541 681.5h3m-1.5-1.5v3M539 556.5h3m-1.5-1.5v3M544 592.5h3m-1.5-1.5v3M546 623.5h3m-1.5-1.5v3M552 590.5h3m-1.5-1.5v3M554 620.5h3m-1.5-1.5v3M551 550.5h3m-1.5-1.5v3M553 633.5h3m-1.5-1.5v3M554 623.5h3m-1.5-1.5v3M547 479.5h3m-1.5-1.5v3M553 699.5h3m-1.5-1.5v3M552 565.5h3m-1.5-1.5v3M550 703.5h3m-1.5-1.5v3M559 698.5h3m-1.5-1.5v3M557 596.5h3m-1.5-1.5v3M562 620.5h3m-1.5-1.5v3M560 676.5h3m-1.5-1.5v3M553 645.5h3m-1.5-1.5v3M557 630.5h3m-1.5-1.5v3M557 490.5h3m-1.5-1.5v3M562 558.5h3m-1.5-1.5v3M554 530.5h3m-1.5-1.5v3M556 659.5h3m-1.5-1.5v3M562 463.5h3m-1.5-1.5v3M563 522.5h3m-1.5-1.5v3M560 462.5h3m-1.5-1.5v3M564 525.5h3m-1.5-1.5v3M564 591.5h3m-1.5-1.5v3M566 614.5h3m-1.5-1.5v3M566 489.5h3m-1.5-1.5v3M564 681.5h3m-1.5-1.5v3M563 456.5h3m-1.5-1.5v3M562 695.5h3m-1.5-1.5v3M574 564.5h3m-1.5-1.5v3M571 515.5h3m-1.5-1.5v3M570 537.5h3m-1.5-1.5v3M573 494.5h3m-1.5-1.5v3M570 469.5h3m-1.5-1.5v3M572 516.5h3m-1.5-1.5v3M567 483.5h3m-1.5-1.5v3M575 620.5h3m-1.5-1.5v3M569 529.5h3m-1.5-1.5v3M574 681.5h3m-1.5-1.5v3M582 488.5h3m-1.5-1.5v3M578 474.5h3m-1.5-1.5v3M582 574.5h3m-1.5-1.5v3M574 634.5h3m-1.5-1.5v3M581 617.5h3m-1.5-1.5v3M578 621.5h3m-1.5-1.5v3M584 593.5h3m-1.5-1.5v3M579 568.5h3m-1.5-1.5v3M576 568.5h3m-1.5-1.5v3M578 483.5h3m-1.5-1.5v3M585 586.5h3m-1.5-1.5v3M586 516.5h3m-1.5-1.5v3M585 541.5h3m-1.5-1.5v3M585 545.5h3m-1.5-1.5v3M588 705.5h3m-1.5-1.5v3M587 602.5h3m-1.5-1.5v3M589 664.5h3m-1.5-1.5v3M586 460.5h3m-1.5-1.5v3M590 586.5h3m-1.5-1.5v3M589 630.5h3m-1.5-1.5v3M589 442.5h3m-1.5-1.5v3M589 596.5h3m-1.5-1.5v3M593 676.5h3m-1.5-1.5v3M593 617.5h3m-1.5-1.5v3M594 612.5h3m-1.5-1.5v3M588 440.5h3m-1.5-1.5v3M591 692.5h3m-1.5-1.5v3M589 519.5h3m-1.5-1.5v3M592 498.5h3m-1.5-1.5v3M594 477.5h3m-1.5-1.5v3M593 497.5h3m-1.5-1.5v3M597 469.5h3m-1.5-1.5v3M600 493.5h3m-1.5-1.5v3M597 707.5h3m-1.5-1.5v3M598 619.5h3m-1.5-1.5v3M596 603.5h3m-1.5-1.5v3M596 639.5h3m-1.5-1.5v3M592 534.5h3m-1.5-1.5v3M599 585.5h3m-1.5-1.5v3M594 702.5h3m-1.5-1.5v3M599 604.5h3m-1.5-1.5v3M604 705.5h3m-1.5-1.5v3M598 495.5h3m-1.5-1.5v3M604 503.5h3m-1.5-1.5v3M608 672.5h3m-1.5-1.5v3M606 528.5h3m-1.5-1.5v3M605 485.5h3m-1.5-1.5v3M601 473.5h3m-1.5-1.5v3M599 571.5h3m-1.5-1.5v3M603 447.5h3m-1.5-1.5v3M611 523.5h3m-1.5-1.5v3M610 549.5h3m-1.5-1.5v3M611 504.5h3m-1.5-1.5v3M609 483.5h3m-1.5-1.5v3M610 666.5h3m-1.5-1.5v3M608 542.5h3m-1.5-1.5v3M606 659.5h3m-1.5-1.5v3M610 681.5h3m-1.5-1.5v3M607 554.5h3m-1.5-1.5v3M613 646.5h3m-1.5-1.5v3M616 485.5h3m-1.5-1.5v3M616 464.5h3m-1.5-1.5v3M617 439.5h3m-1.5-1.5v3M612 533.5h3m-1.5-1.5v3M610 538.5h3m-1.5-1.5v3M616 606.5h3m-1.5-1.5v3M615 682.5h3m-1.5-1.5v3M617 564.5h3m-1.5-1.5v3M614 544.5h3m-1.5-1.5v3M617 593.5h3m-1.5-1.5v3M618 446.5h3m-1.5-1.5v3M627 529.5h3m-1.5-1.5v3M621 521.5h3m-1.5-1.5v3M619 449.5h3m-1.5-1.5v3M625 580.5h3m-1.5-1.5v3M620 487.5h3m-1.5-1.5v3M624 497.5h3m-1.5-1.5v3M618 642.5h3m-1.5-1.5v3M619 659.5h3m-1.5-1.5v3M623 543.5h3m-1.5-1.5v3M625 603.5h3m-1.5-1.5v3M627 533.5h3m-1.5-1.5v3M630 552.5h3m-1.5-1.5v3M631 476.5h3m-1.5-1.5v3M624 556.5h3m-1.5-1.5v3M624 473.5h3m-1.5-1.5v3M628 581.5h3m-1.5-1.5v3M623 559.5h3m-1.5-1.5v3M630 588.5h3m-1.5-1.5v3M624 596.5h3m-1.5-1.5v3M634 557.5h3m-1.5-1.5v3M634 676.5h3m-1.5-1.5v3M633 579.5h3m-1.5-1.5v3M629 647.5h3m-1.5-1.5v3M628 569.5h3m-1.5-1.5v3M634 590.5h3m-1.5-1.5v3M633 529.5h3m-1.5-1.5v3M628 598.5h3m-1.5-1.5v3M635 475.5h3m-1.5-1.5v3M632 457.5h3m-1.5-1.5v3M641 619.5h3m-1.5-1.5v3M637 501.5h3m-1.5-1.5v3M633 681.5h3m-1.5-1.5v3M636 587.5h3m-1.5-1.5v3M640 652.5h3m-1.5-1.5v3M640 506.5h3m-1.5-1.5v3M637 611.5h3m-1.5-1.5v3M639 518.5h3m-1.5-1.5v3M639 633.5h3m-1.5-1.5v3M639 631.5h3m-1.5-1.5v3M646 453.5h3m-1.5-1.5v3M650 538.5h3m-1.5-1.5v3M644 491.5h3m-1.5-1.5v3M644 518.5h3m-1.5-1.5v3M644 488.5h3m-1.5-1.5v3M645 498.5h3m-1.5-1.5v3M649 620.5h3m-1.5-1.5v3M645 486.5h3m-1.5-1.5v3M646 539.5h3m-1.5-1.5v3M649 457.5h3m-1.5-1.5v3M647 743.5h3m-1.5-1.5v3M647 751.5h3m-1.5-1.5v3M647 755.5h3m-1.5-1.5v3M648 762.5h3m-1.5-1.5v3M648 769.5h3m-1.5-1.5v3M648 773.5h3m-1.5-1.5v3M648 778.5h3m-1.5-1.5v3M649 781.5h3m-1.5-1.5v3M649 785.5h3m-1.5-1.5v3M650 787.5h3m-1.5-1.5v3M650 784.5h3m-1.5-1.5v3M650 787.5h3m-1.5-1.5v3M651 785.5h3m-1.5-1.5v3M651 789.5h3m-1.5-1.5v3M652 786.5h3m-1.5-1.5v3M652 791.5h3m-1.5-1.5v3M653 788.5h3m-1.5-1.5v3M653 790.5h3m-1.5-1.5v3M654 788.5h3m-1.5-1.5v3M655 791.5h3m-1.5-1.5v3M655 789.5h3m-1.5-1.5v3M656 791.5h3m-1.5-1.5v3M656 788.5h3m-1.5-1.5v3M656 792.5h3m-1.5-1.5v3M658 792.5h3m-1.5-1.5v3M659 789.5h3m-1.5-1.5v3M659 792.5h3m-1.5-1.5v3M659 794.5h3m-1.5-1.5v3M659 791.5h3m-1.5-1.5v3M660 793.5h3m-1.5-1.5v3M660 791.5h3m-1.5-1.5v3M660 795.5h3m-1.5-1.5v3M661 791.5h3m-1.5-1.5v3M661 795.5h3m-1.5-1.5v3M661 792.5h3m-1.5-1.5v3M662 795.5h3m-1.5-1.5v3M663 793.5h3m-1.5-1.5v3M663 796.5h3m-1.5-1.5v3M665 797.5h3m-1.5-1.5v3M665 795.5h3m-1.5-1.5v3M665 797.5h3m-1.5-1.5v3M666 795.5h3m-1.5-1.5v3M667 799.5h3m-1.5-1.5v3M667 795.5h3m-1.5-1.5v3M667 799.5h3m-1.5-1.5v3M667 797.5h3m-1.5-1.5v3M668 799.5h3m-1.5-1.5v3M668 797.5h3m-1.5-1.5v3M669 799.5h3m-1.5-1.5v3M670 801.5h3m-1.5-1.5v3M671 799.5h3m-1.5-1.5v3M671 801.5h3m-1.5-1.5v3M671 798.5h3m-1.5-1.5v3M672 800.5h3m-1.5-1.5v3M672 798.5h3m-1.5-1.5v3M673 802.5h3m-1.5-1.5v3M674 799.5h3m-1.5-1.5v3M674 802.5h3m-1.5-1.5v3M674 800.5h3m-1.5-1.5v3M675 798.5h3m-1.5-1.5v3M676 802.5h3m-1.5-1.5v3M676 799.5h3m-1.5-1.5v3M676 801.5h3m-1.5-1.5v3M677 799.5h3m-1.5-1.5v3M678 803.5h3m-1.5-1.5v3M678 801.5h3m-1.5-1.5v3M678 799.5h3m-1.5-1.5v3M679 801.5h3m-1.5-1.5v3M681 802.5h3m-1.5-1.5v3M682 800.5h3m-1.5-1.5v3M682 802.5h3m-1.5-1.5v3M682 799.5h3m-1.5-1.5v3M683 801.5h3m-1.5-1.5v3M684 799.5h3m-1.5-1.5v3M684 802.5h3m-1.5-1.5v3M684 800.5h3m-1.5-1.5v3M685 802.5h3m-1.5-1.5v3M685 799.5h3m-1.5-1.5v3M685 802.5h3m-1.5-1.5v3M686 800.5h3m-1.5-1.5v3M686 803.5h3m-1.5-1.5v3M686 800.5h3m-1.5-1.5v3M687 802.5h3m-1.5-1.5v3M687 799.5h3m-1.5-1.5v3M687 801.5h3m-1.5-1.5v3M688 799.5h3m-1.5-1.5v3M688 802.5h3m-1.5-1.5v3M689 800.5h3m-1.5-1.5v3M690 803.5h3m-1.5-1.5v3M691 800.5h3m-1.5-1.5v3M691 802.5h3m-1.5-1.5v3M692 800.5h3m-1.5-1.5v3M692 802.5h3m-1.5-1.5v3M693 800.5h3m-1.5-1.5v3M693 802.5h3m-1.5-1.5v3M694 799.5h3m-1.5-1.5v3M694 801.5h3m-1.5-1.5v3M695 799.5h3m-1.5-1.5v3M695 802.5h3m-1.5-1.5v3M695 799.5h3m-1.5-1.5v3M696 801.5h3m-1.5-1.5v3M696 799.5h3m-1.5-1.5v3M697 802.5h3m-1.5-1.5v3M697 798.5h3m-1.5-1.5v3M698 800.5h3m-1.5-1.5v3M699 798.5h3m-1.5-1.5v3M699 800.5h3m-1.5-1.5v3M700 802.5h3m-1.5-1.5v3M700 798.5h3m-1.5-1.5v3M701 800.5h3m-1.5-1.5v3M701 797.5h3m-1.5-1.5v3M701 799.5h3m-1.5-1.5v3M703 799.5h3m-1.5-1.5v3M703 797.5h3m-1.5-1.5v3M703 799.5h3m-1.5-1.5v3M704 797.5h3m-1.5-1.5v3M704 800.5h3m-1.5-1.5v3M704 797.5h3m-1.5-1.5v3M705 799.5h3m-1.5-1.5v3M705 797.5h3m-1.5-1.5v3M705 799.5h3m-1.5-1.5v3M706 796.5h3m-1.5-1.5v3M706 799.5h3m-1.5-1.5v3M706 796.5h3m-1.5-1.5v3M707 800.5h3m-1.5-1.5v3M707 795.5h3m-1.5-1.5v3M708 799.5h3m-1.5-1.5v3M708 797.5h3m-1.5-1.5v3M709 795.5h3m-1.5-1.5v3M710 798.5h3m-1.5-1.5v3M710 795.5h3m-1.5-1.5v3M712 797.5h3m-1.5-1.5v3M712 795.5h3m-1.5-1.5v3M712 797.5h3m-1.5-1.5v3M713 795.5h3m-1.5-1.5v3M713 797.5h3m-1.5-1.5v3M713 794.5h3m-1.5-1.5v3M714 796.5h3m-1.5-1.5v3M715 793.5h3m-1.5-1.5v3M715 795.5h3m-1.5-1.5v3M716 792.5h3m-1.5-1.5v3M716 794.5h3m-1.5-1.5v3M717 790.5h3m-1.5-1.5v3M718 793.5h3m-1.5-1.5v3M718 790.5h3m-1.5-1.5v3M719 792.5h3m-1.5-1.5v3M719 790.5h3m-1.5-1.5v3M719 792.5h3m-1.5-1.5v3M721 789.5h3m-1.5-1.5v3M721 792.5h3m-1.5-1.5v3M721 789.5h3m-1.5-1.5v3M723 790.5h3m-1.5-1.5v3M723 786.5h3m-1.5-1.5v3M724 784.5h3m-1.5-1.5v3M725 786.5h3m-1.5-1.5v3M725 783.5h3m-1.5-1.5v3M725 785.5h3m-1.5-1.5v3M725 781.5h3m-1.5-1.5v3M726 784.5h3m-1.5-1.5v3M727 782.5h3m-1.5-1.5v3M727 780.5h3m-1.5-1.5v3M727 777.5h3m-1.5-1.5v3M729 775.5h3m-1.5-1.5v3M729 777.5h3m-1.5-1.5v3M729 775.5h3m-1.5-1.5v3M730 772.5h3m-1.5-1.5v3M730 775.5h3m-1.5-1.5v3M730 771.5h3m-1.5-1.5v3M730 774.5h3m-1.5-1.5v3M731 772.5h3m-1.5-1.5v3M731 770.5h3m-1.5-1.5v3M731 772.5h3m-1.5-1.5v3M732 766.5h3m-1.5-1.5v3M733 764.5h3m-1.5-1.5v3M734 762.5h3m-1.5-1.5v3M734 759.5h3m-1.5-1.5v3M734 756.5h3m-1.5-1.5v3M734 747.5h3m-1.5-1.5v3M735 733.5h3m-1.5-1.5v3M735 715.5h3m-1.5-1.5v3M735 695.5h3m-1.5-1.5v3M735 672.5h3m-1.5-1.5v3M736 643.5h3m-1.5-1.5v3M736 616.5h3m-1.5-1.5v3M736 591.5h3m-1.5-1.5v3M736 574.5h3m-1.5-1.5v3M737 554.5h3m-1.5-1.5v3M737 538.5h3m-1.5-1.5v3M737 522.5h3m-1.5-1.5v3M737 505.5h3m-1.5-1.5v3M737 488.5h3m-1.5-1.5v3M738 472.5h3m-1.5-1.5v3M738 457.5h3m-1.5-1.5v3M738 441.5h3m-1.5-1.5v3M738 427.5h3m-1.5-1.5v3M739 415.5h3m-1.5-1.5v3M739 400.5h3m-1.5-1.5v3M739 387.5h3m-1.5-1.5v3M739 375.5h3m-1.5-1.5v3M740 365.5h3m-1.5-1.5v3M740 358.5h3m-1.5-1.5v3M740 349.5h3m-1.5-1.5v3M740 344.5h3m-1.5-1.5v3M741 340.5h3m-1.5-1.5v3M741 337.5h3m-1.5-1.5v3M741 335.5h3m-1.5-1.5v3M741 333.5h3m-1.5-1.5v3M742 328.5h3m-1.5-1.5v3M742 323.5h3m-1.5-1.5v3M742 326.5h3m-1.5-1.5v3M743 324.5h3m-1.5-1.5v3M743 320.5h3m-1.5-1.5v3M743 315.5h3m-1.5-1.5v3M744 317.5h3m-1.5-1.5v3M744 314.5h3m-1.5-1.5v3M744 310.5h3m-1.5-1.5v3M746 313.5h3m-1.5-1.5v3M746 309.5h3m-1.5-1.5v3M747 307.5h3m-1.5-1.5v3M747 313.5h3m-1.5-1.5v3M747 307.5h3m-1.5-1.5v3M747 309.5h3m-1.5-1.5v3M748 312.5h3m-1.5-1.5v3M748 308.5h3m-1.5-1.5v3M748 306.5h3m-1.5-1.5v3M749 312.5h3m-1.5-1.5v3M749 310.5h3m-1.5-1.5v3M749 312.5h3m-1.5-1.5v3M749 310.5h3m-1.5-1.5v3M750 305.5h3m-1.5-1.5v3M751 309.5h3m-1.5-1.5v3M751 311.5h3m-1.5-1.5v3M751 305.5h3m-1.5-1.5v3M752 308.5h3m-1.5-1.5v3M752 310.5h3m-1.5-1.5v3M753 305.5h3m-1.5-1.5v3M753 311.5h3m-1.5-1.5v3M753 307.5h3m-1.5-1.5v3M753 304.5h3m-1.5-1.5v3M754 307.5h3m-1.5-1.5v3M754 310.5h3m-1.5-1.5v3M755 304.5h3m-1.5-1.5v3M755 306.5h3m-1.5-1.5v3M755 308.5h3m-1.5-1.5v3M755 306.5h3m-1.5-1.5v3M756 309.5h3m-1.5-1.5v3M756 307.5h3m-1.5-1.5v3M756 305.5h3m-1.5-1.5v3M756 308.5h3m-1.5-1.5v3M757 304.5h3m-1.5-1.5v3M757 307.5h3m-1.5-1.5v3M757 310.5h3m-1.5-1.5v3M757 306.5h3m-1.5-1.5v3M758 309.5h3m-1.5-1.5v3M759 306.5h3m-1.5-1.5v3M759 310.5h3m-1.5-1.5v3M759 306.5h3m-1.5-1.5v3M760 310.5h3m-1.5-1.5v3M760 308.5h3m-1.5-1.5v3M761 312.5h3m-1.5-1.5v3M761 310.5h3m-1.5-1.5v3M761 308.5h3m-1.5-1.5v3M762 311.5h3m-1.5-1.5v3M762 308.5h3m-1.5-1.5v3M762 311.5h3m-1.5-1.5v3M762 314.5h3m-1.5-1.5v3M763 310.5h3m-1.5-1.5v3M763 312.5h3m-1.5-1.5v3M763 309.5h3m-1.5-1.5v3M764 312.5h3m-1.5-1.5v3M764 309.5h3m-1.5-1.5v3M764 315.5h3m-1.5-1.5v3M765 311.5h3m-1.5-1.5v3M765 314.5h3m-1.5-1.5v3M767 311.5h3m-1.5-1.5v3M767 317.5h3m-1.5-1.5v3M768 315.5h3m-1.5-1.5v3M768 317.5h3m-1.5-1.5v3M769 312.5h3m-1.5-1.5v3M769 314.5h3m-1.5-1.5v3M770 316.5h3m-1.5-1.5v3M770 319.5h3m-1.5-1.5v3M771 316.5h3m-1.5-1.5v3M771 319.5h3m-1.5-1.5v3M771 316.5h3m-1.5-1.5v3M771 320.5h3m-1.5-1.5v3M772 316.5h3m-1.5-1.5v3M772 319.5h3m-1.5-1.5v3M773 317.5h3m-1.5-1.5v3M773 322.5h3m-1.5-1.5v3M773 317.5h3m-1.5-1.5v3M773 322.5h3m-1.5-1.5v3M773 318.5h3m-1.5-1.5v3M774 321.5h3m-1.5-1.5v3M774 318.5h3m-1.5-1.5v3M775 321.5h3m-1.5-1.5v3M776 319.5h3m-1.5-1.5v3M776 324.5h3m-1.5-1.5v3M777 320.5h3m-1.5-1.5v3M777 325.5h3m-1.5-1.5v3M777 321.5h3m-1.5-1.5v3M777 324.5h3m-1.5-1.5v3M778 322.5h3m-1.5-1.5v3M779 326.5h3m-1.5-1.5v3M779 320.5h3m-1.5-1.5v3M779 326.5h3m-1.5-1.5v3M780 322.5h3m-1.5-1.5v3M780 327.5h3m-1.5-1.5v3M780 324.5h3m-1.5-1.5v3M781 322.5h3m-1.5-1.5v3M781 325.5h3m-1.5-1.5v3M781 328.5h3m-1.5-1.5v3M782 325.5h3m-1.5-1.5v3M782 327.5h3m-1.5-1.5v3M782 324.5h3m-1.5-1.5v3M783 322.5h3m-1.5-1.5v3M783 325.5h3m-1.5-1.5v3M783 323.5h3m-1.5-1.5v3M784 326.5h3m-1.5-1.5v3M784 322.5h3m-1.5-1.5v3M784 324.5h3m-1.5-1.5v3M785 322.5h3m-1.5-1.5v3M785 329.5h3m-1.5-1.5v3M785 323.5h3m-1.5-1.5v3M786 328.5h3m-1.5-1.5v3M786 326.5h3m-1.5-1.5v3M786 328.5h3m-1.5-1.5v3M787 326.5h3m-1.5-1.5v3M787 330.5h3m-1.5-1.5v3M787 325.5h3m-1.5-1.5v3M787 327.5h3m-1.5-1.5v3M788 325.5h3m-1.5-1.5v3M788 330.5h3m-1.5-1.5v3M789 328.5h3m-1.5-1.5v3M790 326.5h3m-1.5-1.5v3M790 331.5h3m-1.5-1.5v3M791 326.5h3m-1.5-1.5v3M791 331.5h3m-1.5-1.5v3M791 329.5h3m-1.5-1.5v3M791 325.5h3m-1.5-1.5v3M791 327.5h3m-1.5-1.5v3M792 331.5h3m-1.5-1.5v3M793 329.5h3m-1.5-1.5v3M793 332.5h3m-1.5-1.5v3M793 329.5h3m-1.5-1.5v3M793 327.5h3m-1.5-1.5v3M794 331.5h3m-1.5-1.5v3M794 333.5h3m-1.5-1.5v3M795 330.5h3m-1.5-1.5v3M795 332.5h3m-1.5-1.5v3M796 334.5h3m-1.5-1.5v3M796 332.5h3m-1.5-1.5v3M796 334.5h3m-1.5-1.5v3M796 332.5h3m-1.5-1.5v3M797 328.5h3m-1.5-1.5v3M797 330.5h3m-1.5-1.5v3M797 333.5h3m-1.5-1.5v3M797 335.5h3m-1.5-1.5v3M798 333.5h3m-1.5-1.5v3M798 331.5h3m-1.5-1.5v3M798 334.5h3m-1.5-1.5v3M799 331.5h3m-1.5-1.5v3M799 334.5h3m-1.5-1.5v3M799 337.5h3m-1.5-1.5v3M800 331.5h3m-1.5-1.5v3M800 337.5h3m-1.5-1.5v3M800 335.5h3m-1.5-1.5v3M801 338.5h3m-1.5-1.5v3M802 333.5h3m-1.5-1.5v3M802 335.5h3m-1.5-1.5v3M803 338.5h3m-1.5-1.5v3M803 336.5h3m-1.5-1.5v3M804 340.5h3m-1.5-1.5v3M804 335.5h3m-1.5-1.5v3M804 341.5h3m-1.5-1.5v3M804 339.5h3m-1.5-1.5v3M805 337.5h3m-1.5-1.5v3M805 343.5h3m-1.5-1.5v3M806 341.5h3m-1.5-1.5v3M807 337.5h3m-1.5-1.5v3M807 339.5h3m-1.5-1.5v3M808 344.5h3m-1.5-1.5v3M808 342.5h3m-1.5-1.5v3M808 345.5h3m-1.5-1.5v3M809 343.5h3m-1.5-1.5v3M809 341.5h3m-1.5-1.5v3M809 346.5h3m-1.5-1.5v3M810 343.5h3m-1.5-1.5v3M810 347.5h3m-1.5-1.5v3M810 345.5h3m-1.5-1.5v3M811 349.5h3m-1.5-1.5v3M813 347.5h3m-1.5-1.5v3M813 349.5h3m-1.5-1.5v3M813 346.5h3m-1.5-1.5v3M814 353.5h3m-1.5-1.5v3M814 348.5h3m-1.5-1.5v3M815 350.5h3m-1.5-1.5v3M815 353.5h3m-1.5-1.5v3M815 350.5h3m-1.5-1.5v3M816 352.5h3m-1.5-1.5v3M817 357.5h3m-1.5-1.5v3M817 355.5h3m-1.5-1.5v3M818 352.5h3m-1.5-1.5v3M818 356.5h3m-1.5-1.5v3M818 353.5h3m-1.5-1.5v3M818 356.5h3m-1.5-1.5v3M819 353.5h3m-1.5-1.5v3M819 357.5h3m-1.5-1.5v3M819 354.5h3m-1.5-1.5v3M819 359.5h3m-1.5-1.5v3M820 357.5h3m-1.5-1.5v3M820 354.5h3m-1.5-1.5v3M821 356.5h3m-1.5-1.5v3M821 359.5h3m-1.5-1.5v3M821 357.5h3m-1.5-1.5v3M821 360.5h3m-1.5-1.5v3M821 358.5h3m-1.5-1.5v3M822 356.5h3m-1.5-1.5v3M822 360.5h3m-1.5-1.5v3M824 359.5h3m-1.5-1.5v3M824 362.5h3m-1.5-1.5v3M825 357.5h3m-1.5-1.5v3M825 363.5h3m-1.5-1.5v3M825 361.5h3m-1.5-1.5v3M825 357.5h3m-1.5-1.5v3M826 363.5h3m-1.5-1.5v3M826 359.5h3m-1.5-1.5v3M827 363.5h3m-1.5-1.5v3M827 358.5h3m-1.5-1.5v3M828 360.5h3m-1.5-1.5v3M828 363.5h3m-1.5-1.5v3M828 361.5h3m-1.5-1.5v3M829 363.5h3m-1.5-1.5v3M830 359.5h3m-1.5-1.5v3M830 361.5h3m-1.5-1.5v3M830 364.5h3m-1.5-1.5v3M831 362.5h3m-1.5-1.5v3M831 365.5h3m-1.5-1.5v3M832 362.5h3m-1.5-1.5v3M833 364.5h3m-1.5-1.5v3M833 362.5h3m-1.5-1.5v3M834 365.5h3m-1.5-1.5v3M834 363.5h3m-1.5-1.5v3M835 367.5h3m-1.5-1.5v3M835 362.5h3m-1.5-1.5v3M836 364.5h3m-1.5-1.5v3M837 362.5h3m-1.5-1.5v3M837 367.5h3m-1.5-1.5v3M837 362.5h3m-1.5-1.5v3M837 364.5h3m-1.5-1.5v3M838 368.5h3m-1.5-1.5v3M839 362.5h3m-1.5-1.5v3M839 364.5h3m-1.5-1.5v3M840 366.5h3m-1.5-1.5v3M840 363.5h3m-1.5-1.5v3M840 370.5h3m-1.5-1.5v3M841 363.5h3m-1.5-1.5v3M841 365.5h3m-1.5-1.5v3M842 367.5h3m-1.5-1.5v3M842 365.5h3m-1.5-1.5v3M843 367.5h3m-1.5-1.5v3M843 364.5h3m-1.5-1.5v3M844 366.5h3m-1.5-1.5v3M844 369.5h3m-1.5-1.5v3M844 367.5h3m-1.5-1.5v3M845 364.5h3m-1.5-1.5v3M845 370.5h3m-1.5-1.5v3M845 364.5h3m-1.5-1.5v3M845 366.5h3m-1.5-1.5v3M845 368.5h3m-1.5-1.5v3M846 366.5h3m-1.5-1.5v3M846 369.5h3m-1.5-1.5v3M846 366.5h3m-1.5-1.5v3M847 370.5h3m-1.5-1.5v3M847 365.5h3m-1.5-1.5v3M847 367.5h3m-1.5-1.5v3M848 371.5h3m-1.5-1.5v3M848 369.5h3m-1.5-1.5v3M849 372.5h3m-1.5-1.5v3M849 369.5h3m-1.5-1.5v3M850 371.5h3m-1.5-1.5v3M850 368.5h3m-1.5-1.5v3M850 373.5h3m-1.5-1.5v3M850 369.5h3m-1.5-1.5v3M851 374.5h3m-1.5-1.5v3M851 371.5h3m-1.5-1.5v3M852 369.5h3m-1.5-1.5v3M853 375.5h3m-1.5-1.5v3M853 370.5h3m-1.5-1.5v3M853 373.5h3m-1.5-1.5v3M854 375.5h3m-1.5-1.5v3M854 378.5h3m-1.5-1.5v3M855 375.5h3m-1.5-1.5v3M855 380.5h3m-1.5-1.5v3M855 375.5h3m-1.5-1.5v3M855 379.5h3m-1.5-1.5v3M856 374.5h3m-1.5-1.5v3M856 376.5h3m-1.5-1.5v3M856 380.5h3m-1.5-1.5v3M856 376.5h3m-1.5-1.5v3M857 380.5h3m-1.5-1.5v3M857 383.5h3m-1.5-1.5v3M858 380.5h3m-1.5-1.5v3M858 385.5h3m-1.5-1.5v3M859 389.5h3m-1.5-1.5v3M859 391.5h3m-1.5-1.5v3M860 394.5h3m-1.5-1.5v3M860 398.5h3m-1.5-1.5v3M861 400.5h3m-1.5-1.5v3M861 405.5h3m-1.5-1.5v3M862 403.5h3m-1.5-1.5v3M862 408.5h3m-1.5-1.5v3M862 410.5h3m-1.5-1.5v3M862 408.5h3m-1.5-1.5v3M863 412.5h3m-1.5-1.5v3M863 410.5h3m-1.5-1.5v3M863 414.5h3m-1.5-1.5v3M863 412.5h3m-1.5-1.5v3M863 414.5h3m-1.5-1.5v3M864 417.5h3m-1.5-1.5v3M864 419.5h3m-1.5-1.5v3M865 423.5h3m-1.5-1.5v3M865 421.5h3m-1.5-1.5v3M865 423.5h3m-1.5-1.5v3M866 426.5h3m-1.5-1.5v3M866 429.5h3m-1.5-1.5v3M867 432.5h3m-1.5-1.5v3M867 434.5h3m-1.5-1.5v3M868 440.5h3m-1.5-1.5v3M868 444.5h3m-1.5-1.5v3M869 447.5h3m-1.5-1.5v3M869 450.5h3m-1.5-1.5v3M869 457.5h3m-1.5-1.5v3M870 459.5h3m-1.5-1.5v3M870 466.5h3m-1.5-1.5v3M870 472.5h3m-1.5-1.5v3M870 485.5h3m-1.5-1.5v3M871 497.5h3m-1.5-1.5v3M871 514.5h3m-1.5-1.5v3M871 532.5h3m-1.5-1.5v3M871 547.5h3m-1.5-1.5v3M872 562.5h3m-1.5-1.5v3M872 573.5h3m-1.5-1.5v3M872 589.5h3m-1.5-1.5v3M872 601.5h3m-1.5-1.5v3M873 616.5h3m-1.5-1.5v3M873 632.5h3m-1.5-1.5v3M873 646.5h3m-1.5-1.5v3M873 659.5h3m-1.5-1.5v3M874 672.5h3m-1.5-1.5v3M874 685.5h3m-1.5-1.5v3M874 699.5h3m-1.5-1.5v3M874 710.5h3m-1.5-1.5v3M875 721.5h3m-1.5-1.5v3M875 730.5h3m-1.5-1.5v3M875 737.5h3m-1.5-1.5v3M875 743.5h3m-1.5-1.5v3M875 747.5h3m-1.5-1.5v3M876 751.5h3m-1.5-1.5v3M876 756.5h3m-1.5-1.5v3M876 758.5h3m-1.5-1.5v3M876 760.5h3m-1.5-1.5v3M877 763.5h3m-1.5-1.5v3M877 767.5h3m-1.5-1.5v3M878 771.5h3m-1.5-1.5v3M878 769.5h3m-1.5-1.5v3M879 772.5h3m-1.5-1.5v3M879 774.5h3m-1.5-1.5v3M880 778.5h3m-1.5-1.5v3M880 776.5h3m-1.5-1.5v3M880 778.5h3m-1.5-1.5v3M881 780.5h3m-1.5-1.5v3M881 777.5h3m-1.5-1.5v3M882 780.5h3m-1.5-1.5v3M882 777.5h3m-1.5-1.5v3M882 780.5h3m-1.5-1.5v3M883 782.5h3m-1.5-1.5v3M883 779.5h3m-1.5-1.5v3M885 782.5h3m-1.5-1.5v3M886 779.5h3m-1.5-1.5v3M886 781.5h3m-1.5-1.5v3M887 779.5h3m-1.5-1.5v3M887 782.5h3m-1.5-1.5v3M887 779.5h3m-1.5-1.5v3M889 781.5h3m-1.5-1.5v3M889 779.5h3m-1.5-1.5v3M889 777.5h3m-1.5-1.5v3M891 775.5h3m-1.5-1.5v3M891 779.5h3m-1.5-1.5v3M891 777.5h3m-1.5-1.5v3M892 774.5h3m-1.5-1.5v3M892 778.5h3m-1.5-1.5v3M893 776.5h3m-1.5-1.5v3M894 774.5h3m-1.5-1.5v3M894 776.5h3m-1.5-1.5v3M896 776.5h3m-1.5-1.5v3M896 774.5h3m-1.5-1.5v3M897 772.5h3m-1.5-1.5v3M898 770.5h3m-1.5-1.5v3M898 774.5h3m-1.5-1.5v3M899 769.5h3m-1.5-1.5v3M899 772.5h3m-1.5-1.5v3M899 769.5h3m-1.5-1.5v3M901 767.5h3m-1.5-1.5v3M901 770.5h3m-1.5-1.5v3M901 768.5h3m-1.5-1.5v3M902 766.5h3m-1.5-1.5v3M902 768.5h3m-1.5-1.5v3M902 766.5h3m-1.5-1.5v3M903 764.5h3m-1.5-1.5v3M903 767.5h3m-1.5-1.5v3M903 764.5h3m-1.5-1.5v3M905 765.5h3m-1.5-1.5v3M905 761.5h3m-1.5-1.5v3M905 759.5h3m-1.5-1.5v3M906 763.5h3m-1.5-1.5v3M906 759.5h3m-1.5-1.5v3M906 761.5h3m-1.5-1.5v3M907 758.5h3m-1.5-1.5v3M908 756.5h3m-1.5-1.5v3M909 754.5h3m-1.5-1.5v3M910 751.5h3m-1.5-1.5v3M910 753.5h3m-1.5-1.5v3M910 748.5h3m-1.5-1.5v3M911 750.5h3m-1.5-1.5v3M911 746.5h3m-1.5-1.5v3M911 744.5h3m-1.5-1.5v3M911 740.5h3m-1.5-1.5v3M912 736.5h3m-1.5-1.5v3M912 725.5h3m-1.5-1.5v3M912 718.5h3m-1.5-1.5v3M912 708.5h3m-1.5-1.5v3M913 696.5h3m-1.5-1.5v3M913 684.5h3m-1.5-1.5v3M913 671.5h3m-1.5-1.5v3M913 660.5h3m-1.5-1.5v3M914 647.5h3m-1.5-1.5v3M914 634.5h3m-1.5-1.5v3M914 617.5h3m-1.5-1.5v3M914 602.5h3m-1.5-1.5v3M915 589.5h3m-1.5-1.5v3M915 577.5h3m-1.5-1.5v3M915 563.5h3m-1.5-1.5v3M915 551.5h3m-1.5-1.5v3M916 539.5h3m-1.5-1.5v3M916 530.5h3m-1.5-1.5v3M916 517.5h3m-1.5-1.5v3M916 503.5h3m-1.5-1.5v3M917 491.5h3m-1.5-1.5v3M917 476.5h3m-1.5-1.5v3M917 465.5h3m-1.5-1.5v3M917 455.5h3m-1.5-1.5v3M917 442.5h3m-1.5-1.5v3M918 431.5h3m-1.5-1.5v3M918 420.5h3m-1.5-1.5v3M918 413.5h3m-1.5-1.5v3M918 407.5h3m-1.5-1.5v3M919 401.5h3m-1.5-1.5v3M919 396.5h3m-1.5-1.5v3M919 391.5h3m-1.5-1.5v3M919 387.5h3m-1.5-1.5v3M920 384.5h3m-1.5-1.5v3M920 381.5h3m-1.5-1.5v3M920 376.5h3m-1.5-1.5v3M921 372.5h3m-1.5-1.5v3M921 370.5h3m-1.5-1.5v3M922 368.5h3m-1.5-1.5v3M922 363.5h3m-1.5-1.5v3M923 361.5h3m-1.5-1.5v3M923 364.5h3m-1.5-1.5v3M923 360.5h3m-1.5-1.5v3M924 357.5h3m-1.5-1.5v3M925 354.5h3m-1.5-1.5v3M926 352.5h3m-1.5-1.5v3M926 354.5h3m-1.5-1.5v3M926 352.5h3m-1.5-1.5v3M927 350.5h3m-1.5-1.5v3M927 353.5h3m-1.5-1.5v3M927 350.5h3m-1.5-1.5v3M928 354.5h3m-1.5-1.5v3M928 349.5h3m-1.5-1.5v3M928 353.5h3m-1.5-1.5v3M928 351.5h3m-1.5-1.5v3M929 349.5h3m-1.5-1.5v3M929 352.5h3m-1.5-1.5v3M929 349.5h3m-1.5-1.5v3M929 351.5h3m-1.5-1.5v3M930 348.5h3m-1.5-1.5v3M931 351.5h3m-1.5-1.5v3M931 348.5h3m-1.5-1.5v3M931 351.5h3m-1.5-1.5v3M932 348.5h3m-1.5-1.5v3M933 346.5h3m-1.5-1.5v3M933 348.5h3m-1.5-1.5v3M934 346.5h3m-1.5-1.5v3M934 349.5h3m-1.5-1.5v3M935 347.5h3m-1.5-1.5v3M935 349.5h3m-1.5-1.5v3M936 347.5h3m-1.5-1.5v3M936 349.5h3m-1.5-1.5v3M937 351.5h3m-1.5-1.5v3M937 349.5h3m-1.5-1.5v3M938 351.5h3m-1.5-1.5v3M939 348.5h3m-1.5-1.5v3M939 352.5h3m-1.5-1.5v3M939 349.5h3m-1.5-1.5v3M939 353.5h3m-1.5-1.5v3M940 351.5h3m-1.5-1.5v3M940 354.5h3m-1.5-1.5v3M940 351.5h3m-1.5-1.5v3M941 353.5h3m-1.5-1.5v3M942 355.5h3m-1.5-1.5v3M943 358.5h3m-1.5-1.5v3M943 356.5h3m-1.5-1.5v3M943 359.5h3m-1.5-1.5v3M944 357.5h3m-1.5-1.5v3M944 360.5h3m-1.5-1.5v3M945 363.5h3m-1.5-1.5v3M945 360.5h3m-1.5-1.5v3M945 364.5h3m-1.5-1.5v3M945 362.5h3m-1.5-1.5v3M946 367.5h3m-1.5-1.5v3M946 364.5h3m-1.5-1.5v3M947 368.5h3m-1.5-1.5v3M947 366.5h3m-1.5-1.5v3M947 369.5h3m-1.5-1.5v3M947 371.5h3m-1.5-1.5v3M948 374.5h3m-1.5-1.5v3M949 378.5h3m-1.5-1.5v3M949 380.5h3m-1.5-1.5v3M950 382.5h3m-1.5-1.5v3M951 384.5h3m-1.5-1.5v3M951 387.5h3m-1.5-1.5v3M953 387.5h3m-1.5-1.5v3M953 391.5h3m-1.5-1.5v3M954 394.5h3m-1.5-1.5v3M955 397.5h3m-1.5-1.5v3M956 399.5h3m-1.5-1.5v3M956 396.5h3m-1.5-1.5v3M956 400.5h3m-1.5-1.5v3M957 398.5h3m-1.5-1.5v3M957 402.5h3m-1.5-1.5v3M958 400.5h3m-1.5-1.5v3M958 404.5h3m-1.5-1.5v3M959 402.5h3m-1.5-1.5v3M959 407.5h3m-1.5-1.5v3M959 405.5h3m-1.5-1.5v3M960 408.5h3m-1.5-1.5v3M960 410.5h3m-1.5-1.5v3M961 412.5h3m-1.5-1.5v3M961 415.5h3m-1.5-1.5v3M962 418.5h3m-1.5-1.5v3M962 420.5h3m-1.5-1.5v3M963 424.5h3m-1.5-1.5v3M963 426.5h3m-1.5-1.5v3M963 424.5h3m-1.5-1.5v3M964 428.5h3m-1.5-1.5v3M964 434.5h3m-1.5-1.5v3M965 439.5h3m-1.5-1.5v3M965 442.5h3m-1.5-1.5v3M966 446.5h3m-1.5-1.5v3M966 448.5h3m-1.5-1.5v3M966 452.5h3m-1.5-1.5v3M967 458.5h3m-1.5-1.5v3M967 462.5h3m-1.5-1.5v3M967 471.5h3m-1.5-1.5v3M968 474.5h3m-1.5-1.5v3M968 482.5h3m-1.5-1.5v3M968 486.5h3m-1.5-1.5v3M968 495.5h3m-1.5-1.5v3M969 499.5h3m-1.5-1.5v3M969 508.5h3m-1.5-1.5v3M969 515.5h3m-1.5-1.5v3M969 521.5h3m-1.5-1.5v3M970 527.5h3m-1.5-1.5v3M970 537.5h3m-1.5-1.5v3M970 546.5h3m-1.5-1.5v3M970 553.5h3m-1.5-1.5v3M971 561.5h3m-1.5-1.5v3M971 569.5h3m-1.5-1.5v3M971 576.5h3m-1.5-1.5v3M971 588.5h3m-1.5-1.5v3M971 596.5h3m-1.5-1.5v3M972 604.5h3m-1.5-1.5v3M972 613.5h3m-1.5-1.5v3M972 618.5h3m-1.5-1.5v3M972 626.5h3m-1.5-1.5v3M973 631.5h3m-1.5-1.5v3M973 638.5h3m-1.5-1.5v3M973 640.5h3m-1.5-1.5v3M973 645.5h3m-1.5-1.5v3M974 648.5h3m-1.5-1.5v3M974 655.5h3m-1.5-1.5v3M974 657.5h3m-1.5-1.5v3M974 663.5h3m-1.5-1.5v3M975 670.5h3m-1.5-1.5v3M975 673.5h3m-1.5-1.5v3M975 677.5h3m-1.5-1.5v3M976 681.5h3m-1.5-1.5v3M976 685.5h3m-1.5-1.5v3M976 687.5h3m-1.5-1.5v3M977 692.5h3m-1.5-1.5v3M977 696.5h3m-1.5-1.5v3M977 698.5h3m-1.5-1.5v3M977 705.5h3m-1.5-1.5v3M978 710.5h3m-1.5-1.5v3M978 713.5h3m-1.5-1.5v3M978 716.5h3m-1.5-1.5v3M978 719.5h3m-1.5-1.5v3M979 721.5h3m-1.5-1.5v3M979 729.5h3m-1.5-1.5v3M979 732.5h3m-1.5-1.5v3M979 735.5h3m-1.5-1.5v3M980 740.5h3m-1.5-1.5v3M980 746.5h3m-1.5-1.5v3M980 749.5h3m-1.5-1.5v3M980 754.5h3m-1.5-1.5v3M981 757.5h3m-1.5-1.5v3M981 762.5h3m-1.5-1.5v3M981 760.5h3m-1.5-1.5v3M981 763.5h3m-1.5-1.5v3M982 761.5h3m-1.5-1.5v3M982 764.5h3m-1.5-1.5v3M983 767.5h3m-1.5-1.5v3M984 769.5h3m-1.5-1.5v3M984 766.5h3m-1.5-1.5v3M984 768.5h3m-1.5-1.5v3M985 771.5h3m-1.5-1.5v3M985 769.5h3m-1.5-1.5v3M985 772.5h3m-1.5-1.5v3M986 769.5h3m-1.5-1.5v3M987 771.5h3m-1.5-1.5v3M987 769.5h3m-1.5-1.5v3M989 771.5h3m-1.5-1.5v3M989 769.5h3m-1.5-1.5v3M990 767.5h3m-1.5-1.5v3M990 769.5h3m-1.5-1.5v3M990 766.5h3m-1.5-1.5v3M991 768.5h3m-1.5-1.5v3M991 765.5h3m-1.5-1.5v3M992 762.5h3m-1.5-1.5v3M993 760.5h3m-1.5-1.5v3M993 758.5h3m-1.5-1.5v3M994 756.5h3m-1.5-1.5v3M994 754.5h3m-1.5-1.5v3M995 751.5h3m-1.5-1.5v3M995 745.5h3m-1.5-1.5v3M996 738.5h3m-1.5-1.5v3M996 734.5h3m-1.5-1.5v3M996 728.5h3m-1.5-1.5v3M996 713.5h3m-1.5-1.5v3M997 700.5h3m-1.5-1.5v3M997 684.5h3m-1.5-1.5v3M997 667.5h3m-1.5-1.5v3M997 647.5h3m-1.5-1.5v3M998 630.5h3m-1.5-1.5v3M998 607.5h3m-1.5-1.5v3M998 591.5h3m-1.5-1.5v3M998 573.5h3m-1.5-1.5v3M999 558.5h3m-1.5-1.5v3M999 542.5h3m-1.5-1.5v3M999 530.5h3m-1.5-1.5v3M999 514.5h3m-1.5-1.5v3M1000 496.5h3m-1.5-1.5v3M1000 483.5h3m-1.5-1.5v3M1000 468.5h3m-1.5-1.5v3M1000 454.5h3m-1.5-1.5v3M1001 437.5h3m-1.5-1.5v3M1001 426.5h3m-1.5-1.5v3M1001 416.5h3m-1.5-1.5v3M1001 410.5h3m-1.5-1.5v3M1001 404.5h3m-1.5-1.5v3M1002 396.5h3m-1.5-1.5v3M1002 394.5h3m-1.5-1.5v3M1002 389.5h3m-1.5-1.5v3M1003 387.5h3m-1.5-1.5v3M1003 382.5h3m-1.5-1.5v3M1003 380.5h3m-1.5-1.5v3M1004 374.5h3m-1.5-1.5v3M1004 371.5h3m-1.5-1.5v3M1004 369.5h3m-1.5-1.5v3M1005 371.5h3m-1.5-1.5v3M1005 368.5h3m-1.5-1.5v3M1005 364.5h3m-1.5-1.5v3M1006 362.5h3m-1.5-1.5v3M1007 360.5h3m-1.5-1.5v3M1007 357.5h3m-1.5-1.5v3M1008 359.5h3m-1.5-1.5v3M1008 357.5h3m-1.5-1.5v3M1009 353.5h3m-1.5-1.5v3M1009 356.5h3m-1.5-1.5v3M1009 354.5h3m-1.5-1.5v3M1010 351.5h3m-1.5-1.5v3M1011 349.5h3m-1.5-1.5v3M1012 351.5h3m-1.5-1.5v3M1013 346.5h3m-1.5-1.5v3M1013 350.5h3m-1.5-1.5v3M1013 347.5h3m-1.5-1.5v3M1015 344.5h3m-1.5-1.5v3M1015 346.5h3m-1.5-1.5v3M1017 347.5h3m-1.5-1.5v3M1017 344.5h3m-1.5-1.5v3M1018 347.5h3m-1.5-1.5v3M1018 344.5h3m-1.5-1.5v3M1018 348.5h3m-1.5-1.5v3M1019 346.5h3m-1.5-1.5v3M1019 349.5h3m-1.5-1.5v3M1019 347.5h3m-1.5-1.5v3M1021 346.5h3m-1.5-1.5v3M1021 348.5h3m-1.5-1.5v3M1022 350.5h3m-1.5-1.5v3M1022 348.5h3m-1.5-1.5v3M1022 352.5h3m-1.5-1.5v3M1024 353.5h3m-1.5-1.5v3M1024 351.5h3m-1.5-1.5v3M1025 355.5h3m-1.5-1.5v3M1025 353.5h3m-1.5-1.5v3M1025 357.5h3m-1.5-1.5v3M1027 356.5h3m-1.5-1.5v3M1027 360.5h3m-1.5-1.5v3M1027 357.5h3m-1.5-1.5v3M1027 359.5h3m-1.5-1.5v3M1028 363.5h3m-1.5-1.5v3M1029 365.5h3m-1.5-1.5v3M1029 363.5h3m-1.5-1.5v3M1029 365.5h3m-1.5-1.5v3M1030 367.5h3m-1.5-1.5v3M1030 369.5h3m-1.5-1.5v3M1031 373.5h3m-1.5-1.5v3M1031 376.5h3m-1.5-1.5v3M1032 379.5h3m-1.5-1.5v3M1033 383.5h3m-1.5-1.5v3M1033 381.5h3m-1.5-1.5v3M1033 383.5h3m-1.5-1.5v3M1034 388.5h3m-1.5-1.5v3M1034 386.5h3m-1.5-1.5v3M1034 388.5h3m-1.5-1.5v3M1034 390.5h3m-1.5-1.5v3M1035 393.5h3m-1.5-1.5v3M1036 397.5h3m-1.5-1.5v3M1037 399.5h3m-1.5-1.5v3M1037 401.5h3m-1.5-1.5v3M1037 405.5h3m-1.5-1.5v3M1038 410.5h3m-1.5-1.5v3M1038 408.5h3m-1.5-1.5v3M1038 413.5h3m-1.5-1.5v3M1039 415.5h3m-1.5-1.5v3M1039 417.5h3m-1.5-1.5v3M1039 419.5h3m-1.5-1.5v3M1040 422.5h3m-1.5-1.5v3M1040 426.5h3m-1.5-1.5v3M1040 429.5h3m-1.5-1.5v3M1041 435.5h3m-1.5-1.5v3M1041 441.5h3m-1.5-1.5v3M1041 443.5h3m-1.5-1.5v3M1042 454.5h3m-1.5-1.5v3M1042 460.5h3m-1.5-1.5v3M1042 470.5h3m-1.5-1.5v3M1042 484.5h3m-1.5-1.5v3M1043 497.5h3m-1.5-1.5v3M1043 509.5h3m-1.5-1.5v3M1043 520.5h3m-1.5-1.5v3M1043 535.5h3m-1.5-1.5v3M1043 544.5h3m-1.5-1.5v3M1044 554.5h3m-1.5-1.5v3M1044 563.5h3m-1.5-1.5v3M1044 573.5h3m-1.5-1.5v3M1044 584.5h3m-1.5-1.5v3M1045 590.5h3m-1.5-1.5v3M1045 600.5h3m-1.5-1.5v3M1045 608.5h3m-1.5-1.5v3M1045 618.5h3m-1.5-1.5v3M1046 627.5h3m-1.5-1.5v3M1046 633.5h3m-1.5-1.5v3M1046 643.5h3m-1.5-1.5v3M1046 647.5h3m-1.5-1.5v3M1047 655.5h3m-1.5-1.5v3M1047 664.5h3m-1.5-1.5v3M1047 669.5h3m-1.5-1.5v3M1047 679.5h3m-1.5-1.5v3M1048 687.5h3m-1.5-1.5v3M1048 693.5h3m-1.5-1.5v3M1048 701.5h3m-1.5-1.5v3M1048 709.5h3m-1.5-1.5v3M1049 719.5h3m-1.5-1.5v3M1049 725.5h3m-1.5-1.5v3M1049 727.5h3m-1.5-1.5v3M1049 734.5h3m-1.5-1.5v3M1049 741.5h3m-1.5-1.5v3M1050 744.5h3m-1.5-1.5v3M1050 747.5h3m-1.5-1.5v3M1051 750.5h3m-1.5-1.5v3M1051 752.5h3m-1.5-1.5v3M1051 756.5h3m-1.5-1.5v3M1052 760.5h3m-1.5-1.5v3M1052 762.5h3m-1.5-1.5v3M1053 764.5h3m-1.5-1.5v3M1053 766.5h3m-1.5-1.5v3M1053 764.5h3m-1.5-1.5v3M1054 766.5h3m-1.5-1.5v3M1054 768.5h3m-1.5-1.5v3M1055 771.5h3m-1.5-1.5v3M1055 767.5h3m-1.5-1.5v3M1055 771.5h3m-1.5-1.5v3M1056 773.5h3m-1.5-1.5v3M1057 771.5h3m-1.5-1.5v3M1057 773.5h3m-1.5-1.5v3M1057 771.5h3m-1.5-1.5v3M1058 775.5h3m-1.5-1.5v3M1058 773.5h3m-1.5-1.5v3M1059 777.5h3m-1.5-1.5v3M1059 774.5h3m-1.5-1.5v3M1060 776.5h3m-1.5-1.5v3M1060 774.5h3m-1.5-1.5v3M1061 777.5h3m-1.5-1.5v3M1061 775.5h3m-1.5-1.5v3M1061 777.5h3m-1.5-1.5v3M1062 775.5h3m-1.5-1.5v3M1064 777.5h3m-1.5-1.5v3M1064 775.5h3m-1.5-1.5v3M1065 777.5h3m-1.5-1.5v3M1065 774.5h3m-1.5-1.5v3M1065 776.5h3m-1.5-1.5v3M1066 778.5h3m-1.5-1.5v3M1066 773.5h3m-1.5-1.5v3M1066 776.5h3m-1.5-1.5v3M1067 774.5h3m-1.5-1.5v3M1067 776.5h3m-1.5-1.5v3M1067 773.5h3m-1.5-1.5v3M1068 776.5h3m-1.5-1.5v3M1068 772.5h3m-1.5-1.5v3M1068 774.5h3m-1.5-1.5v3M1069 772.5h3m-1.5-1.5v3M1069 774.5h3m-1.5-1.5v3M1069 771.5h3m-1.5-1.5v3M1070 773.5h3m-1.5-1.5v3M1070 770.5h3m-1.5-1.5v3M1071 774.5h3m-1.5-1.5v3M1071 772.5h3m-1.5-1.5v3M1072 768.5h3m-1.5-1.5v3M1072 772.5h3m-1.5-1.5v3M1072 769.5h3m-1.5-1.5v3M1073 771.5h3m-1.5-1.5v3M1073 767.5h3m-1.5-1.5v3M1073 770.5h3m-1.5-1.5v3M1074 768.5h3m-1.5-1.5v3M1075 765.5h3m-1.5-1.5v3M1075 767.5h3m-1.5-1.5v3M1076 765.5h3m-1.5-1.5v3M1076 767.5h3m-1.5-1.5v3M1076 763.5h3m-1.5-1.5v3M1077 765.5h3m-1.5-1.5v3M1077 762.5h3m-1.5-1.5v3M1078 764.5h3m-1.5-1.5v3M1078 762.5h3m-1.5-1.5v3M1078 764.5h3m-1.5-1.5v3M1079 762.5h3m-1.5-1.5v3M1079 759.5h3m-1.5-1.5v3M1079 761.5h3m-1.5-1.5v3M1081 760.5h3m-1.5-1.5v3M1081 757.5h3m-1.5-1.5v3M1081 759.5h3m-1.5-1.5v3M1082 756.5h3m-1.5-1.5v3M1082 754.5h3m-1.5-1.5v3M1082 756.5h3m-1.5-1.5v3M1083 754.5h3m-1.5-1.5v3M1083 757.5h3m-1.5-1.5v3M1083 753.5h3m-1.5-1.5v3M1084 755.5h3m-1.5-1.5v3M1085 751.5h3m-1.5-1.5v3M1086 748.5h3m-1.5-1.5v3M1087 751.5h3m-1.5-1.5v3M1087 748.5h3m-1.5-1.5v3M1088 745.5h3m-1.5-1.5v3M1089 747.5h3m-1.5-1.5v3M1089 744.5h3m-1.5-1.5v3M1089 746.5h3m-1.5-1.5v3M1089 744.5h3m-1.5-1.5v3M1090 742.5h3m-1.5-1.5v3M1090 740.5h3m-1.5-1.5v3M1091 737.5h3m-1.5-1.5v3M1091 739.5h3m-1.5-1.5v3M1092 735.5h3m-1.5-1.5v3M1092 732.5h3m-1.5-1.5v3M1092 728.5h3m-1.5-1.5v3M1092 724.5h3m-1.5-1.5v3M1093 712.5h3m-1.5-1.5v3M1093 700.5h3m-1.5-1.5v3M1093 683.5h3m-1.5-1.5v3M1093 666.5h3m-1.5-1.5v3M1094 646.5h3m-1.5-1.5v3M1094 630.5h3m-1.5-1.5v3M1094 610.5h3m-1.5-1.5v3M1094 590.5h3m-1.5-1.5v3M1095 575.5h3m-1.5-1.5v3M1095 563.5h3m-1.5-1.5v3M1095 546.5h3m-1.5-1.5v3M1095 535.5h3m-1.5-1.5v3M1096 523.5h3m-1.5-1.5v3M1096 510.5h3m-1.5-1.5v3M1096 494.5h3m-1.5-1.5v3M1096 486.5h3m-1.5-1.5v3M1097 470.5h3m-1.5-1.5v3M1097 461.5h3m-1.5-1.5v3M1097 448.5h3m-1.5-1.5v3M1097 439.5h3m-1.5-1.5v3M1097 427.5h3m-1.5-1.5v3M1098 420.5h3m-1.5-1.5v3M1098 413.5h3m-1.5-1.5v3M1098 408.5h3m-1.5-1.5v3M1098 404.5h3m-1.5-1.5v3M1099 402.5h3m-1.5-1.5v3M1099 395.5h3m-1.5-1.5v3M1100 393.5h3m-1.5-1.5v3M1100 388.5h3m-1.5-1.5v3M1100 386.5h3m-1.5-1.5v3M1101 384.5h3m-1.5-1.5v3M1101 380.5h3m-1.5-1.5v3M1101 377.5h3m-1.5-1.5v3M1102 375.5h3m-1.5-1.5v3M1102 373.5h3m-1.5-1.5v3M1103 369.5h3m-1.5-1.5v3M1103 372.5h3m-1.5-1.5v3M1103 367.5h3m-1.5-1.5v3M1104 365.5h3m-1.5-1.5v3M1104 367.5h3m-1.5-1.5v3M1104 365.5h3m-1.5-1.5v3M1105 363.5h3m-1.5-1.5v3M1105 361.5h3m-1.5-1.5v3M1106 363.5h3m-1.5-1.5v3M1106 359.5h3m-1.5-1.5v3M1107 362.5h3m-1.5-1.5v3M1107 356.5h3m-1.5-1.5v3M1108 359.5h3m-1.5-1.5v3M1108 356.5h3m-1.5-1.5v3M1108 359.5h3m-1.5-1.5v3M1108 355.5h3m-1.5-1.5v3M1110 353.5h3m-1.5-1.5v3M1111 356.5h3m-1.5-1.5v3M1111 352.5h3m-1.5-1.5v3M1111 354.5h3m-1.5-1.5v3M1112 356.5h3m-1.5-1.5v3M1112 353.5h3m-1.5-1.5v3M1113 356.5h3m-1.5-1.5v3M1113 352.5h3m-1.5-1.5v3M1113 355.5h3m-1.5-1.5v3M1114 353.5h3m-1.5-1.5v3M1115 355.5h3m-1.5-1.5v3M1116 353.5h3m-1.5-1.5v3M1116 355.5h3m-1.5-1.5v3M1118 356.5h3m-1.5-1.5v3M1118 354.5h3m-1.5-1.5v3M1119 358.5h3m-1.5-1.5v3M1119 355.5h3m-1.5-1.5v3M1119 359.5h3m-1.5-1.5v3M1120 356.5h3m-1.5-1.5v3M1121 359.5h3m-1.5-1.5v3M1121 356.5h3m-1.5-1.5v3M1121 360.5h3m-1.5-1.5v3M1121 358.5h3m-1.5-1.5v3M1122 360.5h3m-1.5-1.5v3M1122 362.5h3m-1.5-1.5v3M1122 360.5h3m-1.5-1.5v3M1124 360.5h3m-1.5-1.5v3M1124 363.5h3m-1.5-1.5v3M1124 361.5h3m-1.5-1.5v3M1125 363.5h3m-1.5-1.5v3M1126 367.5h3m-1.5-1.5v3M1126 363.5h3m-1.5-1.5v3M1126 366.5h3m-1.5-1.5v3M1127 369.5h3m-1.5-1.5v3M1127 372.5h3m-1.5-1.5v3M1128 375.5h3m-1.5-1.5v3M1128 373.5h3m-1.5-1.5v3M1129 376.5h3m-1.5-1.5v3M1129 379.5h3m-1.5-1.5v3M1130 382.5h3m-1.5-1.5v3M1130 384.5h3m-1.5-1.5v3M1131 386.5h3m-1.5-1.5v3M1131 392.5h3m-1.5-1.5v3M1132 394.5h3m-1.5-1.5v3M1132 398.5h3m-1.5-1.5v3M1132 405.5h3m-1.5-1.5v3M1133 409.5h3m-1.5-1.5v3M1133 412.5h3m-1.5-1.5v3M1133 420.5h3m-1.5-1.5v3M1133 426.5h3m-1.5-1.5v3M1134 430.5h3m-1.5-1.5v3M1134 435.5h3m-1.5-1.5v3M1134 445.5h3m-1.5-1.5v3M1134 455.5h3m-1.5-1.5v3M1135 462.5h3m-1.5-1.5v3M1135 475.5h3m-1.5-1.5v3M1135 489.5h3m-1.5-1.5v3M1135 498.5h3m-1.5-1.5v3M1136 511.5h3m-1.5-1.5v3M1136 523.5h3m-1.5-1.5v3M1136 539.5h3m-1.5-1.5v3M1136 548.5h3m-1.5-1.5v3M1137 558.5h3m-1.5-1.5v3M1137 570.5h3m-1.5-1.5v3M1137 582.5h3m-1.5-1.5v3M1137 596.5h3m-1.5-1.5v3M1138 605.5h3m-1.5-1.5v3M1138 618.5h3m-1.5-1.5v3M1138 629.5h3m-1.5-1.5v3M1138 643.5h3m-1.5-1.5v3M1139 652.5h3m-1.5-1.5v3M1139 665.5h3m-1.5-1.5v3M1139 676.5h3m-1.5-1.5v3M1139 687.5h3m-1.5-1.5v3M1139 696.5h3m-1.5-1.5v3M1140 702.5h3m-1.5-1.5v3M1140 707.5h3m-1.5-1.5v3M1140 716.5h3m-1.5-1.5v3M1140 719.5h3m-1.5-1.5v3M1141 726.5h3m-1.5-1.5v3M1141 728.5h3m-1.5-1.5v3M1141 732.5h3m-1.5-1.5v3M1141 738.5h3m-1.5-1.5v3M1142 744.5h3m-1.5-1.5v3M1142 747.5h3m-1.5-1.5v3M1142 750.5h3m-1.5-1.5v3M1142 752.5h3m-1.5-1.5v3M1143 755.5h3m-1.5-1.5v3M1143 759.5h3m-1.5-1.5v3M1143 757.5h3m-1.5-1.5v3M1144 760.5h3m-1.5-1.5v3M1144 762.5h3m-1.5-1.5v3M1145 760.5h3m-1.5-1.5v3M1145 764.5h3m-1.5-1.5v3M1145 762.5h3m-1.5-1.5v3M1145 764.5h3m-1.5-1.5v3M1146 768.5h3m-1.5-1.5v3M1147 766.5h3m-1.5-1.5v3M1147 769.5h3m-1.5-1.5v3M1147 767.5h3m-1.5-1.5v3M1148 771.5h3m-1.5-1.5v3M1148 767.5h3m-1.5-1.5v3M1149 770.5h3m-1.5-1.5v3M1150 773.5h3m-1.5-1.5v3M1150 771.5h3m-1.5-1.5v3M1151 769.5h3m-1.5-1.5v3M1151 772.5h3m-1.5-1.5v3M1151 770.5h3m-1.5-1.5v3M1152 772.5h3m-1.5-1.5v3M1152 768.5h3m-1.5-1.5v3M1152 772.5h3m-1.5-1.5v3M1153 769.5h3m-1.5-1.5v3M1153 771.5h3m-1.5-1.5v3M1154 768.5h3m-1.5-1.5v3M1155 771.5h3m-1.5-1.5v3M1155 769.5h3m-1.5-1.5v3M1155 771.5h3m-1.5-1.5v3M1155 768.5h3m-1.5-1.5v3M1157 769.5h3m-1.5-1.5v3M1157 767.5h3m-1.5-1.5v3M1157 771.5h3m-1.5-1.5v3M1157 766.5h3m-1.5-1.5v3M1158 769.5h3m-1.5-1.5v3M1158 766.5h3m-1.5-1.5v3M1159 768.5h3m-1.5-1.5v3M1160 765.5h3m-1.5-1.5v3M1161 763.5h3m-1.5-1.5v3M1162 758.5h3m-1.5-1.5v3M1162 761.5h3m-1.5-1.5v3M1162 758.5h3m-1.5-1.5v3M1163 756.5h3m-1.5-1.5v3M1163 753.5h3m-1.5-1.5v3M1164 751.5h3m-1.5-1.5v3M1164 749.5h3m-1.5-1.5v3M1164 745.5h3m-1.5-1.5v3M1165 739.5h3m-1.5-1.5v3M1165 736.5h3m-1.5-1.5v3M1165 732.5h3m-1.5-1.5v3M1165 728.5h3m-1.5-1.5v3M1166 721.5h3m-1.5-1.5v3M1166 708.5h3m-1.5-1.5v3M1166 695.5h3m-1.5-1.5v3M1166 681.5h3m-1.5-1.5v3M1167 665.5h3m-1.5-1.5v3M1167 646.5h3m-1.5-1.5v3M1167 630.5h3m-1.5-1.5v3M1167 609.5h3m-1.5-1.5v3M1168 590.5h3m-1.5-1.5v3M1168 572.5h3m-1.5-1.5v3M1168 553.5h3m-1.5-1.5v3M1168 535.5h3m-1.5-1.5v3M1169 519.5h3m-1.5-1.5v3M1169 500.5h3m-1.5-1.5v3M1169 477.5h3m-1.5-1.5v3M1169 456.5h3m-1.5-1.5v3M1169 437.5h3m-1.5-1.5v3M1170 419.5h3m-1.5-1.5v3M1170 405.5h3m-1.5-1.5v3M1170 400.5h3m-1.5-1.5v3M1170 393.5h3m-1.5-1.5v3M1171 391.5h3m-1.5-1.5v3M1171 389.5h3m-1.5-1.5v3M1171 387.5h3m-1.5-1.5v3M1172 385.5h3m-1.5-1.5v3M1172 382.5h3m-1.5-1.5v3M1172 378.5h3m-1.5-1.5v3M1173 374.5h3m-1.5-1.5v3M1174 371.5h3m-1.5-1.5v3M1174 367.5h3m-1.5-1.5v3M1174 369.5h3m-1.5-1.5v3M1175 366.5h3m-1.5-1.5v3M1175 368.5h3m-1.5-1.5v3M1175 366.5h3m-1.5-1.5v3M1176 364.5h3m-1.5-1.5v3M1176 362.5h3m-1.5-1.5v3M1176 365.5h3m-1.5-1.5v3M1177 360.5h3m-1.5-1.5v3M1177 364.5h3m-1.5-1.5v3M1177 360.5h3m-1.5-1.5v3M1179 362.5h3m-1.5-1.5v3M1179 359.5h3m-1.5-1.5v3M1180 361.5h3m-1.5-1.5v3M1181 359.5h3m-1.5-1.5v3M1181 357.5h3m-1.5-1.5v3M1181 360.5h3m-1.5-1.5v3M1182 357.5h3m-1.5-1.5v3M1183 355.5h3m-1.5-1.5v3M1183 357.5h3m-1.5-1.5v3M1184 355.5h3m-1.5-1.5v3M1184 353.5h3m-1.5-1.5v3M1184 355.5h3m-1.5-1.5v3M1185 351.5h3m-1.5-1.5v3M1185 349.5h3m-1.5-1.5v3M1185 351.5h3m-1.5-1.5v3M1186 348.5h3m-1.5-1.5v3M1186 350.5h3m-1.5-1.5v3M1186 348.5h3m-1.5-1.5v3M1187 345.5h3m-1.5-1.5v3M1187 347.5h3m-1.5-1.5v3M1187 344.5h3m-1.5-1.5v3M1188 346.5h3m-1.5-1.5v3M1188 344.5h3m-1.5-1.5v3M1189 348.5h3m-1.5-1.5v3M1190 345.5h3m-1.5-1.5v3M1190 348.5h3m-1.5-1.5v3M1191 350.5h3m-1.5-1.5v3M1191 347.5h3m-1.5-1.5v3M1192 350.5h3m-1.5-1.5v3M1192 352.5h3m-1.5-1.5v3M1193 350.5h3m-1.5-1.5v3M1193 353.5h3m-1.5-1.5v3M1193 356.5h3m-1.5-1.5v3M1194 358.5h3m-1.5-1.5v3M1194 356.5h3m-1.5-1.5v3M1195 359.5h3m-1.5-1.5v3M1195 362.5h3m-1.5-1.5v3M1196 360.5h3m-1.5-1.5v3M1196 362.5h3m-1.5-1.5v3M1197 364.5h3m-1.5-1.5v3M1198 368.5h3m-1.5-1.5v3M1199 371.5h3m-1.5-1.5v3M1199 369.5h3m-1.5-1.5v3M1200 373.5h3m-1.5-1.5v3M1200 371.5h3m-1.5-1.5v3M1201 374.5h3m-1.5-1.5v3M1201 377.5h3m-1.5-1.5v3M1201 374.5h3m-1.5-1.5v3M1201 379.5h3m-1.5-1.5v3M1202 381.5h3m-1.5-1.5v3M1202 379.5h3m-1.5-1.5v3M1203 383.5h3m-1.5-1.5v3M1203 385.5h3m-1.5-1.5v3M1203 388.5h3m-1.5-1.5v3M1203 391.5h3m-1.5-1.5v3M1204 393.5h3m-1.5-1.5v3M1204 395.5h3m-1.5-1.5v3M1204 400.5h3m-1.5-1.5v3M1205 406.5h3m-1.5-1.5v3M1206 412.5h3m-1.5-1.5v3M1206 410.5h3m-1.5-1.5v3M1206 415.5h3m-1.5-1.5v3M1207 417.5h3m-1.5-1.5v3M1207 419.5h3m-1.5-1.5v3M1207 422.5h3m-1.5-1.5v3M1208 420.5h3m-1.5-1.5v3M1208 423.5h3m-1.5-1.5v3M1208 425.5h3m-1.5-1.5v3M1209 427.5h3m-1.5-1.5v3M1209 431.5h3m-1.5-1.5v3M1209 434.5h3m-1.5-1.5v3M1210 436.5h3m-1.5-1.5v3M1210 445.5h3m-1.5-1.5v3M1210 451.5h3m-1.5-1.5v3M1211 463.5h3m-1.5-1.5v3M1211 476.5h3m-1.5-1.5v3M1211 493.5h3m-1.5-1.5v3M1211 508.5h3m-1.5-1.5v3M1211 520.5h3m-1.5-1.5v3M1212 536.5h3m-1.5-1.5v3M1212 545.5h3m-1.5-1.5v3M1212 558.5h3m-1.5-1.5v3M1212 570.5h3m-1.5-1.5v3M1213 579.5h3m-1.5-1.5v3M1213 590.5h3m-1.5-1.5v3M1213 600.5h3m-1.5-1.5v3M1213 612.5h3m-1.5-1.5v3M1214 620.5h3m-1.5-1.5v3M1214 630.5h3m-1.5-1.5v3M1214 642.5h3m-1.5-1.5v3M1214 651.5h3m-1.5-1.5v3M1215 661.5h3m-1.5-1.5v3M1215 671.5h3m-1.5-1.5v3M1215 678.5h3m-1.5-1.5v3M1215 687.5h3m-1.5-1.5v3M1216 695.5h3m-1.5-1.5v3M1216 700.5h3m-1.5-1.5v3M1216 708.5h3m-1.5-1.5v3M1216 712.5h3m-1.5-1.5v3M1217 720.5h3m-1.5-1.5v3M1217 724.5h3m-1.5-1.5v3M1217 727.5h3m-1.5-1.5v3M1217 732.5h3m-1.5-1.5v3M1217 735.5h3m-1.5-1.5v3M1218 738.5h3m-1.5-1.5v3M1218 744.5h3m-1.5-1.5v3M1218 749.5h3m-1.5-1.5v3M1218 753.5h3m-1.5-1.5v3M1219 758.5h3m-1.5-1.5v3M1220 755.5h3m-1.5-1.5v3M1220 758.5h3m-1.5-1.5v3M1221 755.5h3m-1.5-1.5v3M1221 759.5h3m-1.5-1.5v3M1221 757.5h3m-1.5-1.5v3M1222 759.5h3m-1.5-1.5v3M1223 757.5h3m-1.5-1.5v3M1223 759.5h3m-1.5-1.5v3M1223 761.5h3m-1.5-1.5v3M1224 758.5h3m-1.5-1.5v3M1224 760.5h3m-1.5-1.5v3M1225 757.5h3m-1.5-1.5v3M1225 759.5h3m-1.5-1.5v3M1226 761.5h3m-1.5-1.5v3M1226 759.5h3m-1.5-1.5v3M1227 757.5h3m-1.5-1.5v3M1228 759.5h3m-1.5-1.5v3M1228 756.5h3m-1.5-1.5v3M1228 758.5h3m-1.5-1.5v3M1229 755.5h3m-1.5-1.5v3M1229 752.5h3m-1.5-1.5v3M1229 755.5h3m-1.5-1.5v3M1229 753.5h3m-1.5-1.5v3M1230 750.5h3m-1.5-1.5v3M1231 748.5h3m-1.5-1.5v3M1231 746.5h3m-1.5-1.5v3M1231 744.5h3m-1.5-1.5v3M1232 746.5h3m-1.5-1.5v3M1233 742.5h3m-1.5-1.5v3M1233 746.5h3m-1.5-1.5v3M1233 742.5h3m-1.5-1.5v3M1234 745.5h3m-1.5-1.5v3M1235 742.5h3m-1.5-1.5v3M1236 745.5h3m-1.5-1.5v3M1236 742.5h3m-1.5-1.5v3M1236 744.5h3m-1.5-1.5v3M1237 742.5h3m-1.5-1.5v3M1237 744.5h3m-1.5-1.5v3M1238 741.5h3m-1.5-1.5v3M1239 738.5h3m-1.5-1.5v3M1239 736.5h3m-1.5-1.5v3M1239 730.5h3m-1.5-1.5v3M1240 722.5h3m-1.5-1.5v3M1240 719.5h3m-1.5-1.5v3M1240 712.5h3m-1.5-1.5v3M1241 709.5h3m-1.5-1.5v3M1241 703.5h3m-1.5-1.5v3M1241 698.5h3m-1.5-1.5v3M1241 691.5h3m-1.5-1.5v3M1241 682.5h3m-1.5-1.5v3M1242 674.5h3m-1.5-1.5v3M1242 664.5h3m-1.5-1.5v3M1242 650.5h3m-1.5-1.5v3M1242 638.5h3m-1.5-1.5v3M1243 625.5h3m-1.5-1.5v3M1243 613.5h3m-1.5-1.5v3M1243 602.5h3m-1.5-1.5v3M1243 585.5h3m-1.5-1.5v3M1244 573.5h3m-1.5-1.5v3M1244 562.5h3m-1.5-1.5v3M1244 552.5h3m-1.5-1.5v3M1244 539.5h3m-1.5-1.5v3M1245 530.5h3m-1.5-1.5v3M1245 518.5h3m-1.5-1.5v3M1245 505.5h3m-1.5-1.5v3M1245 493.5h3m-1.5-1.5v3M1246 482.5h3m-1.5-1.5v3M1246 472.5h3m-1.5-1.5v3M1246 460.5h3m-1.5-1.5v3M1246 450.5h3m-1.5-1.5v3M1247 439.5h3m-1.5-1.5v3M1247 427.5h3m-1.5-1.5v3M1247 422.5h3m-1.5-1.5v3M1247 411.5h3m-1.5-1.5v3M1247 405.5h3m-1.5-1.5v3M1248 401.5h3m-1.5-1.5v3M1248 395.5h3m-1.5-1.5v3M1248 393.5h3m-1.5-1.5v3M1249 389.5h3m-1.5-1.5v3M1249 386.5h3m-1.5-1.5v3M1249 382.5h3m-1.5-1.5v3M1250 380.5h3m-1.5-1.5v3M1250 377.5h3m-1.5-1.5v3M1251 373.5h3m-1.5-1.5v3M1251 368.5h3m-1.5-1.5v3M1252 366.5h3m-1.5-1.5v3M1253 363.5h3m-1.5-1.5v3M1253 365.5h3m-1.5-1.5v3M1253 360.5h3m-1.5-1.5v3M1253 362.5h3m-1.5-1.5v3M1254 359.5h3m-1.5-1.5v3M1255 357.5h3m-1.5-1.5v3M1255 359.5h3m-1.5-1.5v3M1256 355.5h3m-1.5-1.5v3M1256 358.5h3m-1.5-1.5v3M1256 353.5h3m-1.5-1.5v3M1257 357.5h3m-1.5-1.5v3M1257 355.5h3m-1.5-1.5v3M1258 350.5h3m-1.5-1.5v3M1258 353.5h3m-1.5-1.5v3M1259 351.5h3m-1.5-1.5v3M1259 349.5h3m-1.5-1.5v3M1259 351.5h3m-1.5-1.5v3M1260 347.5h3m-1.5-1.5v3M1261 351.5h3m-1.5-1.5v3M1261 348.5h3m-1.5-1.5v3M1262 346.5h3m-1.5-1.5v3M1262 348.5h3m-1.5-1.5v3M1263 350.5h3m-1.5-1.5v3M1264 347.5h3m-1.5-1.5v3M1264 350.5h3m-1.5-1.5v3M1265 347.5h3m-1.5-1.5v3M1265 349.5h3m-1.5-1.5v3M1265 351.5h3m-1.5-1.5v3M1267 350.5h3m-1.5-1.5v3M1267 352.5h3m-1.5-1.5v3M1267 355.5h3m-1.5-1.5v3M1268 352.5h3m-1.5-1.5v3M1268 354.5h3m-1.5-1.5v3M1269 358.5h3m-1.5-1.5v3M1270 361.5h3m-1.5-1.5v3M1271 363.5h3m-1.5-1.5v3M1272 367.5h3m-1.5-1.5v3M1272 365.5h3m-1.5-1.5v3M1273 368.5h3m-1.5-1.5v3M1273 370.5h3m-1.5-1.5v3M1273 368.5h3m-1.5-1.5v3M1273 371.5h3m-1.5-1.5v3M1274 369.5h3m-1.5-1.5v3M1274 371.5h3m-1.5-1.5v3M1274 373.5h3m-1.5-1.5v3M1275 377.5h3m-1.5-1.5v3M1275 380.5h3m-1.5-1.5v3M1276 385.5h3m-1.5-1.5v3M1277 382.5h3m-1.5-1.5v3M1277 385.5h3m-1.5-1.5v3M1277 389.5h3m-1.5-1.5v3M1278 387.5h3m-1.5-1.5v3M1278 389.5h3m-1.5-1.5v3M1278 392.5h3m-1.5-1.5v3M1278 394.5h3m-1.5-1.5v3M1279 396.5h3m-1.5-1.5v3M1279 399.5h3m-1.5-1.5v3M1280 402.5h3m-1.5-1.5v3M1280 404.5h3m-1.5-1.5v3M1280 411.5h3m-1.5-1.5v3M1280 413.5h3m-1.5-1.5v3M1281 415.5h3m-1.5-1.5v3M1281 421.5h3m-1.5-1.5v3M1281 424.5h3m-1.5-1.5v3M1281 429.5h3m-1.5-1.5v3M1282 432.5h3m-1.5-1.5v3M1282 440.5h3m-1.5-1.5v3M1282 444.5h3m-1.5-1.5v3M1282 451.5h3m-1.5-1.5v3M1283 459.5h3m-1.5-1.5v3M1283 468.5h3m-1.5-1.5v3M1283 480.5h3m-1.5-1.5v3M1283 492.5h3m-1.5-1.5v3M1283 503.5h3m-1.5-1.5v3M1284 514.5h3m-1.5-1.5v3M1284 527.5h3m-1.5-1.5v3M1284 535.5h3m-1.5-1.5v3M1284 545.5h3m-1.5-1.5v3M1285 554.5h3m-1.5-1.5v3M1285 568.5h3m-1.5-1.5v3M1285 578.5h3m-1.5-1.5v3M1285 586.5h3m-1.5-1.5v3M1286 596.5h3m-1.5-1.5v3M1286 607.5h3m-1.5-1.5v3M1286 619.5h3m-1.5-1.5v3M1286 629.5h3m-1.5-1.5v3M1287 640.5h3m-1.5-1.5v3M1287 648.5h3m-1.5-1.5v3M1287 661.5h3m-1.5-1.5v3M1287 667.5h3m-1.5-1.5v3M1288 681.5h3m-1.5-1.5v3M1288 688.5h3m-1.5-1.5v3M1288 694.5h3m-1.5-1.5v3M1288 701.5h3m-1.5-1.5v3M1289 711.5h3m-1.5-1.5v3M1289 713.5h3m-1.5-1.5v3M1289 719.5h3m-1.5-1.5v3M1289 722.5h3m-1.5-1.5v3M1289 728.5h3m-1.5-1.5v3M1290 731.5h3m-1.5-1.5v3M1290 733.5h3m-1.5-1.5v3M1290 736.5h3m-1.5-1.5v3M1291 740.5h3m-1.5-1.5v3M1291 746.5h3m-1.5-1.5v3M1291 748.5h3m-1.5-1.5v3M1292 751.5h3m-1.5-1.5v3M1292 755.5h3m-1.5-1.5v3M1293 760.5h3m-1.5-1.5v3M1294 757.5h3m-1.5-1.5v3M1294 759.5h3m-1.5-1.5v3M1295 762.5h3m-1.5-1.5v3M1295 764.5h3m-1.5-1.5v3M1296 766.5h3m-1.5-1.5v3M1297 768.5h3m-1.5-1.5v3M1299 770.5h3m-1.5-1.5v3M1299 768.5h3m-1.5-1.5v3M1300 771.5h3m-1.5-1.5v3M1301 768.5h3m-1.5-1.5v3M1301 770.5h3m-1.5-1.5v3M1301 772.5h3m-1.5-1.5v3M1301 770.5h3m-1.5-1.5v3M1302 773.5h3m-1.5-1.5v3M1302 769.5h3m-1.5-1.5v3M1303 772.5h3m-1.5-1.5v3M1304 770.5h3m-1.5-1.5v3M1304 768.5h3m-1.5-1.5v3M1305 771.5h3m-1.5-1.5v3M1305 769.5h3m-1.5-1.5v3M1306 767.5h3m-1.5-1.5v3M1307 769.5h3m-1.5-1.5v3M1307 765.5h3m-1.5-1.5v3M1308 769.5h3m-1.5-1.5v3M1308 766.5h3m-1.5-1.5v3M1308 764.5h3m-1.5-1.5v3M1309 767.5h3m-1.5-1.5v3M1309 765.5h3m-1.5-1.5v3M1309 767.5h3m-1.5-1.5v3M1309 765.5h3m-1.5-1.5v3M1310 763.5h3m-1.5-1.5v3M1310 765.5h3m-1.5-1.5v3M1311 763.5h3m-1.5-1.5v3M1311 759.5h3m-1.5-1.5v3M1312 763.5h3m-1.5-1.5v3M1312 759.5h3m-1.5-1.5v3M1312 757.5h3m-1.5-1.5v3M1313 754.5h3m-1.5-1.5v3M1313 750.5h3m-1.5-1.5v3M1314 746.5h3m-1.5-1.5v3M1314 739.5h3m-1.5-1.5v3M1314 733.5h3m-1.5-1.5v3M1315 720.5h3m-1.5-1.5v3M1315 704.5h3m-1.5-1.5v3M1315 689.5h3m-1.5-1.5v3M1315 669.5h3m-1.5-1.5v3M1316 646.5h3m-1.5-1.5v3M1316 627.5h3m-1.5-1.5v3M1316 608.5h3m-1.5-1.5v3M1316 584.5h3m-1.5-1.5v3M1317 566.5h3m-1.5-1.5v3M1317 552.5h3m-1.5-1.5v3M1317 540.5h3m-1.5-1.5v3M1317 526.5h3m-1.5-1.5v3M1318 513.5h3m-1.5-1.5v3M1318 498.5h3m-1.5-1.5v3M1318 483.5h3m-1.5-1.5v3M1318 471.5h3m-1.5-1.5v3M1319 459.5h3m-1.5-1.5v3M1319 446.5h3m-1.5-1.5v3M1319 435.5h3m-1.5-1.5v3M1319 427.5h3m-1.5-1.5v3M1319 416.5h3m-1.5-1.5v3M1320 410.5h3m-1.5-1.5v3M1320 406.5h3m-1.5-1.5v3M1320 398.5h3m-1.5-1.5v3M1321 396.5h3m-1.5-1.5v3M1321 389.5h3m-1.5-1.5v3M1321 386.5h3m-1.5-1.5v3M1322 381.5h3m-1.5-1.5v3M1322 377.5h3m-1.5-1.5v3M1323 375.5h3m-1.5-1.5v3M1323 373.5h3m-1.5-1.5v3M1324 370.5h3m-1.5-1.5v3M1324 368.5h3m-1.5-1.5v3M1324 370.5h3m-1.5-1.5v3M1324 368.5h3m-1.5-1.5v3M1325 364.5h3m-1.5-1.5v3M1325 360.5h3m-1.5-1.5v3M1326 358.5h3m-1.5-1.5v3M1327 360.5h3m-1.5-1.5v3M1327 357.5h3m-1.5-1.5v3M1327 354.5h3m-1.5-1.5v3M1328 352.5h3m-1.5-1.5v3M1329 354.5h3m-1.5-1.5v3M1329 351.5h3m-1.5-1.5v3M1330 349.5h3m-1.5-1.5v3M1332 347.5h3m-1.5-1.5v3M1332 349.5h3m-1.5-1.5v3M1333 346.5h3m-1.5-1.5v3M1333 349.5h3m-1.5-1.5v3M1334 346.5h3m-1.5-1.5v3M1335 348.5h3m-1.5-1.5v3M1335 344.5h3m-1.5-1.5v3M1335 346.5h3m-1.5-1.5v3M1337 345.5h3m-1.5-1.5v3M1337 347.5h3m-1.5-1.5v3M1337 345.5h3m-1.5-1.5v3M1338 348.5h3m-1.5-1.5v3M1339 346.5h3m-1.5-1.5v3M1340 349.5h3m-1.5-1.5v3M1341 347.5h3m-1.5-1.5v3M1341 350.5h3m-1.5-1.5v3M1343 350.5h3m-1.5-1.5v3M1343 352.5h3m-1.5-1.5v3M1344 354.5h3m-1.5-1.5v3M1345 356.5h3m-1.5-1.5v3M1347 357.5h3m-1.5-1.5v3M1348 361.5h3m-1.5-1.5v3M1349 364.5h3m-1.5-1.5v3M1349 361.5h3m-1.5-1.5v3M1350 364.5h3m-1.5-1.5v3M1350 366.5h3m-1.5-1.5v3M1350 364.5h3m-1.5-1.5v3M1351 366.5h3m-1.5-1.5v3M1351 368.5h3m-1.5-1.5v3M1352 370.5h3m-1.5-1.5v3M1354 373.5h3m-1.5-1.5v3M1354 375.5h3m-1.5-1.5v3M1355 378.5h3m-1.5-1.5v3M1355 380.5h3m-1.5-1.5v3M1356 378.5h3m-1.5-1.5v3M1356 380.5h3m-1.5-1.5v3M1356 382.5h3m-1.5-1.5v3M1357 380.5h3m-1.5-1.5v3M1357 384.5h3m-1.5-1.5v3M1358 382.5h3m-1.5-1.5v3M1358 384.5h3m-1.5-1.5v3M1359 388.5h3m-1.5-1.5v3M1359 386.5h3m-1.5-1.5v3M1360 390.5h3m-1.5-1.5v3M1360 388.5h3m-1.5-1.5v3M1361 391.5h3m-1.5-1.5v3M1361 389.5h3m-1.5-1.5v3M1361 391.5h3m-1.5-1.5v3M1362 394.5h3m-1.5-1.5v3M1362 397.5h3m-1.5-1.5v3M1363 395.5h3m-1.5-1.5v3M1363 397.5h3m-1.5-1.5v3M1364 400.5h3m-1.5-1.5v3M1366 401.5h3m-1.5-1.5v3M1366 403.5h3m-1.5-1.5v3M1367 405.5h3m-1.5-1.5v3M1367 407.5h3m-1.5-1.5v3M1367 405.5h3m-1.5-1.5v3M1367 409.5h3m-1.5-1.5v3M1368 412.5h3m-1.5-1.5v3M1368 415.5h3m-1.5-1.5v3M1369 413.5h3m-1.5-1.5v3M1369 415.5h3m-1.5-1.5v3M1369 420.5h3m-1.5-1.5v3M1370 418.5h3m-1.5-1.5v3M1370 421.5h3m-1.5-1.5v3M1370 425.5h3m-1.5-1.5v3M1370 427.5h3m-1.5-1.5v3M1371 431.5h3m-1.5-1.5v3M1371 435.5h3m-1.5-1.5v3M1372 437.5h3m-1.5-1.5v3M1372 442.5h3m-1.5-1.5v3M1372 449.5h3m-1.5-1.5v3M1373 455.5h3m-1.5-1.5v3M1373 463.5h3m-1.5-1.5v3M1373 469.5h3m-1.5-1.5v3M1373 477.5h3m-1.5-1.5v3M1373 488.5h3m-1.5-1.5v3M1374 495.5h3m-1.5-1.5v3M1374 505.5h3m-1.5-1.5v3M1374 515.5h3m-1.5-1.5v3M1374 527.5h3m-1.5-1.5v3M1375 539.5h3m-1.5-1.5v3M1375 546.5h3m-1.5-1.5v3M1375 558.5h3m-1.5-1.5v3M1375 567.5h3m-1.5-1.5v3M1376 577.5h3m-1.5-1.5v3M1376 589.5h3m-1.5-1.5v3M1376 598.5h3m-1.5-1.5v3M1376 611.5h3m-1.5-1.5v3M1377 619.5h3m-1.5-1.5v3M1377 631.5h3m-1.5-1.5v3M1377 646.5h3m-1.5-1.5v3M1377 656.5h3m-1.5-1.5v3M1378 668.5h3m-1.5-1.5v3M1378 676.5h3m-1.5-1.5v3M1378 688.5h3m-1.5-1.5v3M1378 696.5h3m-1.5-1.5v3M1379 704.5h3m-1.5-1.5v3M1379 716.5h3m-1.5-1.5v3M1379 721.5h3m-1.5-1.5v3M1379 726.5h3m-1.5-1.5v3M1379 734.5h3m-1.5-1.5v3M1380 737.5h3m-1.5-1.5v3M1380 739.5h3m-1.5-1.5v3M1380 744.5h3m-1.5-1.5v3M1380 747.5h3m-1.5-1.5v3M1381 750.5h3m-1.5-1.5v3M1381 754.5h3m-1.5-1.5v3M1381 756.5h3m-1.5-1.5v3M1382 761.5h3m-1.5-1.5v3M1382 763.5h3m-1.5-1.5v3M1383 765.5h3m-1.5-1.5v3M1383 769.5h3m-1.5-1.5v3M1384 771.5h3m-1.5-1.5v3M1384 769.5h3m-1.5-1.5v3M1385 771.5h3m-1.5-1.5v3M1385 774.5h3m-1.5-1.5v3M1386 771.5h3m-1.5-1.5v3M1386 775.5h3m-1.5-1.5v3M1386 772.5h3m-1.5-1.5v3M1387 777.5h3m-1.5-1.5v3M1388 773.5h3m-1.5-1.5v3M1388 777.5h3m-1.5-1.5v3M1389 775.5h3m-1.5-1.5v3M1389 779.5h3m-1.5-1.5v3M1389 775.5h3m-1.5-1.5v3M1389 779.5h3m-1.5-1.5v3M1390 775.5h3m-1.5-1.5v3M1390 778.5h3m-1.5-1.5v3M1391 776.5h3m-1.5-1.5v3M1392 779.5h3m-1.5-1.5v3M1392 776.5h3m-1.5-1.5v3M1392 779.5h3m-1.5-1.5v3M1392 777.5h3m-1.5-1.5v3M1393 779.5h3m-1.5-1.5v3M1393 777.5h3m-1.5-1.5v3M1393 780.5h3m-1.5-1.5v3M1394 778.5h3m-1.5-1.5v3M1394 776.5h3m-1.5-1.5v3M1395 779.5h3m-1.5-1.5v3M1396 775.5h3m-1.5-1.5v3M1396 777.5h3m-1.5-1.5v3M1397 774.5h3m-1.5-1.5v3M1398 776.5h3m-1.5-1.5v3M1398 772.5h3m-1.5-1.5v3M1398 774.5h3m-1.5-1.5v3M1400 774.5h3m-1.5-1.5v3M1400 771.5h3m-1.5-1.5v3M1401 774.5h3m-1.5-1.5v3M1402 771.5h3m-1.5-1.5v3M1402 769.5h3m-1.5-1.5v3M1404 768.5h3m-1.5-1.5v3M1404 771.5h3m-1.5-1.5v3M1404 768.5h3m-1.5-1.5v3M1405 770.5h3m-1.5-1.5v3M1406 767.5h3m-1.5-1.5v3M1406 765.5h3m-1.5-1.5v3M1408 764.5h3m-1.5-1.5v3M1408 762.5h3m-1.5-1.5v3M1409 764.5h3m-1.5-1.5v3M1409 761.5h3m-1.5-1.5v3M1409 764.5h3m-1.5-1.5v3M1410 761.5h3m-1.5-1.5v3M1411 759.5h3m-1.5-1.5v3M1411 757.5h3m-1.5-1.5v3M1411 759.5h3m-1.5-1.5v3M1412 755.5h3m-1.5-1.5v3M1412 758.5h3m-1.5-1.5v3M1412 755.5h3m-1.5-1.5v3M1413 753.5h3m-1.5-1.5v3M1414 751.5h3m-1.5-1.5v3M1415 748.5h3m-1.5-1.5v3M1415 751.5h3m-1.5-1.5v3M1415 747.5h3m-1.5-1.5v3M1415 749.5h3m-1.5-1.5v3M1416 745.5h3m-1.5-1.5v3M1416 742.5h3m-1.5-1.5v3M1417 740.5h3m-1.5-1.5v3M1417 732.5h3m-1.5-1.5v3M1417 717.5h3m-1.5-1.5v3M1417 703.5h3m-1.5-1.5v3M1418 687.5h3m-1.5-1.5v3M1418 665.5h3m-1.5-1.5v3M1418 644.5h3m-1.5-1.5v3M1418 623.5h3m-1.5-1.5v3M1419 603.5h3m-1.5-1.5v3M1419 584.5h3m-1.5-1.5v3M1419 567.5h3m-1.5-1.5v3M1419 554.5h3m-1.5-1.5v3M1420 544.5h3m-1.5-1.5v3M1420 535.5h3m-1.5-1.5v3M1420 525.5h3m-1.5-1.5v3M1420 518.5h3m-1.5-1.5v3M1421 508.5h3m-1.5-1.5v3M1421 501.5h3m-1.5-1.5v3M1421 494.5h3m-1.5-1.5v3M1421 485.5h3m-1.5-1.5v3M1421 477.5h3m-1.5-1.5v3M1422 470.5h3m-1.5-1.5v3M1422 462.5h3m-1.5-1.5v3M1422 457.5h3m-1.5-1.5v3M1422 446.5h3m-1.5-1.5v3M1423 443.5h3m-1.5-1.5v3M1423 436.5h3m-1.5-1.5v3M1423 430.5h3m-1.5-1.5v3M1423 424.5h3m-1.5-1.5v3M1424 419.5h3m-1.5-1.5v3M1424 416.5h3m-1.5-1.5v3M1424 411.5h3m-1.5-1.5v3M1424 405.5h3m-1.5-1.5v3M1425 399.5h3m-1.5-1.5v3M1425 393.5h3m-1.5-1.5v3M1426 386.5h3m-1.5-1.5v3M1426 381.5h3m-1.5-1.5v3M1427 377.5h3m-1.5-1.5v3M1427 374.5h3m-1.5-1.5v3M1427 372.5h3m-1.5-1.5v3M1427 369.5h3m-1.5-1.5v3M1428 367.5h3m-1.5-1.5v3M1429 365.5h3m-1.5-1.5v3M1429 363.5h3m-1.5-1.5v3M1430 360.5h3m-1.5-1.5v3M1430 362.5h3m-1.5-1.5v3M1431 358.5h3m-1.5-1.5v3M1432 355.5h3m-1.5-1.5v3M1433 353.5h3m-1.5-1.5v3M1433 357.5h3m-1.5-1.5v3M1434 352.5h3m-1.5-1.5v3M1434 354.5h3m-1.5-1.5v3M1435 352.5h3m-1.5-1.5v3M1435 354.5h3m-1.5-1.5v3M1435 352.5h3m-1.5-1.5v3M1436 350.5h3m-1.5-1.5v3M1437 352.5h3m-1.5-1.5v3M1437 349.5h3m-1.5-1.5v3M1438 347.5h3m-1.5-1.5v3M1439 350.5h3m-1.5-1.5v3M1439 346.5h3m-1.5-1.5v3M1439 350.5h3m-1.5-1.5v3M1440 346.5h3m-1.5-1.5v3M1442 349.5h3m-1.5-1.5v3M1442 347.5h3m-1.5-1.5v3M1442 345.5h3m-1.5-1.5v3M1442 347.5h3m-1.5-1.5v3M1443 345.5h3m-1.5-1.5v3M1443 347.5h3m-1.5-1.5v3M1444 344.5h3m-1.5-1.5v3M1445 348.5h3m-1.5-1.5v3M1445 344.5h3m-1.5-1.5v3M1445 348.5h3m-1.5-1.5v3M1445 344.5h3m-1.5-1.5v3M1446 347.5h3m-1.5-1.5v3M1446 344.5h3m-1.5-1.5v3M1446 347.5h3m-1.5-1.5v3M1447 344.5h3m-1.5-1.5v3M1447 348.5h3m-1.5-1.5v3M1448 346.5h3m-1.5-1.5v3M1449 348.5h3m-1.5-1.5v3M1450 351.5h3m-1.5-1.5v3M1450 349.5h3m-1.5-1.5v3M1451 351.5h3m-1.5-1.5v3M1451 353.5h3m-1.5-1.5v3M1452 355.5h3m-1.5-1.5v3M1452 353.5h3m-1.5-1.5v3M1453 356.5h3m-1.5-1.5v3M1454 359.5h3m-1.5-1.5v3M1455 356.5h3m-1.5-1.5v3M1455 359.5h3m-1.5-1.5v3M1456 357.5h3m-1.5-1.5v3M1456 360.5h3m-1.5-1.5v3M1457 358.5h3m-1.5-1.5v3M1457 360.5h3m-1.5-1.5v3M1458 358.5h3m-1.5-1.5v3M1458 361.5h3m-1.5-1.5v3M1459 359.5h3m-1.5-1.5v3M1460 361.5h3m-1.5-1.5v3M1461 363.5h3m-1.5-1.5v3M1461 359.5h3m-1.5-1.5v3M1461 363.5h3m-1.5-1.5v3M1462 361.5h3m-1.5-1.5v3M1462 359.5h3m-1.5-1.5v3M1463 363.5h3m-1.5-1.5v3M1463 361.5h3m-1.5-1.5v3M1463 364.5h3m-1.5-1.5v3M1464 361.5h3m-1.5-1.5v3M1464 366.5h3m-1.5-1.5v3M1465 368.5h3m-1.5-1.5v3M1465 364.5h3m-1.5-1.5v3M1466 369.5h3m-1.5-1.5v3M1466 367.5h3m-1.5-1.5v3M1466 373.5h3m-1.5-1.5v3M1467 370.5h3m-1.5-1.5v3M1467 373.5h3m-1.5-1.5v3M1468 377.5h3m-1.5-1.5v3M1468 373.5h3m-1.5-1.5v3M1468 376.5h3m-1.5-1.5v3M1469 379.5h3m-1.5-1.5v3M1469 381.5h3m-1.5-1.5v3M1469 383.5h3m-1.5-1.5v3M1470 386.5h3m-1.5-1.5v3M1470 391.5h3m-1.5-1.5v3M1471 396.5h3m-1.5-1.5v3M1471 394.5h3m-1.5-1.5v3M1472 399.5h3m-1.5-1.5v3M1472 403.5h3m-1.5-1.5v3M1472 410.5h3m-1.5-1.5v3M1473 413.5h3m-1.5-1.5v3M1473 417.5h3m-1.5-1.5v3M1473 419.5h3m-1.5-1.5v3M1473 425.5h3m-1.5-1.5v3M1474 429.5h3m-1.5-1.5v3M1474 436.5h3m-1.5-1.5v3M1474 441.5h3m-1.5-1.5v3M1474 446.5h3m-1.5-1.5v3M1475 449.5h3m-1.5-1.5v3M1475 455.5h3m-1.5-1.5v3M1475 461.5h3m-1.5-1.5v3M1475 469.5h3m-1.5-1.5v3M1475 476.5h3m-1.5-1.5v3M1476 483.5h3m-1.5-1.5v3M1476 487.5h3m-1.5-1.5v3M1476 495.5h3m-1.5-1.5v3M1476 505.5h3m-1.5-1.5v3M1477 512.5h3m-1.5-1.5v3M1477 518.5h3m-1.5-1.5v3M1477 524.5h3m-1.5-1.5v3M1477 536.5h3m-1.5-1.5v3M1478 542.5h3m-1.5-1.5v3M1478 549.5h3m-1.5-1.5v3M1478 555.5h3m-1.5-1.5v3M1478 564.5h3m-1.5-1.5v3M1479 570.5h3m-1.5-1.5v3M1479 579.5h3m-1.5-1.5v3M1479 590.5h3m-1.5-1.5v3M1479 595.5h3m-1.5-1.5v3M1480 603.5h3m-1.5-1.5v3M1480 616.5h3m-1.5-1.5v3M1480 625.5h3m-1.5-1.5v3M1480 630.5h3m-1.5-1.5v3M1481 642.5h3m-1.5-1.5v3M1481 648.5h3m-1.5-1.5v3M1481 658.5h3m-1.5-1.5v3M1481 666.5h3m-1.5-1.5v3M1481 677.5h3m-1.5-1.5v3M1482 682.5h3m-1.5-1.5v3M1482 689.5h3m-1.5-1.5v3M1482 700.5h3m-1.5-1.5v3M1482 707.5h3m-1.5-1.5v3M1483 710.5h3m-1.5-1.5v3M1483 716.5h3m-1.5-1.5v3M1483 722.5h3m-1.5-1.5v3M1483 726.5h3m-1.5-1.5v3M1484 728.5h3m-1.5-1.5v3M1484 733.5h3m-1.5-1.5v3M1484 738.5h3m-1.5-1.5v3M1484 742.5h3m-1.5-1.5v3M1485 744.5h3m-1.5-1.5v3M1485 750.5h3m-1.5-1.5v3M1486 756.5h3m-1.5-1.5v3M1487 758.5h3m-1.5-1.5v3M1487 761.5h3m-1.5-1.5v3M1487 759.5h3m-1.5-1.5v3M1488 761.5h3m-1.5-1.5v3M1488 765.5h3m-1.5-1.5v3M1488 762.5h3m-1.5-1.5v3M1489 765.5h3m-1.5-1.5v3M1490 768.5h3m-1.5-1.5v3M1491 770.5h3m-1.5-1.5v3M1492 768.5h3m-1.5-1.5v3M1492 772.5h3m-1.5-1.5v3M1493 770.5h3m-1.5-1.5v3M1493 772.5h3m-1.5-1.5v3M1494 774.5h3m-1.5-1.5v3M1495 770.5h3m-1.5-1.5v3M1495 772.5h3m-1.5-1.5v3M1496 774.5h3m-1.5-1.5v3M1498 775.5h3m-1.5-1.5v3M1498 771.5h3m-1.5-1.5v3M1498 774.5h3m-1.5-1.5v3M1498 772.5h3m-1.5-1.5v3M1499 774.5h3m-1.5-1.5v3M1499 772.5h3m-1.5-1.5v3M1500 774.5h3m-1.5-1.5v3M1500 771.5h3m-1.5-1.5v3M1501 774.5h3m-1.5-1.5v3M1501 772.5h3m-1.5-1.5v3M1502 769.5h3m-1.5-1.5v3M1502 771.5h3m-1.5-1.5v3M1503 769.5h3m-1.5-1.5v3M1503 772.5h3m-1.5-1.5v3M1504 770.5h3m-1.5-1.5v3M1504 768.5h3m-1.5-1.5v3M1504 766.5h3m-1.5-1.5v3M1505 770.5h3m-1.5-1.5v3M1505 766.5h3m-1.5-1.5v3M1506 764.5h3m-1.5-1.5v3M1508 764.5h3m-1.5-1.5v3M1508 762.5h3m-1.5-1.5v3M1508 760.5h3m-1.5-1.5v3M1510 760.5h3m-1.5-1.5v3M1511 758.5h3m-1.5-1.5v3M1511 756.5h3m-1.5-1.5v3M1511 758.5h3m-1.5-1.5v3M1512 754.5h3m-1.5-1.5v3M1513 756.5h3m-1.5-1.5v3M1513 753.5h3m-1.5-1.5v3M1514 755.5h3m-1.5-1.5v3M1514 750.5h3m-1.5-1.5v3M1514 752.5h3m-1.5-1.5v3M1515 748.5h3m-1.5-1.5v3M1516 750.5h3m-1.5-1.5v3M1516 746.5h3m-1.5-1.5v3M1516 744.5h3m-1.5-1.5v3M1517 741.5h3m-1.5-1.5v3M1517 743.5h3m-1.5-1.5v3M1517 740.5h3m-1.5-1.5v3M1518 736.5h3m-1.5-1.5v3M1518 726.5h3m-1.5-1.5v3M1518 720.5h3m-1.5-1.5v3M1518 711.5h3m-1.5-1.5v3M1519 700.5h3m-1.5-1.5v3M1519 690.5h3m-1.5-1.5v3M1519 681.5h3m-1.5-1.5v3M1519 665.5h3m-1.5-1.5v3M1520 655.5h3m-1.5-1.5v3M1520 643.5h3m-1.5-1.5v3M1520 628.5h3m-1.5-1.5v3M1520 615.5h3m-1.5-1.5v3M1521 601.5h3m-1.5-1.5v3M1521 589.5h3m-1.5-1.5v3M1521 579.5h3m-1.5-1.5v3M1521 567.5h3m-1.5-1.5v3M1522 555.5h3m-1.5-1.5v3M1522 548.5h3m-1.5-1.5v3M1522 539.5h3m-1.5-1.5v3M1522 525.5h3m-1.5-1.5v3M1523 517.5h3m-1.5-1.5v3M1523 506.5h3m-1.5-1.5v3M1523 495.5h3m-1.5-1.5v3M1523 485.5h3m-1.5-1.5v3M1523 472.5h3m-1.5-1.5v3M1524 466.5h3m-1.5-1.5v3M1524 453.5h3m-1.5-1.5v3M1524 444.5h3m-1.5-1.5v3M1524 435.5h3m-1.5-1.5v3M1525 428.5h3m-1.5-1.5v3M1525 423.5h3m-1.5-1.5v3M1525 415.5h3m-1.5-1.5v3M1525 410.5h3m-1.5-1.5v3M1526 406.5h3m-1.5-1.5v3M1526 404.5h3m-1.5-1.5v3M1526 402.5h3m-1.5-1.5v3M1526 397.5h3m-1.5-1.5v3M1527 394.5h3m-1.5-1.5v3M1527 390.5h3m-1.5-1.5v3M1528 383.5h3m-1.5-1.5v3M1528 385.5h3m-1.5-1.5v3M1528 381.5h3m-1.5-1.5v3M1528 378.5h3m-1.5-1.5v3M1529 376.5h3m-1.5-1.5v3M1530 373.5h3m-1.5-1.5v3M1530 370.5h3m-1.5-1.5v3M1531 372.5h3m-1.5-1.5v3M1531 369.5h3m-1.5-1.5v3M1531 367.5h3m-1.5-1.5v3M1533 367.5h3m-1.5-1.5v3M1533 363.5h3m-1.5-1.5v3M1533 366.5h3m-1.5-1.5v3M1534 363.5h3m-1.5-1.5v3M1535 360.5h3m-1.5-1.5v3M1535 362.5h3m-1.5-1.5v3M1536 360.5h3m-1.5-1.5v3M1537 357.5h3m-1.5-1.5v3M1537 359.5h3m-1.5-1.5v3M1538 357.5h3m-1.5-1.5v3M1538 359.5h3m-1.5-1.5v3M1539 357.5h3m-1.5-1.5v3M1540 355.5h3m-1.5-1.5v3M1541 357.5h3m-1.5-1.5v3M1541 355.5h3m-1.5-1.5v3M1541 357.5h3m-1.5-1.5v3M1542 355.5h3m-1.5-1.5v3M1542 358.5h3m-1.5-1.5v3M1543 356.5h3m-1.5-1.5v3M1543 358.5h3m-1.5-1.5v3M1544 360.5h3m-1.5-1.5v3M1544 358.5h3m-1.5-1.5v3M1544 360.5h3m-1.5-1.5v3M1545 362.5h3m-1.5-1.5v3M1546 364.5h3m-1.5-1.5v3M1546 362.5h3m-1.5-1.5v3M1546 364.5h3m-1.5-1.5v3M1547 367.5h3m-1.5-1.5v3M1548 369.5h3m-1.5-1.5v3M1548 371.5h3m-1.5-1.5v3M1549 373.5h3m-1.5-1.5v3M1549 379.5h3m-1.5-1.5v3M1549 381.5h3m-1.5-1.5v3M1550 383.5h3m-1.5-1.5v3M1550 386.5h3m-1.5-1.5v3M1550 388.5h3m-1.5-1.5v3M1551 386.5h3m-1.5-1.5v3M1551 388.5h3m-1.5-1.5v3M1551 390.5h3m-1.5-1.5v3M1553 390.5h3m-1.5-1.5v3M1553 392.5h3m-1.5-1.5v3M1554 390.5h3m-1.5-1.5v3M1554 394.5h3m-1.5-1.5v3M1555 397.5h3m-1.5-1.5v3M1556 399.5h3m-1.5-1.5v3M1556 405.5h3m-1.5-1.5v3M1556 412.5h3m-1.5-1.5v3M1557 417.5h3m-1.5-1.5v3M1557 428.5h3m-1.5-1.5v3M1557 437.5h3m-1.5-1.5v3M1557 444.5h3m-1.5-1.5v3M1558 449.5h3m-1.5-1.5v3M1558 454.5h3m-1.5-1.5v3M1558 462.5h3m-1.5-1.5v3M1558 469.5h3m-1.5-1.5v3M1559 472.5h3m-1.5-1.5v3M1559 481.5h3m-1.5-1.5v3M1559 487.5h3m-1.5-1.5v3M1559 494.5h3m-1.5-1.5v3M1559 500.5h3m-1.5-1.5v3M1560 506.5h3m-1.5-1.5v3M1560 516.5h3m-1.5-1.5v3M1560 522.5h3m-1.5-1.5v3M1560 528.5h3m-1.5-1.5v3M1561 536.5h3m-1.5-1.5v3M1561 547.5h3m-1.5-1.5v3M1561 553.5h3m-1.5-1.5v3M1561 566.5h3m-1.5-1.5v3M1562 576.5h3m-1.5-1.5v3M1562 589.5h3m-1.5-1.5v3M1562 602.5h3m-1.5-1.5v3M1562 614.5h3m-1.5-1.5v3M1563 627.5h3m-1.5-1.5v3M1563 640.5h3m-1.5-1.5v3M1563 654.5h3m-1.5-1.5v3M1563 667.5h3m-1.5-1.5v3M1564 683.5h3m-1.5-1.5v3M1564 692.5h3m-1.5-1.5v3M1564 706.5h3m-1.5-1.5v3M1564 715.5h3m-1.5-1.5v3M1565 722.5h3m-1.5-1.5v3M1565 733.5h3m-1.5-1.5v3M1565 739.5h3m-1.5-1.5v3M1565 745.5h3m-1.5-1.5v3M1565 743.5h3m-1.5-1.5v3M1566 748.5h3m-1.5-1.5v3M1566 751.5h3m-1.5-1.5v3M1566 755.5h3m-1.5-1.5v3M1567 752.5h3m-1.5-1.5v3M1567 754.5h3m-1.5-1.5v3M1567 758.5h3m-1.5-1.5v3M1568 763.5h3m-1.5-1.5v3M1569 765.5h3m-1.5-1.5v3M1569 767.5h3m-1.5-1.5v3M1570 771.5h3m-1.5-1.5v3M1570 769.5h3m-1.5-1.5v3M1571 771.5h3m-1.5-1.5v3M1571 769.5h3m-1.5-1.5v3M1571 771.5h3m-1.5-1.5v3M1572 773.5h3m-1.5-1.5v3M1573 771.5h3m-1.5-1.5v3M1574 774.5h3m-1.5-1.5v3M1574 771.5h3m-1.5-1.5v3M1574 774.5h3m-1.5-1.5v3M1575 772.5h3m-1.5-1.5v3M1576 775.5h3m-1.5-1.5v3M1576 773.5h3m-1.5-1.5v3M1577 771.5h3m-1.5-1.5v3M1577 774.5h3m-1.5-1.5v3M1578 772.5h3m-1.5-1.5v3M1578 776.5h3m-1.5-1.5v3M1579 771.5h3m-1.5-1.5v3M1579 774.5h3m-1.5-1.5v3M1580 776.5h3m-1.5-1.5v3M1580 774.5h3m-1.5-1.5v3M1582 772.5h3m-1.5-1.5v3M1582 775.5h3m-1.5-1.5v3M1583 771.5h3m-1.5-1.5v3M1583 773.5h3m-1.5-1.5v3M1583 770.5h3m-1.5-1.5v3M1584 772.5h3m-1.5-1.5v3M1585 769.5h3m-1.5-1.5v3M1586 771.5h3m-1.5-1.5v3M1586 767.5h3m-1.5-1.5v3M1586 769.5h3m-1.5-1.5v3M1587 766.5h3m-1.5-1.5v3M1587 769.5h3m-1.5-1.5v3M1588 766.5h3m-1.5-1.5v3M1588 764.5h3m-1.5-1.5v3M1589 766.5h3m-1.5-1.5v3M1590 762.5h3m-1.5-1.5v3M1590 760.5h3m-1.5-1.5v3M1591 758.5h3m-1.5-1.5v3M1591 760.5h3m-1.5-1.5v3M1592 756.5h3m-1.5-1.5v3M1592 758.5h3m-1.5-1.5v3M1592 756.5h3m-1.5-1.5v3M1593 752.5h3m-1.5-1.5v3M1593 747.5h3m-1.5-1.5v3M1594 749.5h3m-1.5-1.5v3M1594 745.5h3m-1.5-1.5v3M1594 741.5h3m-1.5-1.5v3M1595 733.5h3m-1.5-1.5v3M1595 724.5h3m-1.5-1.5v3M1595 714.5h3m-1.5-1.5v3M1595 705.5h3m-1.5-1.5v3M1595 691.5h3m-1.5-1.5v3M1596 678.5h3m-1.5-1.5v3M1596 663.5h3m-1.5-1.5v3M1596 643.5h3m-1.5-1.5v3M1596 628.5h3m-1.5-1.5v3M1597 612.5h3m-1.5-1.5v3M1597 597.5h3m-1.5-1.5v3M1597 584.5h3m-1.5-1.5v3M1597 573.5h3m-1.5-1.5v3M1598 560.5h3m-1.5-1.5v3M1598 549.5h3m-1.5-1.5v3M1598 539.5h3m-1.5-1.5v3M1598 529.5h3m-1.5-1.5v3M1599 518.5h3m-1.5-1.5v3M1599 503.5h3m-1.5-1.5v3M1599 495.5h3m-1.5-1.5v3M1599 482.5h3m-1.5-1.5v3M1600 471.5h3m-1.5-1.5v3M1600 461.5h3m-1.5-1.5v3M1600 450.5h3m-1.5-1.5v3M1600 443.5h3m-1.5-1.5v3M1601 431.5h3m-1.5-1.5v3M1601 423.5h3m-1.5-1.5v3M1601 416.5h3m-1.5-1.5v3M1601 411.5h3m-1.5-1.5v3M1601 405.5h3m-1.5-1.5v3M1602 401.5h3m-1.5-1.5v3M1602 398.5h3m-1.5-1.5v3M1602 394.5h3m-1.5-1.5v3M1603 391.5h3m-1.5-1.5v3M1603 387.5h3m-1.5-1.5v3M1604 384.5h3m-1.5-1.5v3M1604 380.5h3m-1.5-1.5v3M1604 377.5h3m-1.5-1.5v3M1605 374.5h3m-1.5-1.5v3M1605 376.5h3m-1.5-1.5v3M1606 370.5h3m-1.5-1.5v3M1607 368.5h3m-1.5-1.5v3M1607 366.5h3m-1.5-1.5v3M1608 368.5h3m-1.5-1.5v3M1609 365.5h3m-1.5-1.5v3M1609 362.5h3m-1.5-1.5v3M1610 360.5h3m-1.5-1.5v3M1611 363.5h3m-1.5-1.5v3M1611 360.5h3m-1.5-1.5v3M1611 362.5h3m-1.5-1.5v3M1612 357.5h3m-1.5-1.5v3M1612 361.5h3m-1.5-1.5v3M1613 358.5h3m-1.5-1.5v3M1613 356.5h3m-1.5-1.5v3M1614 358.5h3m-1.5-1.5v3M1614 354.5h3m-1.5-1.5v3M1614 357.5h3m-1.5-1.5v3M1615 354.5h3m-1.5-1.5v3M1615 356.5h3m-1.5-1.5v3M1616 353.5h3m-1.5-1.5v3M1616 355.5h3m-1.5-1.5v3M1617 353.5h3m-1.5-1.5v3M1619 353.5h3m-1.5-1.5v3M1619 355.5h3m-1.5-1.5v3M1620 352.5h3m-1.5-1.5v3M1620 355.5h3m-1.5-1.5v3M1621 352.5h3m-1.5-1.5v3M1622 354.5h3m-1.5-1.5v3M1622 356.5h3m-1.5-1.5v3M1623 353.5h3m-1.5-1.5v3M1623 356.5h3m-1.5-1.5v3M1624 358.5h3m-1.5-1.5v3M1626 356.5h3m-1.5-1.5v3M1626 361.5h3m-1.5-1.5v3M1628 362.5h3m-1.5-1.5v3M1629 364.5h3m-1.5-1.5v3M1629 366.5h3m-1.5-1.5v3M1630 364.5h3m-1.5-1.5v3M1630 368.5h3m-1.5-1.5v3M1631 365.5h3m-1.5-1.5v3M1631 369.5h3m-1.5-1.5v3M1632 371.5h3m-1.5-1.5v3M1632 373.5h3m-1.5-1.5v3M1633 370.5h3m-1.5-1.5v3M1633 373.5h3m-1.5-1.5v3M1633 375.5h3m-1.5-1.5v3M1634 373.5h3m-1.5-1.5v3M1634 377.5h3m-1.5-1.5v3M1636 379.5h3m-1.5-1.5v3M1636 382.5h3m-1.5-1.5v3M1637 384.5h3m-1.5-1.5v3M1637 387.5h3m-1.5-1.5v3M1637 385.5h3m-1.5-1.5v3M1638 389.5h3m-1.5-1.5v3M1638 391.5h3m-1.5-1.5v3M1638 388.5h3m-1.5-1.5v3M1638 391.5h3m-1.5-1.5v3M1640 393.5h3m-1.5-1.5v3M1640 397.5h3m-1.5-1.5v3M1640 395.5h3m-1.5-1.5v3M1640 397.5h3m-1.5-1.5v3M1641 400.5h3m-1.5-1.5v3M1641 402.5h3m-1.5-1.5v3M1642 404.5h3m-1.5-1.5v3M1642 402.5h3m-1.5-1.5v3M1642 406.5h3m-1.5-1.5v3M1643 409.5h3m-1.5-1.5v3M1644 411.5h3m-1.5-1.5v3M1644 413.5h3m-1.5-1.5v3M1644 411.5h3m-1.5-1.5v3M1645 414.5h3m-1.5-1.5v3M1645 416.5h3m-1.5-1.5v3M1646 419.5h3m-1.5-1.5v3M1646 421.5h3m-1.5-1.5v3M1646 423.5h3m-1.5-1.5v3M1647 430.5h3m-1.5-1.5v3M1648 433.5h3m-1.5-1.5v3M1649 438.5h3m-1.5-1.5v3M1649 442.5h3m-1.5-1.5v3M1649 445.5h3m-1.5-1.5v3M1649 452.5h3m-1.5-1.5v3M1650 455.5h3m-1.5-1.5v3M1650 470.5h3m-1.5-1.5v3M1650 491.5h3m-1.5-1.5v3M1650 519.5h3m-1.5-1.5v3M1651 542.5h3m-1.5-1.5v3M1651 557.5h3m-1.5-1.5v3M1651 566.5h3m-1.5-1.5v3M1651 579.5h3m-1.5-1.5v3M1652 593.5h3m-1.5-1.5v3M1652 601.5h3m-1.5-1.5v3M1652 611.5h3m-1.5-1.5v3M1652 623.5h3m-1.5-1.5v3M1653 632.5h3m-1.5-1.5v3M1653 641.5h3m-1.5-1.5v3M1653 647.5h3m-1.5-1.5v3M1653 657.5h3m-1.5-1.5v3M1654 665.5h3m-1.5-1.5v3M1654 669.5h3m-1.5-1.5v3M1654 676.5h3m-1.5-1.5v3M1654 687.5h3m-1.5-1.5v3M1655 693.5h3m-1.5-1.5v3M1655 697.5h3m-1.5-1.5v3M1655 704.5h3m-1.5-1.5v3M1655 706.5h3m-1.5-1.5v3M1655 712.5h3m-1.5-1.5v3M1656 715.5h3m-1.5-1.5v3M1656 720.5h3m-1.5-1.5v3M1656 725.5h3m-1.5-1.5v3M1656 730.5h3m-1.5-1.5v3M1657 736.5h3m-1.5-1.5v3M1657 740.5h3m-1.5-1.5v3M1658 745.5h3m-1.5-1.5v3M1658 750.5h3m-1.5-1.5v3M1658 748.5h3m-1.5-1.5v3M1658 753.5h3m-1.5-1.5v3M1659 756.5h3m-1.5-1.5v3M1659 759.5h3m-1.5-1.5v3M1660 761.5h3m-1.5-1.5v3M1661 764.5h3m-1.5-1.5v3M1661 766.5h3m-1.5-1.5v3M1663 765.5h3m-1.5-1.5v3M1663 768.5h3m-1.5-1.5v3M1663 770.5h3m-1.5-1.5v3M1664 767.5h3m-1.5-1.5v3M1664 770.5h3m-1.5-1.5v3M1665 768.5h3m-1.5-1.5v3M1665 772.5h3m-1.5-1.5v3M1665 770.5h3m-1.5-1.5v3M1666 773.5h3m-1.5-1.5v3M1666 770.5h3m-1.5-1.5v3M1667 773.5h3m-1.5-1.5v3M1667 770.5h3m-1.5-1.5v3M1668 773.5h3m-1.5-1.5v3M1668 771.5h3m-1.5-1.5v3M1668 774.5h3m-1.5-1.5v3M1669 770.5h3m-1.5-1.5v3M1669 772.5h3m-1.5-1.5v3M1670 774.5h3m-1.5-1.5v3M1670 772.5h3m-1.5-1.5v3M1670 770.5h3m-1.5-1.5v3M1671 773.5h3m-1.5-1.5v3M1671 771.5h3m-1.5-1.5v3M1672 773.5h3m-1.5-1.5v3M1672 771.5h3m-1.5-1.5v3M1672 773.5h3m-1.5-1.5v3M1673 771.5h3m-1.5-1.5v3M1673 773.5h3m-1.5-1.5v3M1674 770.5h3m-1.5-1.5v3M1675 773.5h3m-1.5-1.5v3M1676 770.5h3m-1.5-1.5v3M1676 772.5h3m-1.5-1.5v3M1677 769.5h3m-1.5-1.5v3M1678 771.5h3m-1.5-1.5v3M1678 768.5h3m-1.5-1.5v3M1678 771.5h3m-1.5-1.5v3M1679 768.5h3m-1.5-1.5v3M1679 771.5h3m-1.5-1.5v3M1680 768.5h3m-1.5-1.5v3M1680 771.5h3m-1.5-1.5v3M1680 767.5h3m-1.5-1.5v3M1681 770.5h3m-1.5-1.5v3M1681 768.5h3m-1.5-1.5v3M1682 770.5h3m-1.5-1.5v3M1682 767.5h3m-1.5-1.5v3M1683 769.5h3m-1.5-1.5v3M1683 767.5h3m-1.5-1.5v3M1684 765.5h3m-1.5-1.5v3M1684 768.5h3m-1.5-1.5v3M1684 765.5h3m-1.5-1.5v3M1686 763.5h3m-1.5-1.5v3M1686 767.5h3m-1.5-1.5v3M1686 762.5h3m-1.5-1.5v3M1687 766.5h3m-1.5-1.5v3M1687 763.5h3m-1.5-1.5v3M1688 765.5h3m-1.5-1.5v3M1688 763.5h3m-1.5-1.5v3M1689 759.5h3m-1.5-1.5v3M1689 763.5h3m-1.5-1.5v3M1690 759.5h3m-1.5-1.5v3M1690 761.5h3m-1.5-1.5v3M1690 758.5h3m-1.5-1.5v3M1691 762.5h3m-1.5-1.5v3M1691 760.5h3m-1.5-1.5v3M1691 758.5h3m-1.5-1.5v3M1692 756.5h3m-1.5-1.5v3M1693 759.5h3m-1.5-1.5v3M1693 757.5h3m-1.5-1.5v3M1693 754.5h3m-1.5-1.5v3M1694 757.5h3m-1.5-1.5v3M1694 754.5h3m-1.5-1.5v3M1694 756.5h3m-1.5-1.5v3M1695 753.5h3m-1.5-1.5v3M1695 755.5h3m-1.5-1.5v3M1695 750.5h3m-1.5-1.5v3M1695 752.5h3m-1.5-1.5v3M1696 749.5h3m-1.5-1.5v3M1697 744.5h3m-1.5-1.5v3M1698 742.5h3m-1.5-1.5v3M1698 739.5h3m-1.5-1.5v3M1699 734.5h3m-1.5-1.5v3M1699 728.5h3m-1.5-1.5v3M1699 708.5h3m-1.5-1.5v3M1699 678.5h3m-1.5-1.5v3M1700 643.5h3m-1.5-1.5v3M1700 607.5h3m-1.5-1.5v3M1700 574.5h3m-1.5-1.5v3M1700 554.5h3m-1.5-1.5v3M1701 533.5h3m-1.5-1.5v3M1701 515.5h3m-1.5-1.5v3M1701 494.5h3m-1.5-1.5v3M1701 477.5h3m-1.5-1.5v3M1702 462.5h3m-1.5-1.5v3M1702 446.5h3m-1.5-1.5v3M1702 431.5h3m-1.5-1.5v3M1702 419.5h3m-1.5-1.5v3M1703 408.5h3m-1.5-1.5v3M1703 402.5h3m-1.5-1.5v3M1703 393.5h3m-1.5-1.5v3M1703 389.5h3m-1.5-1.5v3M1704 383.5h3m-1.5-1.5v3M1704 380.5h3m-1.5-1.5v3M1704 376.5h3m-1.5-1.5v3M1705 371.5h3m-1.5-1.5v3M1705 367.5h3m-1.5-1.5v3M1706 365.5h3m-1.5-1.5v3M1707 363.5h3m-1.5-1.5v3M1709 358.5h3m-1.5-1.5v3M1709 361.5h3m-1.5-1.5v3M1710 357.5h3m-1.5-1.5v3M1710 360.5h3m-1.5-1.5v3M1711 357.5h3m-1.5-1.5v3M1711 359.5h3m-1.5-1.5v3M1712 357.5h3m-1.5-1.5v3M1712 361.5h3m-1.5-1.5v3M1712 359.5h3m-1.5-1.5v3M1713 361.5h3m-1.5-1.5v3M1713 359.5h3m-1.5-1.5v3M1715 360.5h3m-1.5-1.5v3M1715 358.5h3m-1.5-1.5v3M1715 361.5h3m-1.5-1.5v3M1716 358.5h3m-1.5-1.5v3M1716 360.5h3m-1.5-1.5v3M1716 357.5h3m-1.5-1.5v3M1717 360.5h3m-1.5-1.5v3M1717 358.5h3m-1.5-1.5v3M1718 361.5h3m-1.5-1.5v3M1718 359.5h3m-1.5-1.5v3M1718 357.5h3m-1.5-1.5v3M1719 360.5h3m-1.5-1.5v3M1719 358.5h3m-1.5-1.5v3M1719 360.5h3m-1.5-1.5v3M1720 358.5h3m-1.5-1.5v3M1721 360.5h3m-1.5-1.5v3M1721 357.5h3m-1.5-1.5v3M1722 359.5h3m-1.5-1.5v3M1722 362.5h3m-1.5-1.5v3M1722 358.5h3m-1.5-1.5v3M1723 361.5h3m-1.5-1.5v3M1723 358.5h3m-1.5-1.5v3M1724 361.5h3m-1.5-1.5v3M1724 358.5h3m-1.5-1.5v3M1725 362.5h3m-1.5-1.5v3M1725 360.5h3m-1.5-1.5v3M1725 363.5h3m-1.5-1.5v3M1725 359.5h3m-1.5-1.5v3M1726 362.5h3m-1.5-1.5v3M1727 360.5h3m-1.5-1.5v3M1727 363.5h3m-1.5-1.5v3M1728 365.5h3m-1.5-1.5v3M1728 362.5h3m-1.5-1.5v3M1729 365.5h3m-1.5-1.5v3M1730 362.5h3m-1.5-1.5v3M1730 366.5h3m-1.5-1.5v3M1730 362.5h3m-1.5-1.5v3M1730 364.5h3m-1.5-1.5v3M1731 362.5h3m-1.5-1.5v3M1731 365.5h3m-1.5-1.5v3M1731 362.5h3m-1.5-1.5v3M1732 366.5h3m-1.5-1.5v3M1732 364.5h3m-1.5-1.5v3M1733 362.5h3m-1.5-1.5v3M1733 365.5h3m-1.5-1.5v3M1734 362.5h3m-1.5-1.5v3M1734 364.5h3m-1.5-1.5v3M1735 362.5h3m-1.5-1.5v3M1735 366.5h3m-1.5-1.5v3M1735 362.5h3m-1.5-1.5v3M1736 364.5h3m-1.5-1.5v3M1736 362.5h3m-1.5-1.5v3M1737 364.5h3m-1.5-1.5v3M1738 360.5h3m-1.5-1.5v3M1738 362.5h3m-1.5-1.5v3M1739 360.5h3m-1.5-1.5v3M1739 362.5h3m-1.5-1.5v3M1739 360.5h3m-1.5-1.5v3M1739 362.5h3m-1.5-1.5v3M1741 362.5h3m-1.5-1.5v3M1741 364.5h3m-1.5-1.5v3M1741 362.5h3m-1.5-1.5v3M1742 365.5h3m-1.5-1.5v3M1743 367.5h3m-1.5-1.5v3M1745 368.5h3m-1.5-1.5v3M1745 371.5h3m-1.5-1.5v3M1746 375.5h3m-1.5-1.5v3M1746 373.5h3m-1.5-1.5v3M1746 375.5h3m-1.5-1.5v3M1747 377.5h3m-1.5-1.5v3M1747 382.5h3m-1.5-1.5v3M1747 384.5h3m-1.5-1.5v3M1748 387.5h3m-1.5-1.5v3M1748 392.5h3m-1.5-1.5v3M1749 394.5h3m-1.5-1.5v3M1749 400.5h3m-1.5-1.5v3M1749 402.5h3m-1.5-1.5v3M1750 404.5h3m-1.5-1.5v3M1750 408.5h3m-1.5-1.5v3M1750 411.5h3m-1.5-1.5v3M1750 414.5h3m-1.5-1.5v3M1751 417.5h3m-1.5-1.5v3M1751 419.5h3m-1.5-1.5v3M1751 423.5h3m-1.5-1.5v3M1751 428.5h3m-1.5-1.5v3M1752 433.5h3m-1.5-1.5v3M1752 437.5h3m-1.5-1.5v3M1752 446.5h3m-1.5-1.5v3M1753 454.5h3m-1.5-1.5v3M1753 461.5h3m-1.5-1.5v3M1753 466.5h3m-1.5-1.5v3M1754 476.5h3m-1.5-1.5v3M1754 480.5h3m-1.5-1.5v3M1754 489.5h3m-1.5-1.5v3M1754 501.5h3m-1.5-1.5v3M1755 510.5h3m-1.5-1.5v3M1755 518.5h3m-1.5-1.5v3M1755 526.5h3m-1.5-1.5v3M1755 539.5h3m-1.5-1.5v3M1756 547.5h3m-1.5-1.5v3M1756 557.5h3m-1.5-1.5v3M1756 571.5h3m-1.5-1.5v3M1756 589.5h3m-1.5-1.5v3M1757 603.5h3m-1.5-1.5v3M1757 622.5h3m-1.5-1.5v3M1757 637.5h3m-1.5-1.5v3M1757 654.5h3m-1.5-1.5v3M1757 670.5h3m-1.5-1.5v3M1758 685.5h3m-1.5-1.5v3M1758 700.5h3m-1.5-1.5v3M1758 707.5h3m-1.5-1.5v3M1758 715.5h3m-1.5-1.5v3M1759 721.5h3m-1.5-1.5v3M1759 724.5h3m-1.5-1.5v3M1759 729.5h3m-1.5-1.5v3M1759 732.5h3m-1.5-1.5v3M1760 735.5h3m-1.5-1.5v3M1760 741.5h3m-1.5-1.5v3M1760 743.5h3m-1.5-1.5v3M1761 748.5h3m-1.5-1.5v3M1761 753.5h3m-1.5-1.5v3M1762 755.5h3m-1.5-1.5v3M1762 757.5h3m-1.5-1.5v3M1763 760.5h3m-1.5-1.5v3M1764 762.5h3m-1.5-1.5v3M1764 766.5h3m-1.5-1.5v3M1764 764.5h3m-1.5-1.5v3M1765 768.5h3m-1.5-1.5v3M1765 766.5h3m-1.5-1.5v3M1765 768.5h3m-1.5-1.5v3M1766 770.5h3m-1.5-1.5v3M1767 773.5h3m-1.5-1.5v3M1768 771.5h3m-1.5-1.5v3M1768 773.5h3m-1.5-1.5v3M1769 775.5h3m-1.5-1.5v3M1769 772.5h3m-1.5-1.5v3M1770 775.5h3m-1.5-1.5v3M1770 771.5h3m-1.5-1.5v3M1770 774.5h3m-1.5-1.5v3M1771 771.5h3m-1.5-1.5v3M1771 773.5h3m-1.5-1.5v3M1772 775.5h3m-1.5-1.5v3M1772 773.5h3m-1.5-1.5v3M1772 771.5h3m-1.5-1.5v3M1773 773.5h3m-1.5-1.5v3M1773 770.5h3m-1.5-1.5v3M1773 772.5h3m-1.5-1.5v3M1774 770.5h3m-1.5-1.5v3M1775 767.5h3m-1.5-1.5v3M1776 769.5h3m-1.5-1.5v3M1777 767.5h3m-1.5-1.5v3M1777 770.5h3m-1.5-1.5v3M1778 768.5h3m-1.5-1.5v3M1778 766.5h3m-1.5-1.5v3M1779 764.5h3m-1.5-1.5v3M1781 766.5h3m-1.5-1.5v3M1781 762.5h3m-1.5-1.5v3M1781 765.5h3m-1.5-1.5v3M1782 762.5h3m-1.5-1.5v3M1783 765.5h3m-1.5-1.5v3M1783 762.5h3m-1.5-1.5v3M1784 760.5h3m-1.5-1.5v3M1785 763.5h3m-1.5-1.5v3M1785 760.5h3m-1.5-1.5v3M1785 762.5h3m-1.5-1.5v3M1786 757.5h3m-1.5-1.5v3M1786 761.5h3m-1.5-1.5v3M1787 756.5h3m-1.5-1.5v3M1787 758.5h3m-1.5-1.5v3M1788 754.5h3m-1.5-1.5v3M1789 756.5h3m-1.5-1.5v3M1789 752.5h3m-1.5-1.5v3M1790 749.5h3m-1.5-1.5v3M1790 746.5h3m-1.5-1.5v3M1790 748.5h3m-1.5-1.5v3M1791 745.5h3m-1.5-1.5v3M1791 743.5h3m-1.5-1.5v3M1791 736.5h3m-1.5-1.5v3M1791 727.5h3m-1.5-1.5v3M1792 713.5h3m-1.5-1.5v3M1792 700.5h3m-1.5-1.5v3M1792 683.5h3m-1.5-1.5v3M1792 665.5h3m-1.5-1.5v3M1793 647.5h3m-1.5-1.5v3M1793 629.5h3m-1.5-1.5v3M1793 610.5h3m-1.5-1.5v3M1793 592.5h3m-1.5-1.5v3M1793 574.5h3m-1.5-1.5v3M1794 556.5h3m-1.5-1.5v3M1794 543.5h3m-1.5-1.5v3M1794 530.5h3m-1.5-1.5v3M1794 515.5h3m-1.5-1.5v3M1795 500.5h3m-1.5-1.5v3M1795 487.5h3m-1.5-1.5v3M1795 473.5h3m-1.5-1.5v3M1795 460.5h3m-1.5-1.5v3M1796 447.5h3m-1.5-1.5v3M1796 436.5h3m-1.5-1.5v3M1796 425.5h3m-1.5-1.5v3M1796 416.5h3m-1.5-1.5v3M1797 412.5h3m-1.5-1.5v3M1797 407.5h3m-1.5-1.5v3M1797 404.5h3m-1.5-1.5v3M1797 398.5h3m-1.5-1.5v3M1798 392.5h3m-1.5-1.5v3M1799 388.5h3m-1.5-1.5v3M1799 383.5h3m-1.5-1.5v3M1799 381.5h3m-1.5-1.5v3M1800 378.5h3m-1.5-1.5v3M1800 375.5h3m-1.5-1.5v3M1801 373.5h3m-1.5-1.5v3M1801 375.5h3m-1.5-1.5v3M1801 371.5h3m-1.5-1.5v3M1802 367.5h3m-1.5-1.5v3M1802 365.5h3m-1.5-1.5v3M1803 368.5h3m-1.5-1.5v3M1803 364.5h3m-1.5-1.5v3M1803 362.5h3m-1.5-1.5v3M1804 365.5h3m-1.5-1.5v3M1804 362.5h3m-1.5-1.5v3M1804 359.5h3m-1.5-1.5v3M1804 362.5h3m-1.5-1.5v3M1805 359.5h3m-1.5-1.5v3M1805 357.5h3m-1.5-1.5v3M1805 355.5h3m-1.5-1.5v3M1806 352.5h3m-1.5-1.5v3M1807 354.5h3m-1.5-1.5v3M1807 351.5h3m-1.5-1.5v3M1807 353.5h3m-1.5-1.5v3M1808 351.5h3m-1.5-1.5v3M1809 349.5h3m-1.5-1.5v3M1809 347.5h3m-1.5-1.5v3M1810 349.5h3m-1.5-1.5v3M1810 346.5h3m-1.5-1.5v3M1810 348.5h3m-1.5-1.5v3M1811 345.5h3m-1.5-1.5v3M1812 347.5h3m-1.5-1.5v3M1813 345.5h3m-1.5-1.5v3M1814 347.5h3m-1.5-1.5v3M1814 345.5h3m-1.5-1.5v3M1814 343.5h3m-1.5-1.5v3M1815 345.5h3m-1.5-1.5v3M1815 347.5h3m-1.5-1.5v3M1816 345.5h3m-1.5-1.5v3M1816 347.5h3m-1.5-1.5v3M1816 344.5h3m-1.5-1.5v3M1817 348.5h3m-1.5-1.5v3M1817 346.5h3m-1.5-1.5v3M1817 349.5h3m-1.5-1.5v3M1818 347.5h3m-1.5-1.5v3M1818 350.5h3m-1.5-1.5v3M1818 348.5h3m-1.5-1.5v3M1819 351.5h3m-1.5-1.5v3M1819 354.5h3m-1.5-1.5v3M1820 351.5h3m-1.5-1.5v3M1820 353.5h3m-1.5-1.5v3M1820 351.5h3m-1.5-1.5v3M1820 354.5h3m-1.5-1.5v3M1821 356.5h3m-1.5-1.5v3M1821 354.5h3m-1.5-1.5v3M1821 358.5h3m-1.5-1.5v3M1822 356.5h3m-1.5-1.5v3M1823 360.5h3m-1.5-1.5v3M1823 363.5h3m-1.5-1.5v3M1824 365.5h3m-1.5-1.5v3M1825 368.5h3m-1.5-1.5v3M1826 372.5h3m-1.5-1.5v3M1828 372.5h3m-1.5-1.5v3M1828 377.5h3m-1.5-1.5v3M1828 375.5h3m-1.5-1.5v3M1829 380.5h3m-1.5-1.5v3M1829 382.5h3m-1.5-1.5v3M1829 384.5h3m-1.5-1.5v3M1830 386.5h3m-1.5-1.5v3M1830 388.5h3m-1.5-1.5v3M1831 393.5h3m-1.5-1.5v3M1831 395.5h3m-1.5-1.5v3M1832 398.5h3m-1.5-1.5v3M1832 402.5h3m-1.5-1.5v3M1833 407.5h3m-1.5-1.5v3M1833 410.5h3m-1.5-1.5v3M1833 413.5h3m-1.5-1.5v3M1834 416.5h3m-1.5-1.5v3M1834 419.5h3m-1.5-1.5v3M1834 422.5h3m-1.5-1.5v3M1835 425.5h3m-1.5-1.5v3M1835 427.5h3m-1.5-1.5v3M1835 429.5h3m-1.5-1.5v3M1835 433.5h3m-1.5-1.5v3M1836 439.5h3m-1.5-1.5v3M1836 443.5h3m-1.5-1.5v3M1836 445.5h3m-1.5-1.5v3M1837 448.5h3m-1.5-1.5v3M1837 456.5h3m-1.5-1.5v3M1837 462.5h3m-1.5-1.5v3M1837 472.5h3m-1.5-1.5v3M1838 485.5h3m-1.5-1.5v3M1838 493.5h3m-1.5-1.5v3M1838 505.5h3m-1.5-1.5v3M1838 519.5h3m-1.5-1.5v3M1839 526.5h3m-1.5-1.5v3M1839 539.5h3m-1.5-1.5v3M1839 548.5h3m-1.5-1.5v3M1839 560.5h3m-1.5-1.5v3M1840 570.5h3m-1.5-1.5v3M1840 584.5h3m-1.5-1.5v3M1840 594.5h3m-1.5-1.5v3M1840 602.5h3m-1.5-1.5v3M1841 617.5h3m-1.5-1.5v3M1841 625.5h3m-1.5-1.5v3M1841 638.5h3m-1.5-1.5v3M1841 646.5h3m-1.5-1.5v3M1841 653.5h3m-1.5-1.5v3M1842 661.5h3m-1.5-1.5v3M1842 666.5h3m-1.5-1.5v3M1842 674.5h3m-1.5-1.5v3M1842 677.5h3m-1.5-1.5v3M1843 681.5h3m-1.5-1.5v3M1843 687.5h3m-1.5-1.5v3M1843 691.5h3m-1.5-1.5v3M1843 693.5h3m-1.5-1.5v3M1844 697.5h3m-1.5-1.5v3M1844 701.5h3m-1.5-1.5v3M1844 707.5h3m-1.5-1.5v3M1844 711.5h3m-1.5-1.5v3M1845 714.5h3m-1.5-1.5v3M1845 716.5h3m-1.5-1.5v3M1845 721.5h3m-1.5-1.5v3M1846 725.5h3m-1.5-1.5v3M1846 730.5h3m-1.5-1.5v3M1846 737.5h3m-1.5-1.5v3M1847 742.5h3m-1.5-1.5v3M1847 740.5h3m-1.5-1.5v3M1847 746.5h3m-1.5-1.5v3M1848 744.5h3m-1.5-1.5v3M1848 749.5h3m-1.5-1.5v3M1849 752.5h3m-1.5-1.5v3M1849 754.5h3m-1.5-1.5v3M1850 756.5h3m-1.5-1.5v3M1851 759.5h3m-1.5-1.5v3M1852 761.5h3m-1.5-1.5v3M1852 757.5h3m-1.5-1.5v3M1852 761.5h3m-1.5-1.5v3M1853 764.5h3m-1.5-1.5v3M1853 766.5h3m-1.5-1.5v3M1853 764.5h3m-1.5-1.5v3M257 269.5h3m-1.5-1.5v3M189 341.5h3m-1.5-1.5v3M189 348.5h3m-1.5-1.5v3M403 879.5h3m-1.5-1.5v3M453 329.5h3m-1.5-1.5v3M554 339.5h3m-1.5-1.5v3M648 828.5h3m-1.5-1.5v3M690 814.5h3m-1.5-1.5v3M678 782.5h3m-1.5-1.5v3M681 790.5h3m-1.5-1.5v3M758 294.5h3m-1.5-1.5v3M764 298.5h3m-1.5-1.5v3M792 320.5h3m-1.5-1.5v3M838 347.5h3m-1.5-1.5v3M851 358.5h3m-1.5-1.5v3M929 331.5h3m-1.5-1.5v3M939 309.5h3m-1.5-1.5v3M949 362.5h3m-1.5-1.5v3M1262 337.5h3m-1.5-1.5v3M1301 781.5h3m-1.5-1.5v3M1708 352.5h3m-1.5-1.5v3M1717 352.5h3m-1.5-1.5v3M1721 352.5h3m-1.5-1.5v3M1819 330.5h3m-1.5-1.5v3M1840 436.5h3m-1.5-1.5v3" fill="none" stroke="#fff" stroke-width="1.25"/><rect x="1068.5" y="216.5" width="719" height="124" fill="none" stroke="#e41010" stroke-width="3"/></svg><div class="t" style="right:1814.5px;top:203.73px;font-size:13.2px;color:#083240;text-align:right;-webkit-text-stroke:0.2px #083240">1</div><div class="t" style="right:1814.5px;top:235.67px;font-size:13.2px;color:#083240;text-align:right;-webkit-text-stroke:0.2px #083240">0.95</div><div class="t" style="right:1814.5px;top:267.61px;font-size:13.2px;color:#083240;text-align:right;-webkit-text-stroke:0.2px #083240">0.9</div><div class="t" style="right:1814.5px;top:299.55px;font-size:13.2px;color:#083240;text-align:right;-webkit-text-stroke:0.2px #083240">0.85</div><div class="t" style="right:1814.5px;top:331.49px;font-size:13.2px;color:#083240;text-align:right;-webkit-text-stroke:0.2px #083240">0.8</div><div class="t" style="right:1814.5px;top:363.43px;font-size:13.2px;color:#083240;text-align:right;-webkit-text-stroke:0.2px #083240">0.75</div><div class="t" style="right:1814.5px;top:395.37px;font-size:13.2px;color:#083240;text-align:right;-webkit-text-stroke:0.2px #083240">0.7</div><div class="t" style="right:1814.5px;top:427.31px;font-size:13.2px;color:#083240;text-align:right;-webkit-text-stroke:0.2px #083240">0.65</div><div class="t" style="right:1814.5px;top:459.25px;font-size:13.2px;color:#083240;text-align:right;-webkit-text-stroke:0.2px #083240">0.6</div><div class="t" style="right:1814.5px;top:491.19px;font-size:13.2px;color:#083240;text-align:right;-webkit-text-stroke:0.2px #083240">0.55</div><div class="t" style="right:1814.5px;top:523.13px;font-size:13.2px;color:#083240;text-align:right;-webkit-text-stroke:0.2px #083240">0.5</div><div class="t" style="right:1814.5px;top:555.07px;font-size:13.2px;color:#083240;text-align:right;-webkit-text-stroke:0.2px #083240">0.45</div><div class="t" style="right:1814.5px;top:587.01px;font-size:13.2px;color:#083240;text-align:right;-webkit-text-stroke:0.2px #083240">0.4</div><div class="t" style="right:1814.5px;top:618.95px;font-size:13.2px;color:#083240;text-align:right;-webkit-text-stroke:0.2px #083240">0.35</div><div class="t" style="right:1814.5px;top:650.89px;font-size:13.2px;color:#083240;text-align:right;-webkit-text-stroke:0.2px #083240">0.3</div><div class="t" style="right:1814.5px;top:682.83px;font-size:13.2px;color:#083240;text-align:right;-webkit-text-stroke:0.2px #083240">0.25</div><div class="t" style="right:1814.5px;top:714.77px;font-size:13.2px;color:#083240;text-align:right;-webkit-text-stroke:0.2px #083240">0.2</div><div class="t" style="right:1814.5px;top:746.71px;font-size:13.2px;color:#083240;text-align:right;-webkit-text-stroke:0.2px #083240">0.15</div><div class="t" style="right:1814.5px;top:778.65px;font-size:13.2px;color:#083240;text-align:right;-webkit-text-stroke:0.2px #083240">0.1</div><div class="t" style="right:1814.5px;top:810.59px;font-size:13.2px;color:#083240;text-align:right;-webkit-text-stroke:0.2px #083240">0.05</div><div class="t" style="right:1814.5px;top:842.53px;font-size:13.2px;color:#083240;text-align:right;-webkit-text-stroke:0.2px #083240">0</div><div class="t" style="right:1814.5px;top:874.47px;font-size:13.2px;color:#083240;text-align:right;-webkit-text-stroke:0.2px #083240">-0.05</div><div class="t" style="right:1814.5px;top:906.41px;font-size:13.2px;color:#083240;text-align:right;-webkit-text-stroke:0.2px #083240">-0.1</div><div class="b" style="left:87px;top:921px;width:54px;height:19px;background:#e6ff2c"></div><div class="t" style="left:74.0px;width:80px;text-align:center;top:924.36px;font-size:13.4px;color:#1a1a00;transform:scaleY(1.12);-webkit-text-stroke:0.25px #1a1a00">00:00:00</div><div class="b" style="left:160px;top:921px;width:54px;height:19px;background:#e6ff2c"></div><div class="t" style="left:147.5px;width:80px;text-align:center;top:924.36px;font-size:13.4px;color:#1a1a00;transform:scaleY(1.12);-webkit-text-stroke:0.25px #1a1a00">00:05:00</div><div class="b" style="left:234px;top:921px;width:54px;height:19px;background:#e6ff2c"></div><div class="t" style="left:221.0px;width:80px;text-align:center;top:924.36px;font-size:13.4px;color:#1a1a00;transform:scaleY(1.12);-webkit-text-stroke:0.25px #1a1a00">00:10:00</div><div class="b" style="left:308px;top:921px;width:54px;height:19px;background:#e6ff2c"></div><div class="t" style="left:294.5px;width:80px;text-align:center;top:924.36px;font-size:13.4px;color:#1a1a00;transform:scaleY(1.12);-webkit-text-stroke:0.25px #1a1a00">00:15:00</div><div class="b" style="left:381px;top:921px;width:54px;height:19px;background:#e6ff2c"></div><div class="t" style="left:368.0px;width:80px;text-align:center;top:924.36px;font-size:13.4px;color:#1a1a00;transform:scaleY(1.12);-webkit-text-stroke:0.25px #1a1a00">00:20:00</div><div class="b" style="left:454px;top:921px;width:54px;height:19px;background:#e6ff2c"></div><div class="t" style="left:441.5px;width:80px;text-align:center;top:924.36px;font-size:13.4px;color:#1a1a00;transform:scaleY(1.12);-webkit-text-stroke:0.25px #1a1a00">00:25:00</div><div class="b" style="left:528px;top:921px;width:54px;height:19px;background:#e6ff2c"></div><div class="t" style="left:515.0px;width:80px;text-align:center;top:924.36px;font-size:13.4px;color:#1a1a00;transform:scaleY(1.12);-webkit-text-stroke:0.25px #1a1a00">00:30:00</div><div class="b" style="left:602px;top:921px;width:54px;height:19px;background:#e6ff2c"></div><div class="t" style="left:588.5px;width:80px;text-align:center;top:924.36px;font-size:13.4px;color:#1a1a00;transform:scaleY(1.12);-webkit-text-stroke:0.25px #1a1a00">00:35:00</div><div class="b" style="left:675px;top:921px;width:54px;height:19px;background:#e6ff2c"></div><div class="t" style="left:662.0px;width:80px;text-align:center;top:924.36px;font-size:13.4px;color:#1a1a00;transform:scaleY(1.12);-webkit-text-stroke:0.25px #1a1a00">00:40:00</div><div class="b" style="left:748px;top:921px;width:54px;height:19px;background:#e6ff2c"></div><div class="t" style="left:735.5px;width:80px;text-align:center;top:924.36px;font-size:13.4px;color:#1a1a00;transform:scaleY(1.12);-webkit-text-stroke:0.25px #1a1a00">00:45:00</div><div class="b" style="left:822px;top:921px;width:54px;height:19px;background:#e6ff2c"></div><div class="t" style="left:809.0px;width:80px;text-align:center;top:924.36px;font-size:13.4px;color:#1a1a00;transform:scaleY(1.12);-webkit-text-stroke:0.25px #1a1a00">00:50:00</div><div class="b" style="left:896px;top:921px;width:54px;height:19px;background:#e6ff2c"></div><div class="t" style="left:882.5px;width:80px;text-align:center;top:924.36px;font-size:13.4px;color:#1a1a00;transform:scaleY(1.12);-webkit-text-stroke:0.25px #1a1a00">00:55:00</div><div class="b" style="left:969px;top:921px;width:54px;height:19px;background:#e6ff2c"></div><div class="t" style="left:956.0px;width:80px;text-align:center;top:924.36px;font-size:13.4px;color:#1a1a00;transform:scaleY(1.12);-webkit-text-stroke:0.25px #1a1a00">01:00:00</div><div class="b" style="left:1042px;top:921px;width:54px;height:19px;background:#e6ff2c"></div><div class="t" style="left:1029.5px;width:80px;text-align:center;top:924.36px;font-size:13.4px;color:#1a1a00;transform:scaleY(1.12);-webkit-text-stroke:0.25px #1a1a00">01:05:00</div><div class="b" style="left:1116px;top:921px;width:54px;height:19px;background:#e6ff2c"></div><div class="t" style="left:1103.0px;width:80px;text-align:center;top:924.36px;font-size:13.4px;color:#1a1a00;transform:scaleY(1.12);-webkit-text-stroke:0.25px #1a1a00">01:10:00</div><div class="b" style="left:1190px;top:921px;width:54px;height:19px;background:#e6ff2c"></div><div class="t" style="left:1176.5px;width:80px;text-align:center;top:924.36px;font-size:13.4px;color:#1a1a00;transform:scaleY(1.12);-webkit-text-stroke:0.25px #1a1a00">01:15:00</div><div class="b" style="left:1263px;top:921px;width:54px;height:19px;background:#e6ff2c"></div><div class="t" style="left:1250.0px;width:80px;text-align:center;top:924.36px;font-size:13.4px;color:#1a1a00;transform:scaleY(1.12);-webkit-text-stroke:0.25px #1a1a00">01:20:00</div><div class="b" style="left:1336px;top:921px;width:54px;height:19px;background:#e6ff2c"></div><div class="t" style="left:1323.5px;width:80px;text-align:center;top:924.36px;font-size:13.4px;color:#1a1a00;transform:scaleY(1.12);-webkit-text-stroke:0.25px #1a1a00">01:25:00</div><div class="b" style="left:1410px;top:921px;width:54px;height:19px;background:#e6ff2c"></div><div class="t" style="left:1397.0px;width:80px;text-align:center;top:924.36px;font-size:13.4px;color:#1a1a00;transform:scaleY(1.12);-webkit-text-stroke:0.25px #1a1a00">01:30:00</div><div class="b" style="left:1484px;top:921px;width:54px;height:19px;background:#e6ff2c"></div><div class="t" style="left:1470.5px;width:80px;text-align:center;top:924.36px;font-size:13.4px;color:#1a1a00;transform:scaleY(1.12);-webkit-text-stroke:0.25px #1a1a00">01:35:00</div><div class="b" style="left:1557px;top:921px;width:54px;height:19px;background:#e6ff2c"></div><div class="t" style="left:1544.0px;width:80px;text-align:center;top:924.36px;font-size:13.4px;color:#1a1a00;transform:scaleY(1.12);-webkit-text-stroke:0.25px #1a1a00">01:40:00</div><div class="b" style="left:1630px;top:921px;width:54px;height:19px;background:#e6ff2c"></div><div class="t" style="left:1617.5px;width:80px;text-align:center;top:924.36px;font-size:13.4px;color:#1a1a00;transform:scaleY(1.12);-webkit-text-stroke:0.25px #1a1a00">01:45:00</div><div class="b" style="left:1704px;top:921px;width:54px;height:19px;background:#e6ff2c"></div><div class="t" style="left:1691.0px;width:80px;text-align:center;top:924.36px;font-size:13.4px;color:#1a1a00;transform:scaleY(1.12);-webkit-text-stroke:0.25px #1a1a00">01:50:00</div><div class="b" style="left:1827px;top:921px;width:54px;height:19px;background:#e6ff2c"></div><div class="t" style="left:1827.5px;top:924.36px;font-size:13.4px;color:#1a1a00;transform:scaleY(1.12);-webkit-text-stroke:0.25px #1a1a00">01:58:24</div><div class="b" style="left:46px;top:508px;width:19px;height:103px;background:#fff"></div><div class="t" style="left:55.5px;top:559.5px;font-size:15px;color:#111;transform:translate(-50%,-50%) rotate(-90deg);white-space:nowrap;line-height:15px">Spannung Volt</div><div class="t" style="left:1080px;top:228.89px;font-size:19.5px;color:#8eef8a;letter-spacing:0.45px">Drehzahl erhöhen: Regelung wird schneller.</div><div class="t" style="left:1080px;top:253.09px;font-size:19.5px;color:#8eef8a;letter-spacing:0.51px">Im Leerlauf wieder die langsame Regelung.</div><div class="b" style="left:769px;top:47px;width:86px;height:190px;background:#f2f2f2;border:1px solid #cfcfcf;box-sizing:border-box"></div><div class="b" style="left:770px;top:48px;width:84px;height:35px;background:#fff"></div><div class="t" style="left:777px;top:58.30px;font-size:15px;color:#9a9a9a;">Tools</div><div class="b" style="left:828px;top:54px;width:25px;height:25px;background:#e3e3e3"></div><svg class="b" style="left:834px;top:60px" width="13" height="13"><path d="M3 3L10 10M10 3L3 10" stroke="#fafafa" stroke-width="1.2"/></svg><div class="b" style="left:770px;top:83px;width:84px;height:26px;background:#7d7d7d;border-top:2px solid #333;border-bottom:2px solid #333;box-sizing:border-box"></div><div class="b" style="left:770px;top:109px;width:84px;height:83px;background:#2e2e2e"></div><div class="b" style="left:770px;top:109px;width:26px;height:27px;background:#ebebeb;box-shadow:inset 1px 1px 0 #fff"></div><div class="b" style="left:798px;top:109px;width:26px;height:27px;background:#7a7a7a;box-shadow:inset 1px 1px 0 #fff"></div><div class="b" style="left:826px;top:109px;width:28px;height:27px;background:#ebebeb;box-shadow:inset 1px 1px 0 #fff"></div><div class="b" style="left:770px;top:138px;width:26px;height:25px;background:#ebebeb;box-shadow:inset 1px 1px 0 #fff"></div><div class="b" style="left:798px;top:138px;width:26px;height:25px;background:#ebebeb;box-shadow:inset 1px 1px 0 #fff"></div><div class="b" style="left:826px;top:138px;width:28px;height:25px;background:#ebebeb;box-shadow:inset 1px 1px 0 #fff"></div><div class="b" style="left:770px;top:165px;width:26px;height:26px;background:#ebebeb;box-shadow:inset 1px 1px 0 #fff"></div><div class="b" style="left:798px;top:165px;width:26px;height:26px;background:#ebebeb;box-shadow:inset 1px 1px 0 #fff"></div><div class="b" style="left:826px;top:165px;width:28px;height:26px;background:#ebebeb;box-shadow:inset 1px 1px 0 #fff"></div><div class="b" style="left:770px;top:192px;width:84px;height:44px;background:#ececec;border-top:2px solid #2e2e2e;box-sizing:border-box"></div><svg class="b" style="left:770px;top:83px" width="84" height="153" viewBox="0 0 84 153">
<!-- wrench / screwdriver -->
<path d="M8 6 L26 22" stroke="#444" stroke-width="3.2"/><path d="M8 6 L26 22" stroke="#d8d8d8" stroke-width="1.6"/>
<path d="M8 21 L20 9" stroke="#444" stroke-width="3"/><path d="M8 21 L20 9" stroke="#d8d8d8" stroke-width="1.4"/>
<circle cx="20" cy="9" r="3" fill="none" stroke="#d8d8d8" stroke-width="1.3"/><circle cx="8" cy="21" r="2.6" fill="none" stroke="#d8d8d8" stroke-width="1.3"/>
<path d="M19 15 L28 23" stroke="#3a0a0a" stroke-width="4.2"/><path d="M19 15 L28 23" stroke="#c01c1c" stroke-width="2.6"/>
<rect x="40" y="3" width="37" height="17" fill="#b4b4b4" stroke="#9a9a9a" stroke-width="1"/><rect x="43" y="5.5" width="32" height="12" fill="#2ee000"/><rect x="43" y="13" width="32" height="4.5" fill="#20a800"/><rect x="45" y="7" width="8" height="3" fill="#9af890"/>
<!-- finger hand -->
<path d="M10 42 V32.5 C10 30.5 13 30.5 13 32.5 V40 C13.5 38.5 16 38.5 16.5 40.5 C17 39 19.5 39 20 41 C20.5 40 23 40 23 42.5 V47 C23 50 21 51 19 51 H12 C9.5 51 6.5 48 4.5 44 C4 42.5 6.5 41 8.5 43 Z" fill="#f8c898" stroke="#111" stroke-width="1.1"/>
<path d="M16.5 41V45M20 42V46" stroke="#111" stroke-width="0.8"/>
<!-- arrow pointer -->
<path d="M36 32 L36 49 L40 45 L43 52 L46 51 L43 44 L48 44 Z" fill="#fff" stroke="#000" stroke-width="1.2"/>
<!-- A -->
<text x="57" y="50" font-family="Liberation Serif" font-weight="bold" font-size="22" fill="#000">A</text><path d="M78 32 V52" stroke="#000" stroke-width="1" stroke-dasharray="1.5 1.5"/>
<!-- spool -->
<path d="M7 63 L19 75" stroke="#5a3e22" stroke-width="9"/><path d="M9 62L17 70M6 66L14 74M12 61L20 69" stroke="#b09070" stroke-width="0.8"/>
<path d="M3 68 L12 59" stroke="#111" stroke-width="2.5"/><path d="M14 80 L23 71" stroke="#111" stroke-width="2.5"/><path d="M8 60 C10 56 14 57 16 59" stroke="#111" stroke-width="1" fill="none"/>
<!-- shortcut menu -->
<path d="M32 57 L32 68 L35 65 L37.5 69.5 L39.5 68.5 L37 64 L41 64 Z" fill="#000"/><rect x="40.5" y="65.5" width="12" height="13" fill="#222" stroke="#111" stroke-width="1"/><path d="M42.5 69H50.5M42.5 72.5H50.5M42.5 76H50.5" stroke="#eee" stroke-width="1.6"/>
<!-- open hand -->
<path d="M62 70 C59 67 58 63 60.5 62.5 C61.5 62.3 62.5 63 63.5 65 V59 C63.5 57 66 57 66.5 59 V57.5 C66.5 55.5 69.5 55.5 70 57.5 V58.5 C70.5 56.5 73.5 56.5 73.5 58.5 V61 C74 59.5 77 59.5 77 62 V69 C77 74 74.5 77.5 70 77.5 H67.5 C65 77.5 63.5 73.5 62 70 Z" fill="#f8c898" stroke="#111" stroke-width="1.1"/>
<path d="M66.5 59V66M70 58.5V65.5M73.5 61V67" stroke="#111" stroke-width="0.8"/>
<!-- breakpoint -->
<path d="M10 86 H18 L23 91 V99 L18 104 H10 L5 99 V91 Z" fill="#e02020" stroke="#333" stroke-width="1.2"/><path d="M3 83 L7 87" stroke="#333" stroke-width="1"/>
<!-- probe -->
<path d="M29 95 H51" stroke="#222" stroke-width="1"/><circle cx="41" cy="95" r="6" fill="#f0e020" stroke="#222" stroke-width="1.2"/><text x="38" y="99" font-family="Liberation Sans" font-weight="bold" font-size="9" fill="#222">P</text>
<!-- eyedropper -->
<path d="M59 104 L72 90" stroke="#2040b0" stroke-width="3"/><path d="M62 101 L68 95" stroke="#e8e8f8" stroke-width="2"/><circle cx="76" cy="85" r="4" fill="#d01830"/><path d="M70 88 L76 94" stroke="#222" stroke-width="1.5"/>
<!-- color squares -->
<rect x="19" y="130" width="19" height="19" fill="#111"/><rect x="17" y="128" width="19" height="19" fill="#e8e8e8" stroke="#333" stroke-width="1"/><rect x="7" y="117" width="19" height="19" fill="#111"/><rect x="5" y="115" width="19" height="19" fill="#e4e4e4" stroke="#333" stroke-width="1"/>
<!-- brush -->
<path d="M74 118 L62 133" stroke="#8a6a40" stroke-width="3"/><path d="M63 131 L57 139 L52 142 L55 137 L60 129 Z" fill="#222"/><path d="M55 138 L52 142 L56 140 Z" fill="#f0e020"/>
</svg><svg class="b" style="left:1490px;top:900px" width="80" height="85" viewBox="1490 900 80 85"><g fill="rgba(255,255,255,0.40)"><path d="M1497 930 Q1515 906 1558 913 L1553 919 Q1524 913 1504 935 Z"/><path d="M1554 915 L1522 950 L1528 952 L1559 918 Z"/><path d="M1508 940 L1550 957 L1518 963 L1507 978 Q1503 958 1508 940 Z"/></g></svg><div class="t" style="left:1560px;top:913.57px;font-size:26.5px;color:;color:rgba(255,255,255,0.48);font-weight:bold;text-shadow:1px 2px 1px rgba(0,60,0,0.16);transform:scaleX(0.96);transform-origin:0 0">NATIONAL</div><div class="t" style="left:1549px;top:940.41px;font-size:25.5px;color:;color:rgba(255,255,255,0.48);font-weight:bold;text-shadow:1px 2px 1px rgba(0,60,0,0.16);transform-origin:0 0">INSTRUMENTS</div><div class="t" style="left:1524px;top:974.11px;font-size:23.5px;color:;color:rgba(255,255,255,0.48);font-weight:bold;text-shadow:1px 2px 1px rgba(0,60,0,0.16);transform:scaleX(0.88);transform-origin:0 0;white-space:nowrap">LabVIEW<span style="font-size:9px;vertical-align:top">™</span> Home and Student Edition</div>
</body></html>
